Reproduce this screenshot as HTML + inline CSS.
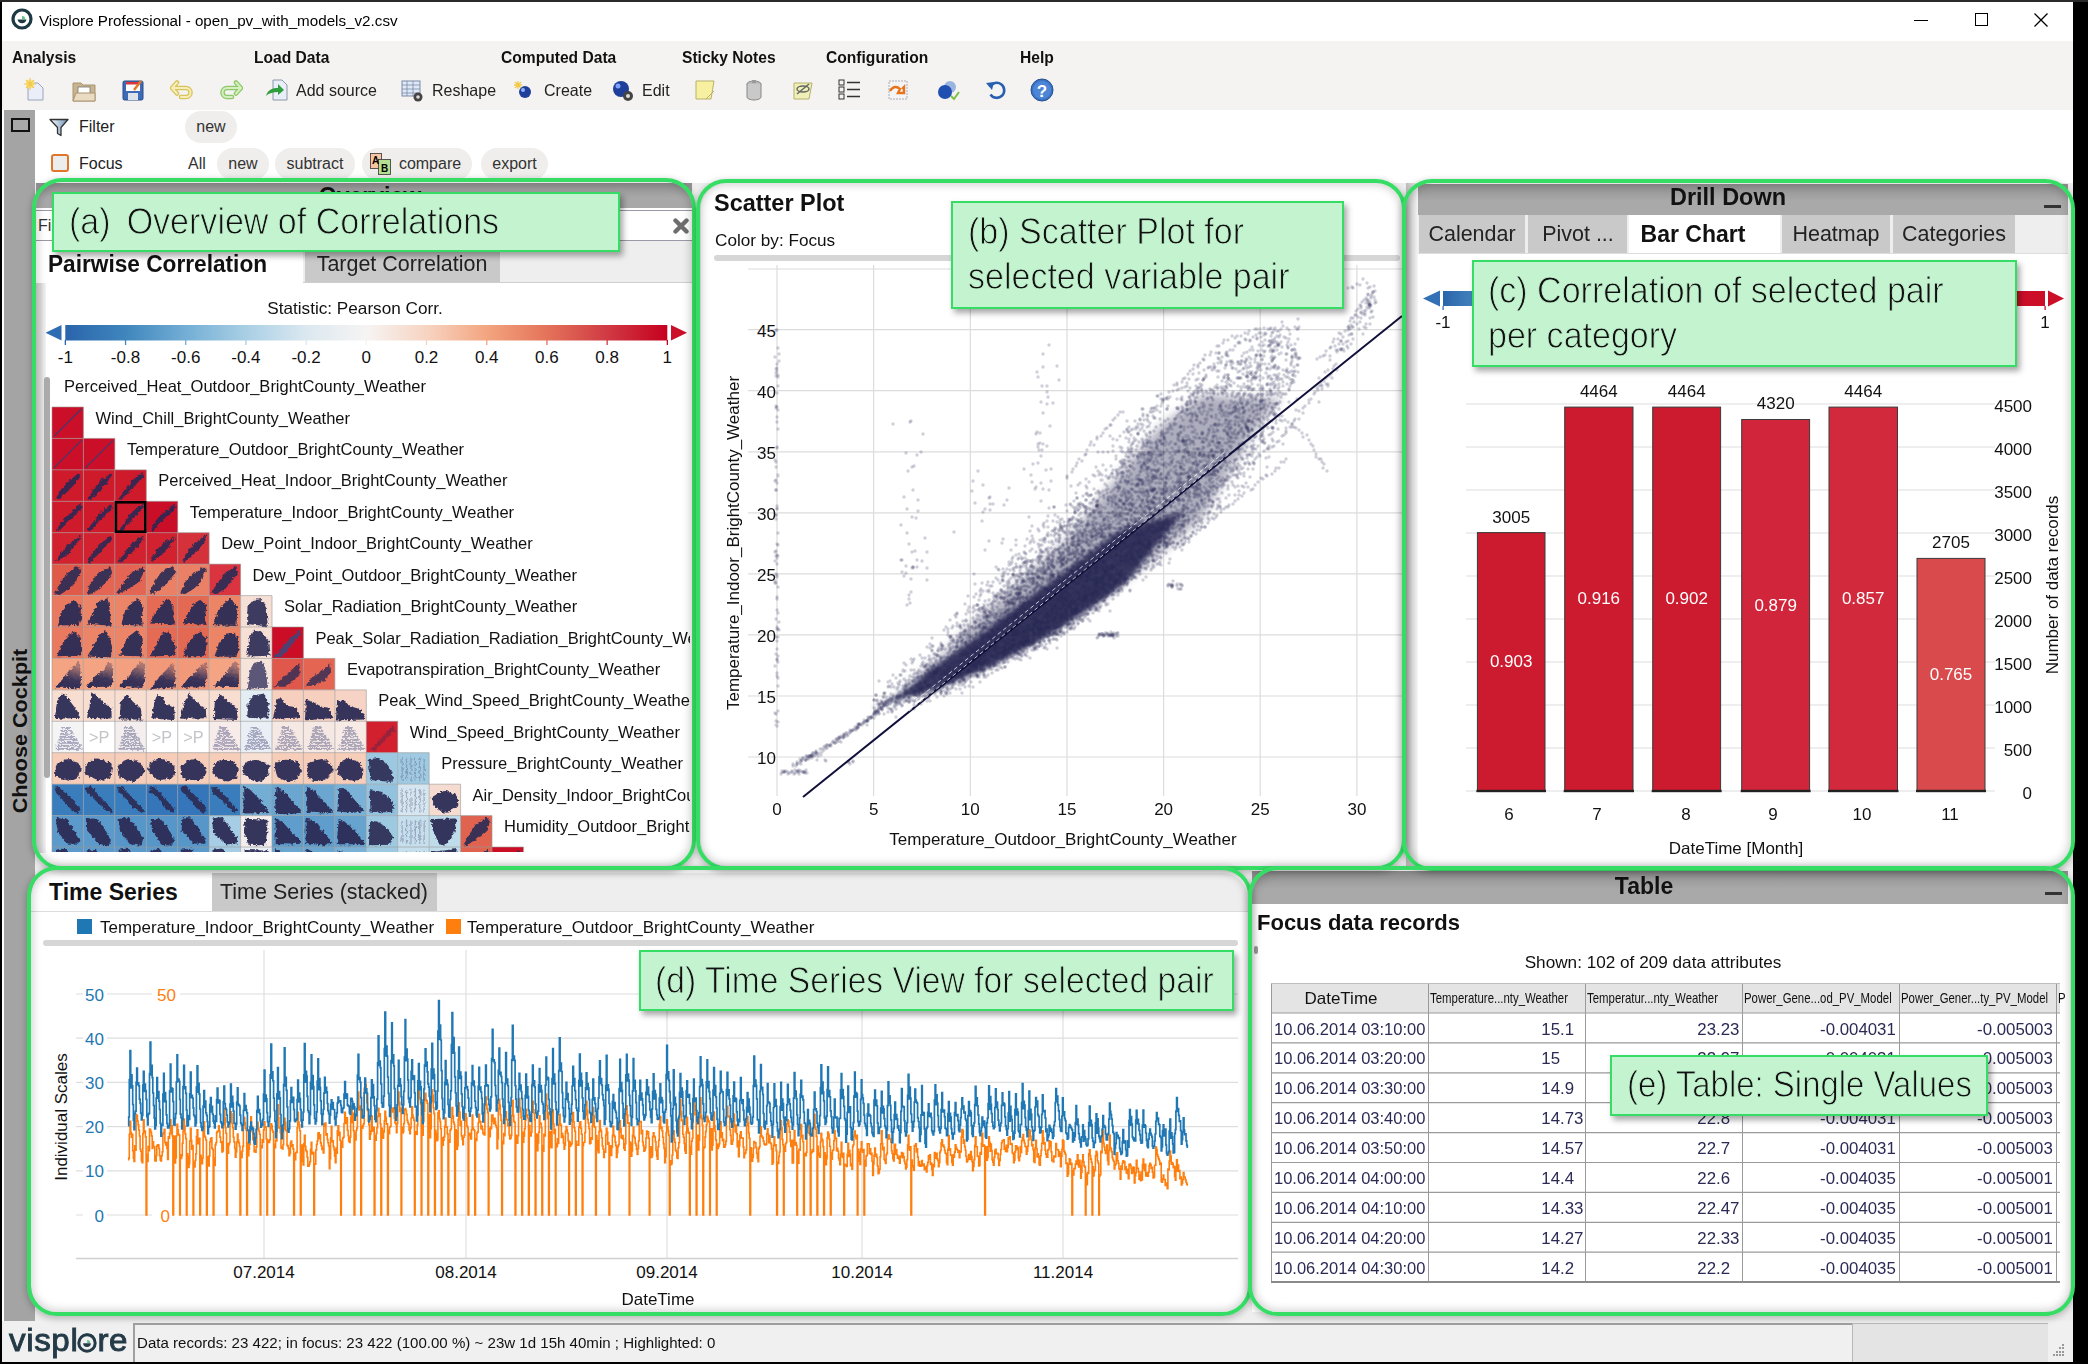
<!DOCTYPE html>
<html><head><meta charset="utf-8"><title>Visplore</title>
<style>
html,body{margin:0;padding:0;width:2088px;height:1364px;overflow:hidden;background:#000;}
body{position:relative;font-family:"Liberation Sans",sans-serif;}
.r{position:absolute;}
.t{position:absolute;white-space:nowrap;}
svg{overflow:hidden}
</style></head><body>
<div class="r" style="left:0px;top:0px;width:2088px;height:1364px;background:#000;"></div>
<div class="r" style="left:2px;top:2px;width:2071px;height:1360px;background:#fff;"></div>
<div class="r" style="left:0px;top:0px;width:2088px;height:2px;background:#2a2a2a;"></div>
<svg class="r" style="left:11px;top:8px" width="22" height="22" viewBox="0 0 22 22">
<circle cx="11" cy="11" r="9" fill="none" stroke="#1d3a44" stroke-width="3.2"/>
<path d="M6.5 11.5 A4.6 4.6 0 0 0 15.5 11.5 Z" fill="#1d3a44"/>
<path d="M11 11.3 L11 8 A3.4 3.4 0 0 1 14.3 11.3 Z" fill="#5fc08a"/>
</svg><div class="t" style="top:4.5px;height:31.0px;line-height:31.0px;font-size:15.5px;color:#000;left:39.0px;transform:scaleX(0.98);transform-origin:0 50%;">Visplore Professional - open_pv_with_models_v2.csv</div>
<div class="r" style="left:1914px;top:20px;width:14px;height:1.4px;background:#000;"></div>
<div class="r" style="left:1975px;top:13px;width:13px;height:13px;background:transparent;border:1.3px solid #000;box-sizing:border-box;"></div>
<svg class="r" style="left:2033px;top:12px" width="16" height="16" viewBox="0 0 16 16"><path d="M1.5 1.5 L14.5 14.5 M14.5 1.5 L1.5 14.5" stroke="#000" stroke-width="1.3"/></svg><div class="r" style="left:2px;top:41px;width:2071px;height:69px;background:#f4f3f2;"></div>
<div class="t" style="top:42.0px;height:32px;line-height:32px;font-size:16px;color:#111;font-weight:bold;left:12.0px;transform:scaleX(0.975);transform-origin:0 50%;">Analysis</div>
<div class="t" style="top:42.0px;height:32px;line-height:32px;font-size:16px;color:#111;font-weight:bold;left:254.0px;transform:scaleX(0.975);transform-origin:0 50%;">Load Data</div>
<div class="t" style="top:42.0px;height:32px;line-height:32px;font-size:16px;color:#111;font-weight:bold;left:501.0px;transform:scaleX(0.975);transform-origin:0 50%;">Computed Data</div>
<div class="t" style="top:42.0px;height:32px;line-height:32px;font-size:16px;color:#111;font-weight:bold;left:682.0px;transform:scaleX(0.975);transform-origin:0 50%;">Sticky Notes</div>
<div class="t" style="top:42.0px;height:32px;line-height:32px;font-size:16px;color:#111;font-weight:bold;left:826.0px;transform:scaleX(0.975);transform-origin:0 50%;">Configuration</div>
<div class="t" style="top:42.0px;height:32px;line-height:32px;font-size:16px;color:#111;font-weight:bold;left:1020.0px;transform:scaleX(0.975);transform-origin:0 50%;">Help</div>
<div class="t" style="top:73.5px;height:33.0px;line-height:33.0px;font-size:16.5px;color:#222;left:296.0px;transform:scaleX(0.97);transform-origin:0 50%;">Add source</div>
<div class="t" style="top:73.5px;height:33.0px;line-height:33.0px;font-size:16.5px;color:#222;left:432.0px;transform:scaleX(0.97);transform-origin:0 50%;">Reshape</div>
<div class="t" style="top:73.5px;height:33.0px;line-height:33.0px;font-size:16.5px;color:#222;left:544.0px;transform:scaleX(0.97);transform-origin:0 50%;">Create</div>
<div class="t" style="top:73.5px;height:33.0px;line-height:33.0px;font-size:16.5px;color:#222;left:642.0px;transform:scaleX(0.97);transform-origin:0 50%;">Edit</div>
<svg class="r" style="left:24px;top:78px" width="22" height="24" viewBox="0 0 22 24"><path d="M4 5 H14 L19 10 V22 H4 Z" fill="#e9eef8" stroke="#9aa4b8" stroke-width="1"/><circle cx="6" cy="6" r="4" fill="#fbe27a"/><path d="M6 0 V12 M0 6 H12 M2 2 L10 10 M10 2 L2 10" stroke="#f2c94c" stroke-width="1.2"/></svg><svg class="r" style="left:72px;top:80px" width="24" height="22" viewBox="0 0 24 22"><path d="M1 3 H9 L11 5 H23 V21 H1 Z" fill="#c9b48f" stroke="#a89471" stroke-width="1"/><rect x="6" y="7" width="12" height="7" fill="#fff" stroke="#777" stroke-width="0.8"/><path d="M1 21 L4 13 H23 V21 Z" fill="#e9dcc3" stroke="#a89471" stroke-width="1"/></svg><svg class="r" style="left:122px;top:79px" width="22" height="22" viewBox="0 0 22 22"><rect x="1" y="2" width="20" height="19" rx="1.5" fill="#3d6bb5" stroke="#2a4d8a"/><rect x="4" y="3" width="14" height="9" fill="#fff"/><rect x="4" y="3" width="14" height="2.5" fill="#d9363e"/><rect x="6" y="14" width="10" height="7" fill="#dde3ea"/><path d="M12 11 L19 2" stroke="#e07a2a" stroke-width="2.5"/></svg><svg class="r" style="left:170px;top:80px" width="24" height="20" viewBox="0 0 24 20"><g fill="none" stroke-linejoin="round" stroke-linecap="round"><path d="M7 2.5 L2 8 L7 13.5 M2.5 8 H16 A4.5 4.5 0 0 1 16 17 H11" stroke="#d8c35c" stroke-width="4.6"/><path d="M7 2.5 L2 8 L7 13.5 M2.5 8 H16 A4.5 4.5 0 0 1 16 17 H11" stroke="#f6eeb8" stroke-width="2"/></g></svg><svg class="r" style="left:219px;top:80px" width="24" height="20" viewBox="0 0 24 20"><g fill="none" stroke-linejoin="round" stroke-linecap="round"><path d="M17 2.5 L22 8 L17 13.5 M21.5 8 H8 A4.5 4.5 0 0 0 8 17 H13" stroke="#8fc86a" stroke-width="4.6"/><path d="M17 2.5 L22 8 L17 13.5 M21.5 8 H8 A4.5 4.5 0 0 0 8 17 H13" stroke="#d5efc0" stroke-width="2"/></g></svg><svg class="r" style="left:265px;top:79px" width="24" height="22" viewBox="0 0 24 22"><path d="M8 1 H17 L22 6 V21 H8 Z" fill="#e9eef8" stroke="#8a95a8" stroke-width="1"/><path d="M1 17 C3 10 8 9 13 9 V5 L19 11 L13 16 V13 C8 13 4 14 1 17 Z" fill="#2e9e3e"/></svg><svg class="r" style="left:401px;top:79px" width="24" height="24" viewBox="0 0 24 24"><rect x="1" y="2" width="18" height="15" fill="#dfe8f5" stroke="#7a8aa8"/><path d="M1 6 H19 M1 10 H19 M1 14 H19 M6 2 V17 M12 2 V17" stroke="#7a8aa8" stroke-width="0.8"/><circle cx="17" cy="18" r="4.5" fill="#444"/><circle cx="17" cy="18" r="1.8" fill="#ddd"/></svg><svg class="r" style="left:513px;top:80px" width="22" height="20" viewBox="0 0 22 20"><circle cx="12" cy="12" r="6" fill="#1f3f9a"/><circle cx="10" cy="10" r="2" fill="#8fb0ff"/><path d="M5 1 V9 M1 5 H9 M2 2 L8 8 M8 2 L2 8" stroke="#f2c94c" stroke-width="1.3"/></svg><svg class="r" style="left:611px;top:79px" width="24" height="24" viewBox="0 0 24 24"><circle cx="10" cy="10" r="8" fill="#1f3f9a"/><circle cx="7" cy="7" r="2.5" fill="#7fa0ff"/><circle cx="17" cy="17" r="5" fill="#444"/><circle cx="17" cy="17" r="2" fill="#ddd"/></svg><svg class="r" style="left:694px;top:79px" width="22" height="22" viewBox="0 0 22 22"><path d="M2 2 H20 L17 20 H2 Z" fill="#f7f0a0" stroke="#b9b06a" stroke-width="1"/><path d="M12 20 L20 12" stroke="#b9b06a"/></svg><svg class="r" style="left:743px;top:79px" width="22" height="22" viewBox="0 0 22 22"><ellipse cx="11" cy="5" rx="7" ry="3" fill="#bbb" stroke="#888"/><path d="M4 5 V18 A7 3 0 0 0 18 18 V5" fill="#c9c9c9" stroke="#888"/><rect x="9" y="1" width="4" height="3" fill="#999"/></svg><svg class="r" style="left:792px;top:79px" width="22" height="22" viewBox="0 0 22 22"><path d="M2 4 H20 L17 20 H2 Z" fill="#eef0b8" stroke="#b9b06a" stroke-width="1"/><ellipse cx="11" cy="10" rx="6" ry="3" fill="none" stroke="#666" stroke-width="1.5"/><path d="M5 15 L17 5" stroke="#666" stroke-width="1.5"/></svg><svg class="r" style="left:838px;top:79px" width="24" height="22" viewBox="0 0 24 22"><rect x="1" y="1" width="5" height="5" fill="none" stroke="#333"/><rect x="1" y="8" width="5" height="5" fill="none" stroke="#333"/><rect x="1" y="15" width="5" height="5" fill="none" stroke="#333"/><path d="M9 3.5 H22 M9 10.5 H22 M9 17.5 H22" stroke="#333" stroke-width="1.3"/></svg><svg class="r" style="left:887px;top:79px" width="22" height="22" viewBox="0 0 22 22"><rect x="2" y="2" width="18" height="18" fill="#f4f4f4" stroke="#aab" stroke-dasharray="2 1"/><path d="M3 12 C6 7 10 7 13 10 L11 14 H17 V8 L15 10" fill="none" stroke="#e8731a" stroke-width="2.4"/></svg><svg class="r" style="left:936px;top:79px" width="24" height="22" viewBox="0 0 24 22"><circle cx="14" cy="8" r="6" fill="#9ab3df"/><circle cx="9" cy="13" r="7" fill="#1f4fb0"/><path d="M15 17 L18 20 L23 13" fill="none" stroke="#7bc043" stroke-width="2"/></svg><svg class="r" style="left:985px;top:79px" width="22" height="22" viewBox="0 0 22 22"><path d="M5 8 A7.5 7.5 0 1 1 5.5 15.5" fill="none" stroke="#2a5fb0" stroke-width="2.6"/><path d="M1 4 L7 11 L9 3 Z" fill="#2a5fb0"/></svg><svg class="r" style="left:1030px;top:78px" width="24" height="24" viewBox="0 0 24 24"><circle cx="12" cy="12" r="11" fill="#3b73c4" stroke="#244f91"/><circle cx="12" cy="12" r="9" fill="#4d86d6"/><text x="12" y="18.5" font-size="17" font-weight="bold" fill="#fff" text-anchor="middle" font-family="Liberation Sans">?</text></svg><div class="r" style="left:4px;top:110px;width:31px;height:1211px;background:#a4a4a4;"></div>
<div class="r" style="left:11px;top:118px;width:19px;height:14px;background:transparent;border:2.5px solid #111;box-sizing:border-box;background:#a8a8a8;"></div>
<div class="t" style="left:-80px;top:716px;width:200px;height:30px;line-height:30px;text-align:center;font-size:21px;font-weight:bold;color:#111;transform:rotate(-90deg) scaleX(1.03)">Choose Cockpit</div><div class="r" style="left:35px;top:110px;width:2038px;height:70px;background:#fff;"></div>
<svg class="r" style="left:49px;top:118px" width="20" height="19" viewBox="0 0 20 19"><defs><linearGradient id="fg" x1="0" x2="1"><stop offset="0" stop-color="#fff"/><stop offset="1" stop-color="#6a8fb8"/></linearGradient></defs><path d="M1 1.5 H19 L12 9.5 V17.5 L8.5 15.5 V9.5 Z" fill="url(#fg)" stroke="#333" stroke-width="1.3" stroke-linejoin="round"/></svg><div class="t" style="top:111.0px;height:32px;line-height:32px;font-size:16px;color:#222;left:79.0px;">Filter</div>
<div class="r" style="left:185px;top:111px;width:52px;height:32px;background:#efeeec;border-radius:16px;"></div>
<div class="t" style="top:111.0px;height:32px;line-height:32px;font-size:16px;color:#333;left:-789.0px;width:2000px;text-align:center;">new</div>
<div class="r" style="left:51px;top:154px;width:18px;height:18px;background:#eceeee;border:2px solid #e0762c;border-radius:3px;box-sizing:border-box;"></div>
<div class="t" style="top:148.0px;height:32px;line-height:32px;font-size:16px;color:#222;left:79.0px;">Focus</div>
<div class="t" style="top:148.0px;height:32px;line-height:32px;font-size:16px;color:#333;left:188.0px;">All</div>
<div class="r" style="left:217px;top:148px;width:52px;height:32px;background:#efeeec;border-radius:16px;"></div>
<div class="t" style="top:148.0px;height:32px;line-height:32px;font-size:16px;color:#333;left:-757.0px;width:2000px;text-align:center;">new</div>
<div class="r" style="left:275px;top:148px;width:80px;height:32px;background:#efeeec;border-radius:16px;"></div>
<div class="t" style="top:148.0px;height:32px;line-height:32px;font-size:16px;color:#333;left:-685.0px;width:2000px;text-align:center;">subtract</div>
<div class="r" style="left:362px;top:148px;width:110px;height:32px;background:#efeeec;border-radius:16px;"></div>
<div class="t" style="top:148.0px;height:32px;line-height:32px;font-size:16px;color:#333;left:-570.0px;width:2000px;text-align:center;">compare</div>
<div class="r" style="left:481px;top:148px;width:67px;height:32px;background:#efeeec;border-radius:16px;"></div>
<div class="t" style="top:148.0px;height:32px;line-height:32px;font-size:16px;color:#333;left:-485.5px;width:2000px;text-align:center;">export</div>
<svg class="r" style="left:370px;top:153px" width="22" height="22" viewBox="0 0 22 22"><rect x="0.5" y="0.5" width="11" height="15" fill="#f7c59f" stroke="#333" stroke-width="0.8"/><rect x="8.5" y="6.5" width="12" height="15" fill="#b5e08f" stroke="#333" stroke-width="0.8"/><text x="2" y="11" font-size="10" font-weight="bold" font-family="Liberation Sans">A</text><text x="11" y="19" font-size="10" font-weight="bold" font-family="Liberation Sans">B</text></svg><div class="r" style="left:2px;top:1321px;width:2071px;height:41px;background:#f0f0f0;"></div>
<div class="r" style="left:133px;top:1323px;width:1720px;height:39px;background:#f0f0f0;border-left:2px solid #a0a0a0;border-top:2px solid #a0a0a0;box-sizing:border-box;"></div>
<div class="r" style="left:1852px;top:1323px;width:196px;height:39px;background:#e4e4e4;border-left:1.5px solid #b8b8b8;border-top:1.5px solid #b8b8b8;box-sizing:border-box;"></div>
<svg class="r" style="left:2052px;top:1343px" width="14" height="14" viewBox="0 0 14 14"><g fill="#9a9a9a"><rect x="10" y="1" width="2" height="2"/><rect x="7" y="4" width="2" height="2"/><rect x="10" y="4" width="2" height="2"/><rect x="4" y="8" width="2" height="2"/><rect x="7" y="8" width="2" height="2"/><rect x="10" y="8" width="2" height="2"/><rect x="1" y="11" width="2" height="2"/><rect x="4" y="11" width="2" height="2"/><rect x="7" y="11" width="2" height="2"/><rect x="10" y="11" width="2" height="2"/></g></svg><div class="t" style="top:1326.5px;height:31.0px;line-height:31.0px;font-size:15.5px;color:#111;left:137.0px;transform:scaleX(0.972);transform-origin:0 50%;">Data records: 23 422; in focus: 23 422 (100.00 %) ~ 23w 1d 15h 40min ; Highlighted: 0</div>
<div class="t" style="left:9px;top:1319.9px;height:40px;line-height:40px;font-size:32px;color:#243b47;letter-spacing:0.6px;-webkit-text-stroke:0.9px #243b47;transform:scaleX(1.035);transform-origin:0 50%">visplore</div><svg class="r" style="left:76.5px;top:1333px" width="20" height="20" viewBox="0 0 20 20"><circle cx="10" cy="10" r="8.2" fill="#f0f0f0" stroke="#243b47" stroke-width="3"/><path d="M6.2 10.3 A3.8 3.8 0 0 0 13.8 10.3 Z" fill="#243b47"/><path d="M10.2 10 V7 A3 3 0 0 1 13.2 10 Z" fill="#5fc08a"/></svg><div class="r" style="left:35px;top:183px;width:2038px;height:1138px;background:#eeeeee;"></div>
<div class="r" style="left:36px;top:183px;width:656px;height:683px;background:#fff;border-radius:0 0 26px 26px;"></div>
<div class="r" style="left:36px;top:183px;width:656px;height:25px;background:linear-gradient(#8f8f8f,#a8a8a8 60%);"></div>
<div class="t" style="top:172.5px;height:46px;line-height:46px;font-size:23px;color:#111;font-weight:bold;left:-630.0px;width:2000px;text-align:center;">Overview</div>
<div class="r" style="left:36px;top:210px;width:656px;height:1px;background:#9a9aa6;"></div>
<div class="r" style="left:36px;top:240px;width:656px;height:1px;background:#9a9aa6;"></div>
<div class="t" style="top:210.0px;height:32px;line-height:32px;font-size:16px;color:#333;left:38.0px;">Filter</div>
<svg class="r" style="left:673px;top:218px" width="16" height="16" viewBox="0 0 16 16"><path d="M2.5 2.5 L13.5 13.5 M13.5 2.5 L2.5 13.5" stroke="#6e6e6e" stroke-width="4.4" stroke-linecap="round"/></svg><div class="r" style="left:36px;top:241px;width:656px;height:42px;background:#eeeeee;"></div>
<div class="r" style="left:36px;top:241px;width:267px;height:42px;background:#ffffff;"></div>
<div class="r" style="left:305px;top:248px;width:195px;height:34px;background:#c9c9c9;"></div>
<div class="r" style="left:303px;top:282px;width:389px;height:1px;background:#cfcfcf;"></div>
<div class="t" style="top:241.0px;height:46px;line-height:46px;font-size:23px;color:#111;font-weight:bold;left:48.0px;transform:scaleX(0.985);transform-origin:0 50%;">Pairwise Correlation</div>
<div class="t" style="top:242.0px;height:44px;line-height:44px;font-size:22px;color:#222;left:-598.0px;width:2000px;text-align:center;transform:scaleX(0.976);transform-origin:50% 50%;">Target Correlation</div>
<div class="t" style="top:291.5px;height:33.0px;line-height:33.0px;font-size:16.5px;color:#111;left:-645.0px;width:2000px;text-align:center;transform:scaleX(1.04);transform-origin:50% 50%;">Statistic: Pearson Corr.</div>
<svg class="r" style="left:40px;top:318px" width="650" height="32" viewBox="40 318 650 32"><defs><linearGradient id="cb"><stop offset="0.00" stop-color="#2a64ab"/><stop offset="0.10" stop-color="#3f86bd"/><stop offset="0.20" stop-color="#73aed5"/><stop offset="0.30" stop-color="#a9cfe5"/><stop offset="0.40" stop-color="#dbe8f0"/><stop offset="0.50" stop-color="#f6f4f3"/><stop offset="0.60" stop-color="#f7d4c2"/><stop offset="0.70" stop-color="#f3a580"/><stop offset="0.80" stop-color="#e4735a"/><stop offset="0.90" stop-color="#d03a43"/><stop offset="1.00" stop-color="#c6001f"/></linearGradient></defs><rect x="65.3" y="325" width="602" height="15.5" fill="url(#cb)"/><path d="M45.5 332.8 L61.5 325 V340.5 Z" fill="#2f6db3"/><path d="M687 332.8 L671 325 V340.5 Z" fill="#cc0f28"/><rect x="64.7" y="340" width="1.3" height="5" fill="#2a64ab"/><rect x="124.9" y="340" width="1.3" height="5" fill="#3f86bd"/><rect x="185.1" y="340" width="1.3" height="5" fill="#73aed5"/><rect x="245.3" y="340" width="1.3" height="5" fill="#a9cfe5"/><rect x="305.5" y="340" width="1.3" height="5" fill="#dbe8f0"/><rect x="365.7" y="340" width="1.3" height="5" fill="#f6f4f3"/><rect x="425.9" y="340" width="1.3" height="5" fill="#f7d4c2"/><rect x="486.1" y="340" width="1.3" height="5" fill="#f3a580"/><rect x="546.3" y="340" width="1.3" height="5" fill="#e4735a"/><rect x="606.5" y="340" width="1.3" height="5" fill="#d03a43"/><rect x="666.7" y="340" width="1.3" height="5" fill="#c6001f"/></svg><div class="t" style="top:340.5px;height:34px;line-height:34px;font-size:17px;color:#111;left:-934.7px;width:2000px;text-align:center;">-1</div>
<div class="t" style="top:340.5px;height:34px;line-height:34px;font-size:17px;color:#111;left:-874.5px;width:2000px;text-align:center;">-0.8</div>
<div class="t" style="top:340.5px;height:34px;line-height:34px;font-size:17px;color:#111;left:-814.3px;width:2000px;text-align:center;">-0.6</div>
<div class="t" style="top:340.5px;height:34px;line-height:34px;font-size:17px;color:#111;left:-754.1px;width:2000px;text-align:center;">-0.4</div>
<div class="t" style="top:340.5px;height:34px;line-height:34px;font-size:17px;color:#111;left:-693.9px;width:2000px;text-align:center;">-0.2</div>
<div class="t" style="top:340.5px;height:34px;line-height:34px;font-size:17px;color:#111;left:-633.7px;width:2000px;text-align:center;">0</div>
<div class="t" style="top:340.5px;height:34px;line-height:34px;font-size:17px;color:#111;left:-573.5px;width:2000px;text-align:center;">0.2</div>
<div class="t" style="top:340.5px;height:34px;line-height:34px;font-size:17px;color:#111;left:-513.3px;width:2000px;text-align:center;">0.4</div>
<div class="t" style="top:340.5px;height:34px;line-height:34px;font-size:17px;color:#111;left:-453.1px;width:2000px;text-align:center;">0.6</div>
<div class="t" style="top:340.5px;height:34px;line-height:34px;font-size:17px;color:#111;left:-392.9px;width:2000px;text-align:center;">0.8</div>
<div class="t" style="top:340.5px;height:34px;line-height:34px;font-size:17px;color:#111;left:-332.7px;width:2000px;text-align:center;">1</div>
<div class="r" style="left:36px;top:283px;width:10px;height:570px;background:linear-gradient(90deg,#cfcfcf,#dedede 55%,#f4f4f4);"></div>
<div class="r" style="left:43.5px;top:377px;width:6px;height:401px;background:#ababab;border-radius:3px;"></div>
<svg class="r" style="left:36px;top:370px" width="656" height="482" viewBox="36 370 656 482"><defs><linearGradient id="gv" x1="0" y1="1" x2="0.3" y2="0"><stop offset="0" stop-color="#2a2a55"/><stop offset="0.5" stop-color="#2a2a55" stop-opacity="0.9"/><stop offset="1" stop-color="#2a2a55" stop-opacity="0.35"/></linearGradient><filter id="rough" x="0" y="0" width="100%" height="100%"><feTurbulence type="fractalNoise" baseFrequency="0.35" numOctaves="2" seed="4"/><feDisplacementMap in="SourceGraphic" scale="4.5" xChannelSelector="R" yChannelSelector="G"/></filter></defs><rect x="52.0" y="407.0" width="31.43" height="31.43" fill="#cc0f28"/><rect x="52.0" y="438.4" width="31.43" height="31.43" fill="#cc0f28"/><rect x="83.4" y="438.4" width="31.43" height="31.43" fill="#cc0f28"/><rect x="52.0" y="469.9" width="31.43" height="31.43" fill="#cf1a2c"/><rect x="83.4" y="469.9" width="31.43" height="31.43" fill="#cf1a2c"/><rect x="114.9" y="469.9" width="31.43" height="31.43" fill="#cf1a2c"/><rect x="52.0" y="501.3" width="31.43" height="31.43" fill="#cf1a2c"/><rect x="83.4" y="501.3" width="31.43" height="31.43" fill="#cf1a2c"/><rect x="114.9" y="501.3" width="31.43" height="31.43" fill="#cf1a2c"/><rect x="146.3" y="501.3" width="31.43" height="31.43" fill="#cb0e27"/><rect x="52.0" y="532.7" width="31.43" height="31.43" fill="#d2222f"/><rect x="83.4" y="532.7" width="31.43" height="31.43" fill="#d2222f"/><rect x="114.9" y="532.7" width="31.43" height="31.43" fill="#d2222f"/><rect x="146.3" y="532.7" width="31.43" height="31.43" fill="#d2222f"/><rect x="177.7" y="532.7" width="31.43" height="31.43" fill="#d4313b"/><rect x="52.0" y="564.1" width="31.43" height="31.43" fill="#e05a4a"/><rect x="83.4" y="564.1" width="31.43" height="31.43" fill="#e46553"/><rect x="114.9" y="564.1" width="31.43" height="31.43" fill="#e46553"/><rect x="146.3" y="564.1" width="31.43" height="31.43" fill="#ea8065"/><rect x="177.7" y="564.1" width="31.43" height="31.43" fill="#ea8065"/><rect x="209.2" y="564.1" width="31.43" height="31.43" fill="#d9343f"/><rect x="52.0" y="595.6" width="31.43" height="31.43" fill="#e9795f"/><rect x="83.4" y="595.6" width="31.43" height="31.43" fill="#ec8568"/><rect x="114.9" y="595.6" width="31.43" height="31.43" fill="#ec8568"/><rect x="146.3" y="595.6" width="31.43" height="31.43" fill="#e56b55"/><rect x="177.7" y="595.6" width="31.43" height="31.43" fill="#e46952"/><rect x="209.2" y="595.6" width="31.43" height="31.43" fill="#ec8466"/><rect x="240.6" y="595.6" width="31.43" height="31.43" fill="#f6dfd5"/><rect x="52.0" y="627.0" width="31.43" height="31.43" fill="#e9795f"/><rect x="83.4" y="627.0" width="31.43" height="31.43" fill="#ec8568"/><rect x="114.9" y="627.0" width="31.43" height="31.43" fill="#ec8568"/><rect x="146.3" y="627.0" width="31.43" height="31.43" fill="#e56b55"/><rect x="177.7" y="627.0" width="31.43" height="31.43" fill="#e46952"/><rect x="209.2" y="627.0" width="31.43" height="31.43" fill="#ec8466"/><rect x="240.6" y="627.0" width="31.43" height="31.43" fill="#f6e0d6"/><rect x="272.0" y="627.0" width="31.43" height="31.43" fill="#cc0d26"/><rect x="52.0" y="658.4" width="31.43" height="31.43" fill="#f4a383"/><rect x="83.4" y="658.4" width="31.43" height="31.43" fill="#f4a383"/><rect x="114.9" y="658.4" width="31.43" height="31.43" fill="#f2a080"/><rect x="146.3" y="658.4" width="31.43" height="31.43" fill="#f2997a"/><rect x="177.7" y="658.4" width="31.43" height="31.43" fill="#f2997a"/><rect x="209.2" y="658.4" width="31.43" height="31.43" fill="#f4a383"/><rect x="240.6" y="658.4" width="31.43" height="31.43" fill="#f6e3da"/><rect x="272.0" y="658.4" width="31.43" height="31.43" fill="#e0584b"/><rect x="303.4" y="658.4" width="31.43" height="31.43" fill="#e36552"/><rect x="52.0" y="689.9" width="31.43" height="31.43" fill="#f8ddd1"/><rect x="83.4" y="689.9" width="31.43" height="31.43" fill="#f8ddd1"/><rect x="114.9" y="689.9" width="31.43" height="31.43" fill="#f8ddd1"/><rect x="146.3" y="689.9" width="31.43" height="31.43" fill="#f8ddd1"/><rect x="177.7" y="689.9" width="31.43" height="31.43" fill="#f8ddd1"/><rect x="209.2" y="689.9" width="31.43" height="31.43" fill="#f8ddd1"/><rect x="240.6" y="689.9" width="31.43" height="31.43" fill="#e4edf3"/><rect x="272.0" y="689.9" width="31.43" height="31.43" fill="#f6cfbf"/><rect x="303.4" y="689.9" width="31.43" height="31.43" fill="#f6cfbf"/><rect x="334.9" y="689.9" width="31.43" height="31.43" fill="#f6d3c4"/><rect x="52.0" y="721.3" width="31.43" height="31.43" fill="#f4f4f4"/><rect x="83.4" y="721.3" width="31.43" height="31.43" fill="#ffffff"/><rect x="114.9" y="721.3" width="31.43" height="31.43" fill="#f4efee"/><rect x="146.3" y="721.3" width="31.43" height="31.43" fill="#ffffff"/><rect x="177.7" y="721.3" width="31.43" height="31.43" fill="#ffffff"/><rect x="209.2" y="721.3" width="31.43" height="31.43" fill="#f7ecea"/><rect x="240.6" y="721.3" width="31.43" height="31.43" fill="#e9eff5"/><rect x="272.0" y="721.3" width="31.43" height="31.43" fill="#f6e8e3"/><rect x="303.4" y="721.3" width="31.43" height="31.43" fill="#f6e8e3"/><rect x="334.9" y="721.3" width="31.43" height="31.43" fill="#f8ebe6"/><rect x="366.3" y="721.3" width="31.43" height="31.43" fill="#d3202f"/><rect x="52.0" y="752.7" width="31.43" height="31.43" fill="#f6cdb9"/><rect x="83.4" y="752.7" width="31.43" height="31.43" fill="#f6cdb9"/><rect x="114.9" y="752.7" width="31.43" height="31.43" fill="#f6cdb9"/><rect x="146.3" y="752.7" width="31.43" height="31.43" fill="#f6cdb9"/><rect x="177.7" y="752.7" width="31.43" height="31.43" fill="#f6cdb9"/><rect x="209.2" y="752.7" width="31.43" height="31.43" fill="#f6cdb9"/><rect x="240.6" y="752.7" width="31.43" height="31.43" fill="#f8dfd4"/><rect x="272.0" y="752.7" width="31.43" height="31.43" fill="#f6cdb9"/><rect x="303.4" y="752.7" width="31.43" height="31.43" fill="#f6cdb9"/><rect x="334.9" y="752.7" width="31.43" height="31.43" fill="#f6cdb9"/><rect x="366.3" y="752.7" width="31.43" height="31.43" fill="#9dc8e1"/><rect x="397.7" y="752.7" width="31.43" height="31.43" fill="#9fcae2"/><rect x="52.0" y="784.2" width="31.43" height="31.43" fill="#3a7dbd"/><rect x="83.4" y="784.2" width="31.43" height="31.43" fill="#3a7dbd"/><rect x="114.9" y="784.2" width="31.43" height="31.43" fill="#3a7dbd"/><rect x="146.3" y="784.2" width="31.43" height="31.43" fill="#3575b9"/><rect x="177.7" y="784.2" width="31.43" height="31.43" fill="#3575b9"/><rect x="209.2" y="784.2" width="31.43" height="31.43" fill="#3a7dbd"/><rect x="240.6" y="784.2" width="31.43" height="31.43" fill="#74add4"/><rect x="272.0" y="784.2" width="31.43" height="31.43" fill="#6aa6d0"/><rect x="303.4" y="784.2" width="31.43" height="31.43" fill="#6aa6d0"/><rect x="334.9" y="784.2" width="31.43" height="31.43" fill="#7ab1d6"/><rect x="366.3" y="784.2" width="31.43" height="31.43" fill="#93c2de"/><rect x="397.7" y="784.2" width="31.43" height="31.43" fill="#d5e6f0"/><rect x="429.2" y="784.2" width="31.43" height="31.43" fill="#f6dcd0"/><rect x="52.0" y="815.6" width="31.43" height="31.43" fill="#5b9acb"/><rect x="83.4" y="815.6" width="31.43" height="31.43" fill="#5b9acb"/><rect x="114.9" y="815.6" width="31.43" height="31.43" fill="#5796c8"/><rect x="146.3" y="815.6" width="31.43" height="31.43" fill="#5796c8"/><rect x="177.7" y="815.6" width="31.43" height="31.43" fill="#5796c8"/><rect x="209.2" y="815.6" width="31.43" height="31.43" fill="#a6cde3"/><rect x="240.6" y="815.6" width="31.43" height="31.43" fill="#f3eeec"/><rect x="272.0" y="815.6" width="31.43" height="31.43" fill="#5f9dcc"/><rect x="303.4" y="815.6" width="31.43" height="31.43" fill="#5f9dcc"/><rect x="334.9" y="815.6" width="31.43" height="31.43" fill="#67a3cf"/><rect x="366.3" y="815.6" width="31.43" height="31.43" fill="#9ecae1"/><rect x="397.7" y="815.6" width="31.43" height="31.43" fill="#c6dfed"/><rect x="429.2" y="815.6" width="31.43" height="31.43" fill="#bfdcea"/><rect x="460.6" y="815.6" width="31.43" height="31.43" fill="#e06350"/><rect x="52.0" y="847.0" width="31.43" height="31.43" fill="#5b9acb"/><rect x="83.4" y="847.0" width="31.43" height="31.43" fill="#5b9acb"/><rect x="114.9" y="847.0" width="31.43" height="31.43" fill="#5b9acb"/><rect x="146.3" y="847.0" width="31.43" height="31.43" fill="#5b9acb"/><rect x="177.7" y="847.0" width="31.43" height="31.43" fill="#5b9acb"/><rect x="209.2" y="847.0" width="31.43" height="31.43" fill="#a6cde3"/><rect x="240.6" y="847.0" width="31.43" height="31.43" fill="#e8eef3"/><rect x="272.0" y="847.0" width="31.43" height="31.43" fill="#6aa6d0"/><rect x="303.4" y="847.0" width="31.43" height="31.43" fill="#6aa6d0"/><rect x="334.9" y="847.0" width="31.43" height="31.43" fill="#7ab1d6"/><rect x="366.3" y="847.0" width="31.43" height="31.43" fill="#9ecae1"/><rect x="397.7" y="847.0" width="31.43" height="31.43" fill="#c6dfed"/><rect x="429.2" y="847.0" width="31.43" height="31.43" fill="#bfdcea"/><rect x="460.6" y="847.0" width="31.43" height="31.43" fill="#e06350"/><rect x="492.0" y="847.0" width="31.43" height="31.43" fill="#cc0d26"/><g filter="url(#rough)"><path d="M55.3 498.9 L61.2 489.5 L69.5 480.0 L78.7 473.6 L80.5 475.6 L74.9 483.9 L66.8 492.4 L58.5 499.1Z" fill="#2a2a55" opacity="0.9"/><path d="M87.5 499.5 L92.9 489.8 L101.0 480.0 L111.6 473.2 L112.0 475.3 L106.1 484.0 L98.0 493.2 L90.1 500.5Z" fill="#2a2a55" opacity="0.9"/><path d="M118.4 499.3 L124.2 490.2 L132.9 480.1 L141.8 472.5 L144.7 476.0 L137.1 483.6 L129.0 492.3 L120.9 499.9Z" fill="#2a2a55" opacity="0.9"/><path d="M55.9 531.0 L61.8 521.6 L70.0 513.2 L80.0 503.8 L81.6 508.5 L74.8 515.6 L66.5 523.4 L58.9 531.3Z" fill="#2a2a55" opacity="0.9"/><path d="M86.8 529.4 L93.5 521.7 L99.9 512.9 L110.9 503.8 L112.0 508.1 L106.1 514.6 L97.8 523.1 L90.1 530.8Z" fill="#2a2a55" opacity="0.9"/><path d="M119.3 531.1 L124.3 521.7 L131.8 511.5 L142.7 503.5 L143.2 507.4 L137.1 514.8 L128.1 524.6 L120.8 532.0Z" fill="#2a2a55" opacity="0.9"/><path d="M150.8 530.0 L155.6 520.8 L163.8 512.5 L174.1 504.7 L176.0 507.6 L168.2 515.8 L159.9 523.5 L153.5 531.2Z" fill="#2a2a55" opacity="0.9"/><path d="M55.9 560.7 L61.3 552.4 L68.4 543.9 L79.9 535.0 L81.2 538.9 L74.3 546.6 L66.5 555.8 L57.4 561.7Z" fill="#2a2a55" opacity="0.9"/><path d="M87.5 562.5 L92.4 552.1 L100.9 543.4 L110.8 535.5 L112.1 539.2 L105.1 546.6 L98.1 554.5 L89.8 563.0Z" fill="#2a2a55" opacity="0.9"/><path d="M118.3 561.1 L124.9 551.7 L131.6 543.6 L142.9 535.1 L143.4 538.7 L137.5 546.7 L129.7 554.7 L120.8 562.9Z" fill="#2a2a55" opacity="0.9"/><path d="M150.8 561.5 L155.2 551.5 L163.6 543.1 L174.5 536.5 L174.6 538.6 L168.9 547.1 L161.0 555.1 L151.9 562.2Z" fill="#2a2a55" opacity="0.9"/><path d="M182.0 561.2 L186.9 552.0 L194.9 543.5 L206.2 535.2 L205.7 539.8 L200.4 547.8 L191.7 556.2 L184.8 562.1Z" fill="#2a2a55" opacity="0.9"/><path d="M55.1 593.9 L60.3 583.1 L67.2 573.2 L78.0 565.6 L81.1 571.5 L76.4 580.3 L68.7 589.2 L59.4 595.0Z" fill="#2a2a55" opacity="0.92"/><path d="M86.9 593.3 L90.1 583.6 L98.3 573.1 L110.6 566.7 L112.1 573.1 L107.3 581.0 L98.5 589.6 L89.7 594.7Z" fill="#2a2a55" opacity="0.92"/><path d="M117.0 592.3 L122.8 583.8 L129.7 574.3 L142.6 567.4 L144.6 570.8 L138.8 582.3 L129.4 588.1 L120.6 594.1Z" fill="#2a2a55" opacity="0.92"/><path d="M148.6 593.0 L154.8 581.8 L160.9 572.6 L172.1 565.6 L176.4 572.9 L168.8 581.4 L161.5 588.2 L152.2 594.4Z" fill="#2a2a55" opacity="0.92"/><path d="M180.5 592.7 L184.8 582.6 L192.5 573.7 L205.0 566.4 L205.6 571.2 L201.0 581.7 L194.1 588.4 L184.8 594.3Z" fill="#2a2a55" opacity="0.92"/><path d="M211.5 592.7 L217.0 583.5 L224.7 574.1 L235.8 566.0 L238.2 572.5 L231.6 581.2 L224.7 589.6 L216.5 593.7Z" fill="#2a2a55" opacity="0.92"/><path d="M58.0 625.4 L60.7 612.8 L66.5 604.4 L75.1 600.6 L80.6 607.1 L81.0 617.8 L78.4 625.1Z" fill="#2a2a55" opacity="0.95"/><path d="M86.6 623.4 L93.7 611.4 L97.9 602.2 L107.3 598.3 L109.6 607.7 L110.5 618.7 L111.6 625.9Z" fill="#2a2a55" opacity="0.95"/><path d="M121.0 624.7 L125.2 611.4 L131.4 603.5 L138.2 598.1 L143.3 607.9 L141.8 617.0 L142.7 625.8Z" fill="#2a2a55" opacity="0.95"/><path d="M150.2 623.5 L154.9 613.2 L162.8 603.1 L168.5 599.0 L173.5 606.3 L173.3 617.6 L175.4 624.5Z" fill="#2a2a55" opacity="0.95"/><path d="M183.2 623.4 L187.7 613.7 L194.0 603.5 L200.3 599.8 L206.6 605.5 L204.7 618.4 L206.7 624.9Z" fill="#2a2a55" opacity="0.95"/><path d="M213.7 625.2 L217.6 612.1 L223.9 603.7 L231.2 598.5 L237.4 608.0 L236.8 618.2 L236.5 625.9Z" fill="#2a2a55" opacity="0.95"/><path d="M247.1 624.1 L247.5 606.7 L253.1 599.9 L261.6 598.9 L266.7 609.0 L267.7 626.4Z" fill="#2a2a55" opacity="0.92"/><path d="M56.7 656.2 L61.3 645.3 L68.7 635.0 L74.6 631.5 L80.8 637.7 L81.0 650.5 L79.6 655.4Z" fill="#2a2a55" opacity="0.95"/><path d="M87.3 656.6 L93.4 645.7 L100.3 634.1 L105.1 630.0 L110.1 638.7 L112.8 650.3 L110.3 657.4Z" fill="#2a2a55" opacity="0.95"/><path d="M119.0 655.7 L125.0 643.0 L129.3 635.9 L136.8 630.3 L142.8 638.6 L141.6 648.5 L142.3 656.2Z" fill="#2a2a55" opacity="0.95"/><path d="M150.1 656.2 L157.2 644.0 L162.1 633.7 L168.2 631.3 L172.7 639.2 L175.9 647.7 L175.3 655.8Z" fill="#2a2a55" opacity="0.95"/><path d="M183.3 656.7 L186.5 644.8 L193.9 635.8 L199.6 631.6 L206.8 638.6 L206.1 647.8 L205.4 655.8Z" fill="#2a2a55" opacity="0.95"/><path d="M214.5 656.5 L218.8 643.3 L225.3 635.3 L230.8 632.0 L237.3 636.8 L238.8 647.9 L236.3 656.9Z" fill="#2a2a55" opacity="0.95"/><path d="M247.2 656.4 L248.9 639.4 L252.6 630.7 L261.2 631.5 L268.1 639.7 L269.6 655.8Z" fill="#2a2a55" opacity="0.92"/><path d="M273.6 656.9 L289.3 639.6 L300.3 629.5 L300.9 633.3 L290.9 645.9 L281.4 656.9Z" fill="#3a4a80" opacity="0.85"/><path d="M55.2 687.4 L65.5 676.1 L71.5 668.8 L77.8 661.8 L79.9 662.9 L81.0 678.0 L79.9 688.5Z" fill="url(#gv)"/><path d="M86.2 687.1 L95.0 676.3 L103.6 670.0 L107.8 661.4 L111.5 663.8 L113.1 677.9 L111.9 686.8Z" fill="url(#gv)"/><path d="M118.4 686.9 L127.5 677.5 L133.6 668.8 L140.7 661.0 L143.9 664.1 L144.9 677.0 L143.3 687.9Z" fill="url(#gv)"/><path d="M150.4 688.9 L159.3 676.8 L166.7 669.4 L171.7 662.8 L173.3 663.8 L175.6 677.3 L174.6 687.6Z" fill="url(#gv)"/><path d="M180.7 687.7 L189.1 677.3 L197.6 669.3 L203.0 663.4 L207.0 662.2 L207.4 677.6 L204.9 687.3Z" fill="url(#gv)"/><path d="M212.3 686.6 L221.8 678.4 L228.2 670.4 L234.8 661.3 L238.3 663.4 L239.1 677.8 L238.0 687.3Z" fill="url(#gv)"/><path d="M247.8 689.0 L249.6 670.8 L254.0 663.1 L261.4 660.8 L266.0 670.1 L267.8 687.7Z" fill="#2a2a55" opacity="0.75"/><path d="M274.1 686.8 L281.2 679.2 L290.4 670.9 L299.4 662.9 L299.5 673.6 L294.6 680.1 L284.3 686.8Z" fill="#2a2a55" opacity="0.8"/><path d="M305.3 686.0 L311.6 678.1 L323.0 670.1 L330.1 662.4 L331.0 671.8 L325.2 679.6 L314.8 685.7Z" fill="#2a2a55" opacity="0.8"/><path d="M54.7 719.1 L56.9 702.5 L61.9 693.4 L66.8 696.3 L71.2 702.7 L77.2 710.8 L80.0 717.8Z" fill="#2a2a55" opacity="0.95"/><path d="M87.1 718.0 L90.1 703.5 L92.3 692.2 L98.3 697.0 L103.8 703.0 L111.5 708.7 L111.6 718.4Z" fill="#2a2a55" opacity="0.95"/><path d="M119.6 719.5 L120.7 702.7 L125.5 695.1 L129.3 696.2 L132.9 701.8 L140.5 707.9 L142.4 719.6Z" fill="#2a2a55" opacity="0.95"/><path d="M151.3 718.2 L154.1 703.9 L157.3 695.0 L161.8 696.3 L165.2 703.4 L174.4 708.1 L174.6 720.2Z" fill="#2a2a55" opacity="0.95"/><path d="M180.3 718.8 L183.5 704.6 L189.1 692.6 L192.6 698.5 L198.3 703.2 L205.8 708.9 L206.4 718.2Z" fill="#2a2a55" opacity="0.95"/><path d="M213.8 719.0 L214.7 703.0 L219.9 694.0 L224.0 697.4 L228.6 702.0 L236.5 707.9 L238.0 719.9Z" fill="#2a2a55" opacity="0.95"/><path d="M247.4 717.8 L247.6 703.5 L253.6 695.8 L263.8 693.5 L268.5 703.2 L268.3 718.7Z" fill="#2a2a55" opacity="0.92"/><path d="M273.2 718.8 L276.6 698.1 L281.7 699.6 L288.0 706.1 L296.3 707.3 L299.8 715.5 L301.2 717.6Z" fill="#2a2a55" opacity="0.95"/><path d="M305.1 720.6 L305.7 699.5 L312.6 701.8 L321.1 706.5 L328.7 707.7 L331.3 713.7 L333.4 717.9Z" fill="#2a2a55" opacity="0.95"/><path d="M335.9 720.6 L337.1 700.5 L343.0 700.8 L351.3 706.6 L360.4 709.2 L364.6 716.2 L363.3 719.4Z" fill="#2a2a55" opacity="0.95"/><rect x="62.1" y="727.0" width="7.9" height="1.9" fill="#6a6a92" opacity="0.55"/><rect x="61.2" y="729.9" width="10.6" height="1.9" fill="#6a6a92" opacity="0.55"/><rect x="60.3" y="732.9" width="13.2" height="1.9" fill="#6a6a92" opacity="0.55"/><rect x="59.4" y="735.9" width="15.9" height="1.9" fill="#6a6a92" opacity="0.55"/><rect x="58.5" y="738.9" width="18.6" height="1.9" fill="#6a6a92" opacity="0.55"/><rect x="57.6" y="741.9" width="21.3" height="1.9" fill="#6a6a92" opacity="0.55"/><rect x="56.7" y="744.9" width="24.0" height="1.9" fill="#6a6a92" opacity="0.55"/><rect x="55.8" y="747.9" width="26.7" height="1.9" fill="#6a6a92" opacity="0.55"/><rect x="124.9" y="727.0" width="7.9" height="1.9" fill="#6a6a92" opacity="0.55"/><rect x="124.0" y="729.9" width="10.6" height="1.9" fill="#6a6a92" opacity="0.55"/><rect x="123.1" y="732.9" width="13.2" height="1.9" fill="#6a6a92" opacity="0.55"/><rect x="122.2" y="735.9" width="15.9" height="1.9" fill="#6a6a92" opacity="0.55"/><rect x="121.3" y="738.9" width="18.6" height="1.9" fill="#6a6a92" opacity="0.55"/><rect x="120.4" y="741.9" width="21.3" height="1.9" fill="#6a6a92" opacity="0.55"/><rect x="119.5" y="744.9" width="24.0" height="1.9" fill="#6a6a92" opacity="0.55"/><rect x="118.6" y="747.9" width="26.7" height="1.9" fill="#6a6a92" opacity="0.55"/><rect x="219.2" y="727.0" width="7.9" height="1.9" fill="#6a6a92" opacity="0.55"/><rect x="218.3" y="729.9" width="10.6" height="1.9" fill="#6a6a92" opacity="0.55"/><rect x="217.4" y="732.9" width="13.2" height="1.9" fill="#6a6a92" opacity="0.55"/><rect x="216.5" y="735.9" width="15.9" height="1.9" fill="#6a6a92" opacity="0.55"/><rect x="215.6" y="738.9" width="18.6" height="1.9" fill="#6a6a92" opacity="0.55"/><rect x="214.7" y="741.9" width="21.3" height="1.9" fill="#6a6a92" opacity="0.55"/><rect x="213.8" y="744.9" width="24.0" height="1.9" fill="#6a6a92" opacity="0.55"/><rect x="212.9" y="747.9" width="26.7" height="1.9" fill="#6a6a92" opacity="0.55"/><rect x="250.6" y="727.0" width="7.9" height="1.9" fill="#6a6a92" opacity="0.55"/><rect x="249.7" y="729.9" width="10.6" height="1.9" fill="#6a6a92" opacity="0.55"/><rect x="248.8" y="732.9" width="13.2" height="1.9" fill="#6a6a92" opacity="0.55"/><rect x="247.9" y="735.9" width="15.9" height="1.9" fill="#6a6a92" opacity="0.55"/><rect x="247.0" y="738.9" width="18.6" height="1.9" fill="#6a6a92" opacity="0.55"/><rect x="246.1" y="741.9" width="21.3" height="1.9" fill="#6a6a92" opacity="0.55"/><rect x="245.2" y="744.9" width="24.0" height="1.9" fill="#6a6a92" opacity="0.55"/><rect x="244.4" y="747.9" width="26.7" height="1.9" fill="#6a6a92" opacity="0.55"/><rect x="282.1" y="727.0" width="7.9" height="1.9" fill="#6a6a92" opacity="0.55"/><rect x="281.2" y="729.9" width="10.6" height="1.9" fill="#6a6a92" opacity="0.55"/><rect x="280.3" y="732.9" width="13.2" height="1.9" fill="#6a6a92" opacity="0.55"/><rect x="279.4" y="735.9" width="15.9" height="1.9" fill="#6a6a92" opacity="0.55"/><rect x="278.5" y="738.9" width="18.6" height="1.9" fill="#6a6a92" opacity="0.55"/><rect x="277.6" y="741.9" width="21.3" height="1.9" fill="#6a6a92" opacity="0.55"/><rect x="276.7" y="744.9" width="24.0" height="1.9" fill="#6a6a92" opacity="0.55"/><rect x="275.8" y="747.9" width="26.7" height="1.9" fill="#6a6a92" opacity="0.55"/><rect x="313.5" y="727.0" width="7.9" height="1.9" fill="#6a6a92" opacity="0.55"/><rect x="312.6" y="729.9" width="10.6" height="1.9" fill="#6a6a92" opacity="0.55"/><rect x="311.7" y="732.9" width="13.2" height="1.9" fill="#6a6a92" opacity="0.55"/><rect x="310.8" y="735.9" width="15.9" height="1.9" fill="#6a6a92" opacity="0.55"/><rect x="309.9" y="738.9" width="18.6" height="1.9" fill="#6a6a92" opacity="0.55"/><rect x="309.0" y="741.9" width="21.3" height="1.9" fill="#6a6a92" opacity="0.55"/><rect x="308.1" y="744.9" width="24.0" height="1.9" fill="#6a6a92" opacity="0.55"/><rect x="307.2" y="747.9" width="26.7" height="1.9" fill="#6a6a92" opacity="0.55"/><rect x="344.9" y="727.0" width="7.9" height="1.9" fill="#6a6a92" opacity="0.55"/><rect x="344.0" y="729.9" width="10.6" height="1.9" fill="#6a6a92" opacity="0.55"/><rect x="343.1" y="732.9" width="13.2" height="1.9" fill="#6a6a92" opacity="0.55"/><rect x="342.2" y="735.9" width="15.9" height="1.9" fill="#6a6a92" opacity="0.55"/><rect x="341.3" y="738.9" width="18.6" height="1.9" fill="#6a6a92" opacity="0.55"/><rect x="340.4" y="741.9" width="21.3" height="1.9" fill="#6a6a92" opacity="0.55"/><rect x="339.5" y="744.9" width="24.0" height="1.9" fill="#6a6a92" opacity="0.55"/><rect x="338.6" y="747.9" width="26.7" height="1.9" fill="#6a6a92" opacity="0.55"/><path d="M371.0 749.6 L382.0 737.0 L393.0 725.1 L394.6 730.7 L383.6 741.7 L374.2 751.2Z" fill="#2a2a55" opacity="0.35"/><path d="M80.7 770.0 L79.0 773.3 L78.6 777.4 L74.5 779.5 L70.2 781.3 L65.6 779.8 L61.1 779.4 L57.7 776.8 L54.6 773.9 L55.9 770.0 L55.8 766.5 L57.6 763.2 L61.8 761.7 L65.4 759.4 L70.1 758.9 L74.2 760.9 L78.2 762.9 L80.4 766.3Z" fill="#2a2a55" opacity="0.95"/><path d="M111.4 770.0 L111.1 773.5 L110.5 777.7 L105.5 778.9 L101.4 780.4 L97.1 779.5 L93.0 778.6 L89.8 776.3 L85.5 774.0 L85.2 770.0 L85.6 766.0 L87.9 762.3 L92.4 760.5 L96.6 758.4 L101.5 759.4 L105.6 760.9 L110.3 762.4 L112.7 766.0Z" fill="#2a2a55" opacity="0.95"/><path d="M145.2 770.0 L142.9 773.7 L141.4 777.3 L137.0 779.1 L133.1 781.8 L128.1 781.6 L124.3 778.8 L119.4 777.6 L119.1 773.4 L118.7 770.0 L117.5 766.2 L121.0 763.5 L123.9 760.7 L128.2 759.1 L132.6 760.7 L137.6 760.2 L140.1 763.5 L142.8 766.4Z" fill="#2a2a55" opacity="0.95"/><path d="M174.7 770.0 L175.1 773.9 L172.7 777.3 L168.3 778.8 L164.1 779.5 L159.8 780.0 L155.5 779.1 L152.9 776.2 L150.6 773.4 L148.0 770.0 L149.0 766.2 L150.7 762.4 L154.6 759.7 L159.5 758.5 L164.2 759.8 L168.1 761.5 L171.7 763.5 L174.3 766.4Z" fill="#2a2a55" opacity="0.95"/><path d="M206.7 770.0 L206.0 773.7 L203.2 776.7 L200.6 780.1 L195.6 780.0 L191.2 780.4 L186.2 780.1 L182.6 777.4 L181.6 773.5 L181.0 770.0 L180.1 766.1 L184.5 764.0 L187.4 761.6 L191.1 759.4 L195.7 759.4 L199.5 761.5 L202.5 763.9 L205.0 766.6Z" fill="#2a2a55" opacity="0.95"/><path d="M238.9 770.0 L237.2 773.6 L236.1 777.7 L231.9 779.9 L227.4 781.8 L222.8 779.4 L218.8 778.6 L215.9 776.1 L212.7 773.6 L212.2 770.0 L213.8 766.8 L214.6 763.1 L218.9 761.7 L222.7 760.0 L227.0 760.1 L231.9 760.1 L234.8 763.3 L236.6 766.6Z" fill="#2a2a55" opacity="0.95"/><path d="M268.1 770.0 L268.5 773.6 L266.7 777.1 L263.2 779.7 L258.8 781.6 L253.8 781.3 L250.1 778.7 L247.1 776.3 L243.1 773.9 L242.2 770.0 L243.9 766.4 L245.4 762.6 L249.6 760.6 L254.1 760.0 L258.4 760.3 L262.1 761.8 L266.8 762.9 L269.9 766.0Z" fill="#2a2a55" opacity="0.95"/><path d="M302.2 770.0 L300.0 773.6 L298.2 777.2 L295.0 780.2 L290.2 781.3 L285.4 780.8 L281.3 779.1 L277.6 776.9 L276.3 773.4 L275.5 770.0 L274.8 766.2 L276.4 762.3 L281.1 760.7 L285.5 759.7 L289.9 759.9 L294.3 760.9 L298.6 762.6 L300.0 766.4Z" fill="#2a2a55" opacity="0.95"/><path d="M333.8 770.0 L330.5 773.4 L328.8 776.6 L325.8 779.3 L321.4 780.3 L316.7 781.4 L312.0 780.0 L308.0 777.6 L306.4 773.8 L307.4 770.0 L306.5 766.3 L308.9 763.1 L312.6 760.8 L317.0 760.0 L321.6 759.0 L326.4 759.8 L328.3 763.8 L332.1 766.2Z" fill="#2a2a55" opacity="0.95"/><path d="M363.4 770.0 L363.0 773.7 L361.7 777.5 L357.9 780.3 L353.0 780.9 L348.5 779.8 L343.3 780.2 L341.2 776.4 L338.5 773.6 L336.3 770.0 L338.7 766.5 L341.0 763.5 L343.3 759.8 L348.0 758.4 L352.8 760.0 L357.0 761.0 L360.2 763.5 L361.9 766.7Z" fill="#2a2a55" opacity="0.95"/><path d="M368.7 759.0 L377.5 758.2 L387.4 764.0 L393.1 775.5 L392.5 782.1 L370.4 780.1Z" fill="#2a2a55" opacity="0.92"/><rect x="401.5" y="757.4" width="1.3" height="23.6" fill="#5a5a80" opacity="0.4"/><rect x="405.9" y="757.4" width="1.3" height="23.6" fill="#5a5a80" opacity="0.4"/><rect x="410.3" y="757.4" width="1.3" height="23.6" fill="#5a5a80" opacity="0.4"/><rect x="414.7" y="757.4" width="1.3" height="23.6" fill="#5a5a80" opacity="0.4"/><rect x="419.1" y="757.4" width="1.3" height="23.6" fill="#5a5a80" opacity="0.4"/><rect x="423.5" y="757.4" width="1.3" height="23.6" fill="#5a5a80" opacity="0.4"/><path d="M54.7 788.2 L59.0 786.2 L69.3 796.3 L80.4 808.4 L78.2 814.3 L70.2 808.5 L60.8 797.7 L55.5 792.3Z" fill="#2a2a55" opacity="0.92"/><path d="M85.9 786.5 L91.8 786.1 L100.1 797.3 L112.4 808.5 L111.0 813.5 L102.1 807.0 L92.7 797.7 L86.2 791.3Z" fill="#2a2a55" opacity="0.92"/><path d="M117.3 786.6 L122.4 787.5 L131.3 796.2 L144.0 810.2 L142.5 812.9 L133.4 808.6 L124.3 797.1 L117.7 791.1Z" fill="#2a2a55" opacity="0.92"/><path d="M149.1 787.8 L154.7 786.8 L163.5 796.8 L174.5 809.4 L173.6 812.8 L165.3 808.5 L156.4 796.1 L150.3 792.7Z" fill="#2a2a55" opacity="0.92"/><path d="M180.2 786.9 L185.0 785.8 L195.9 796.6 L206.7 808.6 L203.5 814.1 L197.1 808.7 L187.5 796.8 L181.4 791.2Z" fill="#2a2a55" opacity="0.92"/><path d="M212.4 787.2 L216.3 786.9 L226.1 796.7 L237.2 809.0 L235.6 813.6 L228.9 808.6 L219.3 797.4 L211.9 792.9Z" fill="#2a2a55" opacity="0.92"/><path d="M243.1 786.4 L250.0 789.5 L259.0 798.7 L269.3 813.0 L259.3 813.3 L243.8 813.4Z" fill="#2a2a55" opacity="0.95"/><path d="M276.4 787.4 L281.3 789.2 L289.8 798.1 L302.1 812.5 L289.8 814.3 L274.9 813.7Z" fill="#2a2a55" opacity="0.95"/><path d="M306.2 786.6 L313.0 789.8 L322.1 799.2 L333.2 811.5 L321.8 813.4 L306.3 812.1Z" fill="#2a2a55" opacity="0.95"/><path d="M338.4 788.2 L344.5 788.0 L353.0 798.0 L364.4 810.9 L352.7 812.9 L337.5 811.3Z" fill="#2a2a55" opacity="0.95"/><path d="M369.6 790.2 L379.0 791.2 L389.3 797.8 L394.3 806.0 L392.0 811.9 L370.6 812.7Z" fill="#2a2a55" opacity="0.92"/><rect x="401.5" y="788.9" width="1.3" height="23.6" fill="#5a5a80" opacity="0.4"/><rect x="405.9" y="788.9" width="1.3" height="23.6" fill="#5a5a80" opacity="0.4"/><rect x="410.3" y="788.9" width="1.3" height="23.6" fill="#5a5a80" opacity="0.4"/><rect x="414.7" y="788.9" width="1.3" height="23.6" fill="#5a5a80" opacity="0.4"/><rect x="419.1" y="788.9" width="1.3" height="23.6" fill="#5a5a80" opacity="0.4"/><rect x="423.5" y="788.9" width="1.3" height="23.6" fill="#5a5a80" opacity="0.4"/><path d="M458.0 801.4 L458.4 805.4 L454.5 808.0 L451.0 810.0 L447.3 812.8 L442.5 812.2 L438.9 809.8 L435.9 807.5 L432.9 805.0 L433.2 801.4 L431.5 797.5 L435.5 795.1 L438.6 792.7 L442.6 791.2 L447.2 790.9 L451.4 792.3 L455.3 794.4 L457.8 797.7Z" fill="#2a2a55" opacity="0.95"/><path d="M55.6 817.1 L66.4 818.6 L71.4 826.4 L80.9 840.4 L77.6 843.6 L67.7 843.7 L57.7 832.1Z" fill="#2a2a55" opacity="0.95"/><path d="M86.8 817.9 L96.8 819.1 L103.1 826.3 L110.7 839.5 L109.0 845.9 L99.2 844.1 L87.1 830.6Z" fill="#2a2a55" opacity="0.95"/><path d="M118.6 819.0 L128.2 817.6 L136.5 827.0 L143.2 838.4 L141.1 845.8 L129.7 844.0 L119.9 830.9Z" fill="#2a2a55" opacity="0.95"/><path d="M150.7 819.1 L160.4 818.7 L166.0 825.5 L174.4 838.7 L172.2 845.8 L161.3 844.7 L152.1 830.3Z" fill="#2a2a55" opacity="0.95"/><path d="M182.5 817.8 L190.2 817.3 L197.0 826.6 L205.7 840.0 L205.3 843.7 L193.2 843.6 L181.6 830.7Z" fill="#2a2a55" opacity="0.95"/><path d="M212.3 818.6 L221.9 817.1 L228.9 826.4 L237.6 838.5 L236.4 844.1 L225.3 844.2 L213.0 831.9Z" fill="#2a2a55" opacity="0.95"/><path d="M245.0 818.8 L267.5 819.7 L267.2 833.3 L264.9 845.4 L248.4 844.7 L243.8 832.3Z" fill="#2a2a55" opacity="0.95"/><path d="M275.6 818.0 L282.2 821.5 L290.5 831.0 L301.2 842.4 L291.4 844.4 L275.7 844.1Z" fill="#2a2a55" opacity="0.95"/><path d="M305.6 818.8 L313.8 820.2 L322.4 830.6 L332.5 843.2 L322.5 845.6 L305.8 842.9Z" fill="#2a2a55" opacity="0.95"/><path d="M338.7 818.9 L343.8 821.3 L354.7 829.8 L365.3 844.1 L354.4 844.3 L336.8 844.3Z" fill="#2a2a55" opacity="0.95"/><path d="M370.2 819.8 L378.8 822.1 L387.5 828.8 L393.2 837.2 L390.2 844.7 L368.9 845.2Z" fill="#2a2a55" opacity="0.92"/><rect x="401.5" y="820.3" width="1.3" height="23.6" fill="#5a5a80" opacity="0.4"/><rect x="405.9" y="820.3" width="1.3" height="23.6" fill="#5a5a80" opacity="0.4"/><rect x="410.3" y="820.3" width="1.3" height="23.6" fill="#5a5a80" opacity="0.4"/><rect x="414.7" y="820.3" width="1.3" height="23.6" fill="#5a5a80" opacity="0.4"/><rect x="419.1" y="820.3" width="1.3" height="23.6" fill="#5a5a80" opacity="0.4"/><rect x="423.5" y="820.3" width="1.3" height="23.6" fill="#5a5a80" opacity="0.4"/><path d="M430.9 819.1 L456.7 818.5 L454.5 831.9 L446.9 844.5 L439.4 844.5 L433.0 830.3Z" fill="#2a2a55" opacity="0.95"/><path d="M463.2 845.6 L469.4 834.5 L476.0 823.9 L486.7 817.6 L490.6 822.5 L485.3 832.8 L476.1 839.5 L468.0 844.7Z" fill="#2a2a55" opacity="0.92"/><path d="M56.0 849.6 L64.4 848.8 L73.7 858.8 L80.9 871.6 L77.7 876.8 L68.3 874.6 L56.6 863.9Z" fill="#2a2a55" opacity="0.95"/><path d="M86.8 850.2 L95.8 850.0 L103.3 858.0 L111.4 871.5 L110.8 876.3 L99.6 875.1 L88.9 862.1Z" fill="#2a2a55" opacity="0.95"/><path d="M118.7 849.7 L127.8 848.4 L134.5 858.4 L142.4 871.2 L141.6 877.4 L131.4 875.9 L119.3 861.6Z" fill="#2a2a55" opacity="0.95"/><path d="M150.2 850.2 L160.5 848.8 L165.9 859.2 L175.2 870.6 L173.6 875.4 L162.1 875.7 L151.3 861.9Z" fill="#2a2a55" opacity="0.95"/><path d="M180.6 849.8 L191.9 848.6 L196.9 857.0 L206.7 870.3 L204.3 877.5 L193.7 874.7 L182.9 861.5Z" fill="#2a2a55" opacity="0.95"/><path d="M212.4 850.0 L221.5 848.4 L229.6 857.6 L238.6 869.6 L236.6 876.0 L225.6 875.2 L214.3 862.3Z" fill="#2a2a55" opacity="0.95"/><path d="M244.6 850.0 L268.1 850.4 L266.6 865.7 L263.1 875.5 L248.6 876.1 L244.6 862.2Z" fill="#2a2a55" opacity="0.95"/><path d="M274.0 849.0 L281.0 851.0 L291.0 860.6 L301.9 874.9 L291.3 876.8 L275.2 875.1Z" fill="#2a2a55" opacity="0.95"/><path d="M306.1 849.1 L313.6 851.7 L321.3 862.2 L332.9 875.0 L322.1 875.3 L307.8 874.5Z" fill="#2a2a55" opacity="0.95"/><path d="M337.7 851.4 L343.3 851.7 L353.7 860.5 L365.2 874.5 L352.5 876.2 L336.8 875.8Z" fill="#2a2a55" opacity="0.95"/><path d="M370.6 853.0 L377.5 853.9 L387.7 859.5 L392.4 868.4 L390.3 876.3 L368.1 877.4Z" fill="#2a2a55" opacity="0.92"/><rect x="401.5" y="851.7" width="1.3" height="23.6" fill="#5a5a80" opacity="0.4"/><rect x="405.9" y="851.7" width="1.3" height="23.6" fill="#5a5a80" opacity="0.4"/><rect x="410.3" y="851.7" width="1.3" height="23.6" fill="#5a5a80" opacity="0.4"/><rect x="414.7" y="851.7" width="1.3" height="23.6" fill="#5a5a80" opacity="0.4"/><rect x="419.1" y="851.7" width="1.3" height="23.6" fill="#5a5a80" opacity="0.4"/><rect x="423.5" y="851.7" width="1.3" height="23.6" fill="#5a5a80" opacity="0.4"/><path d="M430.5 852.0 L456.7 849.1 L454.9 864.4 L448.7 876.0 L440.5 874.9 L434.3 862.8Z" fill="#2a2a55" opacity="0.95"/><path d="M464.3 874.7 L467.4 866.3 L477.4 856.3 L487.8 849.7 L489.2 854.8 L484.4 863.1 L475.8 872.1 L466.3 876.8Z" fill="#2a2a55" opacity="0.92"/><path d="M495.3 875.7 L501.7 867.0 L510.2 858.0 L519.1 849.9 L520.1 852.8 L514.2 861.4 L505.7 869.0 L497.5 876.3Z" fill="#2a2a55" opacity="0.9"/></g><path d="M54.0 436.4 L81.4 409.0" stroke="#3c3c70" stroke-width="1.1"/><path d="M54.0 467.9 L81.4 440.4" stroke="#3c3c70" stroke-width="1.1"/><path d="M85.4 467.9 L112.9 440.4" stroke="#3c3c70" stroke-width="1.1"/><text x="99.1" y="742.7" font-size="16.3" fill="#c4c4c8" text-anchor="middle" font-family="Liberation Sans">&gt;P</text><text x="162.0" y="742.7" font-size="16.3" fill="#c4c4c8" text-anchor="middle" font-family="Liberation Sans">&gt;P</text><text x="193.4" y="742.7" font-size="16.3" fill="#c4c4c8" text-anchor="middle" font-family="Liberation Sans">&gt;P</text><path d="M52.0 407.0 H83.4" stroke="#999" stroke-width="1" opacity="0.6"/><path d="M52.0 438.4 H114.9" stroke="#999" stroke-width="1" opacity="0.6"/><path d="M52.0 469.9 H146.3" stroke="#999" stroke-width="1" opacity="0.6"/><path d="M52.0 501.3 H177.7" stroke="#999" stroke-width="1" opacity="0.6"/><path d="M52.0 532.7 H209.2" stroke="#999" stroke-width="1" opacity="0.6"/><path d="M52.0 564.1 H240.6" stroke="#999" stroke-width="1" opacity="0.6"/><path d="M52.0 595.6 H272.0" stroke="#999" stroke-width="1" opacity="0.6"/><path d="M52.0 627.0 H303.4" stroke="#999" stroke-width="1" opacity="0.6"/><path d="M52.0 658.4 H334.9" stroke="#999" stroke-width="1" opacity="0.6"/><path d="M52.0 689.9 H366.3" stroke="#999" stroke-width="1" opacity="0.6"/><path d="M52.0 721.3 H397.7" stroke="#999" stroke-width="1" opacity="0.6"/><path d="M52.0 752.7 H429.2" stroke="#999" stroke-width="1" opacity="0.6"/><path d="M52.0 784.2 H460.6" stroke="#999" stroke-width="1" opacity="0.6"/><path d="M52.0 815.6 H492.0" stroke="#999" stroke-width="1" opacity="0.6"/><path d="M52.0 847.0 H523.5" stroke="#999" stroke-width="1" opacity="0.6"/><path d="M52.0 407.0 V852" stroke="#999" stroke-width="1" opacity="0.6"/><path d="M83.4 407.0 V852" stroke="#999" stroke-width="1" opacity="0.6"/><path d="M114.9 438.4 V852" stroke="#999" stroke-width="1" opacity="0.6"/><path d="M146.3 469.9 V852" stroke="#999" stroke-width="1" opacity="0.6"/><path d="M177.7 501.3 V852" stroke="#999" stroke-width="1" opacity="0.6"/><path d="M209.2 532.7 V852" stroke="#999" stroke-width="1" opacity="0.6"/><path d="M240.6 564.1 V852" stroke="#999" stroke-width="1" opacity="0.6"/><path d="M272.0 595.6 V852" stroke="#999" stroke-width="1" opacity="0.6"/><path d="M303.4 627.0 V852" stroke="#999" stroke-width="1" opacity="0.6"/><path d="M334.9 658.4 V852" stroke="#999" stroke-width="1" opacity="0.6"/><path d="M366.3 689.9 V852" stroke="#999" stroke-width="1" opacity="0.6"/><path d="M397.7 721.3 V852" stroke="#999" stroke-width="1" opacity="0.6"/><path d="M429.2 752.7 V852" stroke="#999" stroke-width="1" opacity="0.6"/><path d="M460.6 784.2 V852" stroke="#999" stroke-width="1" opacity="0.6"/><path d="M492.0 815.6 V852" stroke="#999" stroke-width="1" opacity="0.6"/><path d="M523.5 847.0 V852" stroke="#999" stroke-width="1" opacity="0.6"/><rect x="115.9" y="502.3" width="29.4" height="29.4" fill="none" stroke="#000" stroke-width="2.6"/></svg><div class="r" style="left:36px;top:370px;width:654px;height:482px;overflow:hidden"><div class="t" style="top:0.1px;height:33.0px;line-height:33.0px;font-size:16.5px;color:#111;left:28.0px;transform:scaleX(1.0);transform-origin:0 50%;">Perceived_Heat_Outdoor_BrightCounty_Weather</div>
<div class="t" style="top:31.5px;height:33.0px;line-height:33.0px;font-size:16.5px;color:#111;left:59.4px;transform:scaleX(1.0);transform-origin:0 50%;">Wind_Chill_BrightCounty_Weather</div>
<div class="t" style="top:62.9px;height:33.0px;line-height:33.0px;font-size:16.5px;color:#111;left:90.9px;transform:scaleX(1.0);transform-origin:0 50%;">Temperature_Outdoor_BrightCounty_Weather</div>
<div class="t" style="top:94.4px;height:33.0px;line-height:33.0px;font-size:16.5px;color:#111;left:122.3px;transform:scaleX(1.0);transform-origin:0 50%;">Perceived_Heat_Indoor_BrightCounty_Weather</div>
<div class="t" style="top:125.8px;height:33.0px;line-height:33.0px;font-size:16.5px;color:#111;left:153.7px;transform:scaleX(1.0);transform-origin:0 50%;">Temperature_Indoor_BrightCounty_Weather</div>
<div class="t" style="top:157.2px;height:33.0px;line-height:33.0px;font-size:16.5px;color:#111;left:185.2px;transform:scaleX(1.0);transform-origin:0 50%;">Dew_Point_Indoor_BrightCounty_Weather</div>
<div class="t" style="top:188.6px;height:33.0px;line-height:33.0px;font-size:16.5px;color:#111;left:216.6px;transform:scaleX(1.0);transform-origin:0 50%;">Dew_Point_Outdoor_BrightCounty_Weather</div>
<div class="t" style="top:220.1px;height:33.0px;line-height:33.0px;font-size:16.5px;color:#111;left:248.0px;transform:scaleX(1.0);transform-origin:0 50%;">Solar_Radiation_BrightCounty_Weather</div>
<div class="t" style="top:251.5px;height:33.0px;line-height:33.0px;font-size:16.5px;color:#111;left:279.4px;transform:scaleX(1.0);transform-origin:0 50%;">Peak_Solar_Radiation_Radiation_BrightCounty_Weather</div>
<div class="t" style="top:282.9px;height:33.0px;line-height:33.0px;font-size:16.5px;color:#111;left:310.9px;transform:scaleX(1.0);transform-origin:0 50%;">Evapotranspiration_BrightCounty_Weather</div>
<div class="t" style="top:314.4px;height:33.0px;line-height:33.0px;font-size:16.5px;color:#111;left:342.3px;transform:scaleX(1.0);transform-origin:0 50%;">Peak_Wind_Speed_BrightCounty_Weather</div>
<div class="t" style="top:345.8px;height:33.0px;line-height:33.0px;font-size:16.5px;color:#111;left:373.7px;transform:scaleX(1.0);transform-origin:0 50%;">Wind_Speed_BrightCounty_Weather</div>
<div class="t" style="top:377.2px;height:33.0px;line-height:33.0px;font-size:16.5px;color:#111;left:405.2px;transform:scaleX(1.0);transform-origin:0 50%;">Pressure_BrightCounty_Weather</div>
<div class="t" style="top:408.7px;height:33.0px;line-height:33.0px;font-size:16.5px;color:#111;left:436.6px;transform:scaleX(1.0);transform-origin:0 50%;">Air_Density_Indoor_BrightCounty_Weather</div>
<div class="t" style="top:440.1px;height:33.0px;line-height:33.0px;font-size:16.5px;color:#111;left:468.0px;transform:scaleX(1.0);transform-origin:0 50%;">Humidity_Outdoor_BrightCounty_Weather</div>
</div><div class="r" style="left:701px;top:183px;width:701px;height:683px;background:#fff;border-radius:26px;"></div>
<div class="t" style="top:180.0px;height:46px;line-height:46px;font-size:23px;color:#111;font-weight:bold;left:714.0px;transform:scaleX(1.02);transform-origin:0 50%;">Scatter Plot</div>
<div class="t" style="top:223.5px;height:33.0px;line-height:33.0px;font-size:16.5px;color:#111;left:715.0px;transform:scaleX(1.04);transform-origin:0 50%;">Color by: Focus</div>
<div class="r" style="left:714px;top:255px;width:686px;height:6px;background:#d6d6d6;border-radius:3px;"></div>
<svg class="r" style="left:701px;top:262px" width="701" height="604" viewBox="701 262 701 604"><path d="M777.0 265 V796" stroke="#dcdcdc" stroke-width="1.2"/><path d="M873.6 265 V796" stroke="#dcdcdc" stroke-width="1.2"/><path d="M970.3 265 V796" stroke="#dcdcdc" stroke-width="1.2"/><path d="M1067.0 265 V796" stroke="#dcdcdc" stroke-width="1.2"/><path d="M1163.6 265 V796" stroke="#dcdcdc" stroke-width="1.2"/><path d="M1260.2 265 V796" stroke="#dcdcdc" stroke-width="1.2"/><path d="M1356.9 265 V796" stroke="#dcdcdc" stroke-width="1.2"/><path d="M748 757.0 H1402" stroke="#dcdcdc" stroke-width="1.2"/><path d="M748 696.0 H1402" stroke="#dcdcdc" stroke-width="1.2"/><path d="M748 634.9 H1402" stroke="#dcdcdc" stroke-width="1.2"/><path d="M748 573.9 H1402" stroke="#dcdcdc" stroke-width="1.2"/><path d="M748 512.8 H1402" stroke="#dcdcdc" stroke-width="1.2"/><path d="M748 451.8 H1402" stroke="#dcdcdc" stroke-width="1.2"/><path d="M748 390.7 H1402" stroke="#dcdcdc" stroke-width="1.2"/><path d="M748 329.6 H1402" stroke="#dcdcdc" stroke-width="1.2"/><path d="M748 269 H1402" stroke="#dcdcdc" stroke-width="1.2"/><defs><filter id="bl1" x="-10%" y="-10%" width="120%" height="120%"><feGaussianBlur stdDeviation="2.2"/></filter><filter id="bl2" x="-10%" y="-10%" width="120%" height="120%"><feGaussianBlur stdDeviation="5"/></filter></defs><path d="M893.0 694.6 L902.6 690.2 L912.3 686.5 L922.0 683.3 L931.6 680.6 L941.3 678.0 L951.0 675.9 L960.6 674.2 L970.3 672.8 L980.0 668.4 L989.6 663.8 L999.3 659.1 L1009.0 654.2 L1018.6 649.1 L1028.3 643.8 L1038.0 638.3 L1047.6 632.7 L1057.3 626.9 L1067.0 620.9 L1076.6 614.7 L1086.3 608.3 L1095.9 601.7 L1105.6 595.0 L1115.3 588.0 L1124.9 580.9 L1134.6 573.6 L1144.3 566.2 L1153.9 558.5 L1163.6 550.7 L1173.3 542.6 L1182.9 534.4 L1192.6 526.0 L1202.3 517.4 L1211.9 501.1 L1221.6 484.9 L1231.3 469.1 L1240.9 453.6 L1250.6 438.6 L1260.2 424.0 L1269.9 410.8 L1279.6 400.6 L1279.6 396.3 L1269.9 399.0 L1260.2 398.5 L1250.6 398.7 L1240.9 398.3 L1231.3 397.3 L1221.6 395.8 L1211.9 395.6 L1202.3 395.2 L1192.6 402.3 L1182.9 409.4 L1173.3 416.5 L1163.6 423.7 L1153.9 433.4 L1144.3 444.6 L1134.6 455.7 L1124.9 466.8 L1115.3 479.3 L1105.6 491.6 L1095.9 503.8 L1086.3 515.6 L1076.6 527.3 L1067.0 538.8 L1057.3 548.0 L1047.6 556.5 L1038.0 565.1 L1028.3 573.6 L1018.6 582.2 L1009.0 590.7 L999.3 599.2 L989.6 607.7 L980.0 616.2 L970.3 624.7 L960.6 635.6 L951.0 645.9 L941.3 655.7 L931.6 664.9 L922.0 673.2 L912.3 680.8 L902.6 687.9 L893.0 693.9Z" fill="#2a2a55" opacity="0.38" filter="url(#bl2)"/><path d="M869.8 708.1 L879.4 705.0 L889.1 702.3 L898.8 699.3 L908.4 696.5 L918.1 694.2 L927.8 692.2 L937.4 688.7 L947.1 684.9 L956.8 681.0 L966.4 676.9 L976.1 672.6 L985.8 668.1 L995.4 663.5 L1005.1 658.6 L1014.8 653.6 L1024.4 648.4 L1034.1 643.0 L1043.8 637.4 L1053.4 631.7 L1063.1 625.7 L1072.7 619.6 L1082.4 613.3 L1092.1 606.8 L1101.7 600.1 L1111.4 593.3 L1121.1 586.2 L1130.7 576.2 L1140.4 564.3 L1150.1 552.3 L1159.7 540.4 L1169.4 528.4 L1179.1 516.4 L1179.1 513.0 L1169.4 516.2 L1159.7 519.2 L1150.1 521.7 L1140.4 524.0 L1130.7 526.2 L1121.1 530.3 L1111.4 537.4 L1101.7 544.5 L1092.1 551.7 L1082.4 558.8 L1072.7 565.9 L1063.1 573.0 L1053.4 580.2 L1043.8 587.3 L1034.1 594.4 L1024.4 601.5 L1014.8 608.6 L1005.1 615.9 L995.4 623.2 L985.8 630.5 L976.1 637.8 L966.4 644.9 L956.8 651.6 L947.1 658.3 L937.4 665.1 L927.8 671.8 L918.1 679.9 L908.4 687.5 L898.8 694.4 L889.1 700.0 L879.4 704.2 L869.8 707.9Z" fill="#2a2a55" opacity="0.9" filter="url(#bl1)"/><path d="M1069 604h0M989 629h0M1091 574h0M1014 644h0M1250 464h0M1040 588h0M1077 498h0M1099 583h0M1084 594h0M1169 429h0M1086 543h0M1040 433h0M1223 439h0M881 708h0M1099 590h0M984 660h0M1182 412h0M1319 402h0M935 689h0M1001 590h0M948 669h0M913 568h0M1252 379h0M1153 561h0M971 676h0M786 771h0M1008 623h0M1221 512h0M1056 622h0M1072 620h0M928 693h0M1143 416h0M1136 440h0M996 638h0M1125 493h0M1196 522h0M1032 644h0M970 671h0M1219 425h0M938 690h0M1110 545h0M1177 417h0M1054 568h0M978 605h0M1015 659h0M1177 416h0M1286 433h0M1073 550h0M1138 456h0M927 670h0M1044 619h0M1228 375h0M1105 571h0M993 616h0M904 702h0M888 702h0M929 656h0M792 771h0M1056 630h0M1252 450h0M1049 490h0M1265 413h0M949 677h0M1055 591h0M1048 563h0M904 576h0M1088 619h0M1228 489h0M985 628h0M918 692h0M1122 520h0M1287 345h0M1165 439h0M1095 530h0M1131 575h0M1159 547h0M1123 477h0M1210 393h0M1061 616h0M1065 557h0M1157 512h0M1087 568h0M1015 603h0M1187 477h0M940 678h0M975 647h0M939 688h0M1146 491h0M1083 608h0M1055 534h0M1038 544h0M1226 353h0M886 702h0M1246 426h0M981 662h0M1169 472h0M1021 577h0M888 712h0M947 688h0M1164 524h0M1182 382h0M961 637h0M1015 639h0M980 663h0M1023 566h0M1085 455h0M1056 581h0M1255 329h0M1114 595h0M1149 549h0M1157 461h0M1277 415h0M1292 427h0M1126 565h0M1134 507h0M964 655h0M1161 523h0M1167 519h0M1071 629h0M1248 487h0M977 677h0M1073 545h0M979 654h0M1179 451h0M1067 544h0M1137 555h0M1237 467h0M1039 560h0M1073 553h0M1035 610h0M993 635h0M1003 651h0M1198 365h0M971 662h0M805 772h0M1124 494h0M1092 580h0M1183 545h0M1048 397h0M1157 410h0M1263 417h0M1071 602h0M1144 431h0M1091 558h0M1169 526h0M922 676h0M1202 503h0M937 655h0M1130 466h0M986 651h0M1229 505h0M1248 381h0M941 684h0M1150 527h0M1107 604h0M1248 428h0M1127 584h0M1185 457h0M1091 550h0M1080 616h0M1035 622h0M1006 626h0M1108 604h0M999 624h0M1104 588h0M1243 407h0M973 608h0M1250 341h0M963 677h0M1240 466h0M955 678h0M1255 379h0M959 674h0M1010 652h0M1012 641h0M1235 460h0M1293 380h0M996 601h0M1158 471h0M1147 419h0M876 695h0M1258 370h0M933 646h0M920 690h0M1078 485h0M957 643h0M986 647h0M1178 500h0M844 737h0M1010 595h0M1107 551h0M1151 570h0M1135 526h0M1038 629h0M1182 460h0M906 573h0M1058 627h0M1090 573h0M1115 488h0M883 707h0M1083 505h0M1214 472h0M1060 535h0M1132 444h0M1271 391h0M1157 564h0M906 665h0M1021 609h0M1039 586h0M919 677h0M1036 639h0M1233 350h0M1029 645h0M1085 532h0M1070 597h0M1053 521h0M1230 462h0M1052 592h0M919 670h0M1205 499h0M914 466h0M1113 451h0M1083 568h0M1174 525h0M989 661h0M1135 523h0M1066 612h0M1171 506h0M997 629h0M1046 589h0M1082 621h0M1194 494h0M920 684h0M1062 564h0M1178 434h0M1041 550h0M1211 483h0M963 621h0M1065 585h0M1142 485h0M1131 430h0M932 674h0M984 642h0M1182 487h0M872 717h0M1227 434h0M1292 356h0M1027 632h0M1028 642h0M1019 596h0M1102 583h0M902 560h0M997 599h0M1179 414h0M1153 502h0M1200 363h0M1210 482h0M1072 609h0M991 623h0M911 689h0M1134 534h0M1052 588h0M1047 580h0M1106 588h0M902 705h0M1000 652h0M1109 551h0M1096 586h0M1078 598h0M999 656h0M1083 587h0M1148 416h0M1031 566h0M1171 524h0M1068 594h0M1127 540h0M1036 560h0M1243 432h0M1115 584h0M940 680h0M1120 462h0M1151 532h0M1058 620h0M1094 607h0M1243 417h0M1241 399h0M1178 589h0M1069 624h0M1011 649h0M1075 597h0M1009 488h0M1126 481h0M1061 597h0M1172 585h0M974 653h0M1021 615h0M1137 565h0M1133 505h0M1157 492h0M966 672h0M1138 513h0M1099 635h0M1207 491h0M920 682h0M1068 587h0M1192 481h0M1258 365h0M1238 378h0M1064 622h0M912 568h0M1053 634h0M1274 351h0M931 677h0M1021 660h0M1119 565h0M1237 418h0M1365 313h0M1120 482h0M1140 455h0M1126 467h0M1222 381h0M1111 634h0M1013 603h0M850 764h0M1025 642h0M1134 562h0M1009 582h0M938 670h0M1055 597h0M1034 638h0M1184 531h0M1096 493h0M968 657h0M1244 473h0M1020 593h0M1032 598h0M1108 592h0M990 636h0M1282 322h0M989 654h0M960 634h0M1177 520h0M1348 341h0M1224 461h0M1096 568h0M1195 497h0M1244 395h0M982 656h0M1112 588h0M1169 563h0M943 674h0M1026 604h0M1068 539h0M1003 617h0" stroke="#2a2a55" stroke-width="3.4" stroke-linecap="round" stroke-opacity="0.22" fill="none"/><path d="M1139 571h0M977 605h0M1172 489h0M1053 608h0M981 665h0M974 672h0M905 686h0M913 567h0M1115 533h0M1024 649h0M1113 590h0M1236 369h0M1161 455h0M963 633h0M1080 508h0M1076 548h0M1141 531h0M1225 392h0M1126 538h0M797 764h0M1093 475h0M906 453h0M1205 466h0M1097 559h0M966 661h0M972 671h0M1141 471h0M1007 639h0M1209 496h0M1186 404h0M1321 385h0M1373 292h0M1020 593h0M1165 502h0M1239 449h0M1004 628h0M1095 577h0M1275 338h0M878 710h0M977 662h0M920 655h0M916 691h0M1214 394h0M1123 549h0M1029 602h0M1077 563h0M775 552h0M1277 336h0M1075 513h0M1214 468h0M1087 450h0M1090 598h0M1033 606h0M1024 586h0M1117 555h0M1147 538h0M1110 580h0M1177 390h0M1121 576h0M1099 550h0M858 727h0M1154 418h0M1162 403h0M1074 624h0M1045 628h0M1032 618h0M953 640h0M1013 636h0M1154 519h0M911 421h0M1248 334h0M934 664h0M1086 615h0M1048 551h0M1027 640h0M1213 490h0M777 610h0M1140 419h0M983 664h0M1005 635h0M1074 564h0M898 683h0M1147 498h0M1108 478h0M1150 509h0M1198 493h0M1298 319h0M1070 628h0M1011 578h0M915 680h0M979 600h0M919 695h0M1061 594h0M1144 534h0M1138 486h0M1115 583h0M1064 560h0M1184 430h0M1160 562h0M925 682h0M1025 562h0M1328 370h0M1193 532h0M981 655h0M1137 564h0M1150 528h0M1034 591h0M1143 455h0M899 683h0M1158 396h0M978 662h0M1058 603h0M1353 288h0M1255 425h0M1212 451h0M1210 445h0M1025 631h0M1152 454h0M1100 608h0M1044 641h0M1083 609h0M1180 481h0M883 697h0M1047 618h0M1278 344h0M910 701h0M1117 545h0M1096 584h0M1238 434h0M948 662h0M1090 595h0M1201 456h0M1192 510h0M1249 367h0M1021 610h0M1079 541h0M1023 574h0M1108 500h0M1191 471h0M1228 507h0M1146 560h0M1165 498h0M972 657h0M778 662h0M1233 412h0M1059 531h0M1054 616h0M1093 601h0M1150 437h0M1014 640h0M1030 606h0M1104 525h0M1130 461h0M1059 552h0M1161 433h0M1107 566h0M1109 577h0M1048 627h0M1270 369h0M928 670h0M1097 505h0M1032 629h0M1110 635h0M1247 377h0M1112 533h0M1095 610h0M1049 508h0M1204 424h0M1080 564h0M940 678h0M1173 391h0M1035 648h0M913 681h0M1257 377h0M1173 542h0M1119 592h0M976 658h0M1025 562h0M998 658h0M1216 475h0M1162 494h0M1216 415h0M981 589h0M1002 593h0M1120 556h0M1067 591h0M975 667h0M1217 426h0M827 745h0M1043 489h0M1115 560h0M1035 609h0M1064 598h0M1183 527h0M1076 579h0M859 724h0M1219 486h0M1175 537h0M1076 612h0M1147 498h0M1286 459h0M1079 599h0M897 705h0M962 641h0M1173 585h0M1254 449h0M1101 579h0M1264 328h0M1276 468h0M1004 638h0M1044 630h0M1252 430h0M1150 483h0M927 689h0M1199 518h0M1150 519h0M1173 500h0M1144 462h0M1078 580h0M1011 595h0M1026 597h0M956 673h0M1131 550h0M995 636h0M1028 644h0M830 745h0M1119 488h0M1202 442h0M1094 579h0M1008 574h0M1033 601h0M1209 499h0M1096 553h0M1121 556h0M1209 471h0M1203 359h0M1047 594h0M999 642h0M1084 581h0M1183 516h0M1148 502h0M941 659h0M1252 408h0M1082 576h0M1057 366h0M1064 557h0M1237 394h0M1172 461h0M1056 550h0M1113 538h0M986 645h0M1169 475h0M1153 478h0M1097 559h0M1268 376h0M969 640h0M1116 511h0M1011 615h0M1018 599h0M1207 415h0M1030 603h0M1096 548h0M948 671h0M1037 583h0M1189 485h0M936 687h0M1183 469h0M1155 478h0M1169 533h0M987 620h0M1279 331h0M1041 601h0M1060 601h0M1113 635h0M1280 420h0M1183 511h0M1146 523h0M1189 471h0M1092 598h0M1271 336h0M1122 517h0M972 636h0M1076 612h0M1275 328h0M1130 510h0M1133 559h0M1127 430h0M948 682h0M1022 613h0M930 694h0M1269 394h0M964 634h0M945 682h0M1046 570h0M907 605h0M1087 595h0M1154 515h0M1106 517h0M1202 434h0M1128 494h0M1010 570h0M1070 605h0M1098 582h0M1111 533h0M1048 527h0M1292 361h0M1199 494h0M802 760h0M1062 527h0M1125 460h0M847 733h0M1083 576h0M1101 576h0M1062 617h0M1276 423h0M1112 541h0M1189 480h0M1105 584h0M1091 553h0M1188 427h0M975 641h0M1089 515h0M1034 593h0M1152 555h0M896 717h0M952 628h0M1108 526h0M1256 356h0M1131 510h0M1071 554h0M1125 580h0M1059 539h0M1077 567h0M1034 599h0M1165 485h0M888 687h0M1286 428h0M1051 591h0M1223 484h0M965 630h0M1190 468h0M1194 488h0M977 615h0M1040 643h0M1264 406h0M1037 432h0M776 583h0M1126 438h0M1212 463h0M1045 602h0M1103 537h0M1005 612h0M1026 612h0M776 654h0" stroke="#2a2a55" stroke-width="3.4" stroke-linecap="round" stroke-opacity="0.22" fill="none"/><path d="M1037 608h0M977 676h0M1154 506h0M1016 651h0M1114 548h0M1192 453h0M1067 585h0M1180 589h0M993 632h0M1180 427h0M906 694h0M1228 378h0M1188 523h0M1061 559h0M1102 516h0M1094 584h0M953 647h0M1211 352h0M1066 600h0M1182 509h0M1024 651h0M1084 570h0M1118 633h0M1053 592h0M1020 644h0M1075 602h0M968 671h0M897 703h0M1219 499h0M1183 511h0M1202 414h0M1180 547h0M1031 611h0M1158 537h0M1089 540h0M1043 578h0M1113 599h0M1074 538h0M1201 521h0M1096 579h0M1297 365h0M972 627h0M947 691h0M1106 605h0M1187 490h0M882 710h0M1104 533h0M978 610h0M951 648h0M1093 510h0M1195 455h0M1110 635h0M1196 486h0M1233 475h0M901 675h0M1069 608h0M816 752h0M837 740h0M1135 492h0M1049 616h0M1263 441h0M1091 534h0M1180 536h0M1064 565h0M1171 498h0M1187 452h0M882 703h0M1047 612h0M1199 449h0M1187 504h0M1261 422h0M1157 522h0M992 673h0M1087 587h0M1261 436h0M1239 378h0M1123 473h0M1053 567h0M1200 386h0M1117 554h0M1085 614h0M1099 611h0M1247 360h0M1088 521h0M1222 416h0M1094 568h0M1250 437h0M1111 525h0M1111 580h0M1047 521h0M949 668h0M1092 586h0M1011 628h0M1040 597h0M1069 531h0M1061 529h0M1005 613h0M1297 329h0M980 657h0M1109 528h0M993 613h0M987 658h0M1163 452h0M984 668h0M1143 489h0M995 614h0M1366 298h0M1182 485h0M974 664h0M1019 605h0M1139 536h0M1162 444h0M1193 533h0M1091 552h0M929 677h0M996 578h0M1252 372h0M993 614h0M1091 569h0M1104 562h0M1083 596h0M916 673h0M1371 296h0M1140 499h0M957 613h0M1260 401h0M1007 593h0M1033 640h0M1157 556h0M1111 527h0M1196 495h0M1079 526h0M995 634h0M777 673h0M966 614h0M1225 481h0M778 613h0M1102 553h0M1061 555h0M1045 609h0M1211 487h0M1006 660h0M976 628h0M1136 522h0M1210 492h0M1125 527h0M967 648h0M1098 500h0M1012 613h0M1024 643h0M1016 633h0M1122 473h0M993 610h0M1037 649h0M1150 508h0M1278 367h0M1006 653h0M1125 540h0M1105 593h0M973 652h0M1221 363h0M1060 616h0M1162 433h0M1370 302h0M995 647h0M1040 579h0M1036 434h0M964 664h0M1015 642h0M1237 468h0M1138 542h0M1177 499h0M1147 554h0M1198 471h0M1026 562h0M1199 438h0M978 647h0M1058 582h0M900 701h0M1238 448h0M1187 473h0M1280 335h0M777 544h0M945 679h0M1072 580h0M1030 593h0M1017 594h0M1024 610h0M1070 608h0M1101 588h0M1037 601h0M1220 406h0M1295 344h0M1080 544h0M1164 522h0M1132 550h0M1040 540h0M1082 551h0M1288 377h0M1054 620h0M1243 408h0M1244 413h0M1122 448h0M1159 542h0M1004 631h0M917 567h0M1252 347h0M1093 596h0M1122 467h0M1181 399h0M1070 602h0M1089 565h0M1171 500h0M1060 622h0M1245 393h0M1252 422h0M1008 638h0M1160 412h0M1032 566h0M1048 622h0M1348 330h0M1038 647h0M875 712h0M1324 381h0M917 455h0M1202 450h0M1180 511h0M1235 466h0M1186 436h0M1260 380h0M1142 500h0M1009 580h0M1078 562h0M1052 565h0M974 676h0M952 685h0M910 603h0M1049 632h0M1125 555h0M1206 439h0M1030 582h0M1200 384h0M1237 409h0M1003 653h0M987 585h0M988 582h0M1031 541h0M1255 437h0M1242 428h0M1025 616h0M1052 571h0M1119 543h0M1115 537h0M1020 566h0M1163 400h0M1169 494h0M1087 527h0M1057 640h0M884 705h0M1245 424h0M1000 639h0M1052 606h0M1250 340h0M1119 590h0M1003 651h0M1012 562h0M1195 454h0M1036 587h0M1008 651h0M1030 624h0M1057 607h0M1059 595h0M1110 436h0M1089 564h0M1026 618h0M1232 442h0M1248 395h0M1188 436h0M1078 536h0M1193 472h0M1295 354h0M1216 436h0M1055 633h0M776 556h0M1077 608h0M1116 503h0M1139 539h0M1245 463h0M990 656h0M1066 617h0M805 773h0M778 375h0M1174 425h0M1057 587h0M1190 388h0M903 689h0M991 643h0M1059 558h0M1193 471h0M1349 335h0M1030 597h0M775 713h0M976 652h0M1077 463h0M1141 457h0M906 691h0M1022 587h0M1154 504h0M1051 563h0M1128 524h0M1052 609h0M1186 493h0M1143 535h0M1358 309h0M1257 406h0M1167 492h0M1088 578h0M1022 582h0M1021 588h0M841 736h0M1131 560h0M1146 539h0M1250 454h0M1076 563h0M1081 597h0M1086 598h0M1202 432h0M1097 534h0M1099 588h0M1065 579h0M1035 649h0M1023 633h0M853 730h0M1213 502h0M1248 430h0M1114 541h0M925 672h0M1252 456h0M951 637h0M998 641h0M1247 402h0M1038 592h0M1005 662h0M1101 550h0M1032 624h0M1065 533h0M1189 496h0M1018 622h0M1058 614h0M778 686h0M1188 501h0M1024 469h0M941 692h0M1120 546h0" stroke="#2a2a55" stroke-width="3.4" stroke-linecap="round" stroke-opacity="0.22" fill="none"/><path d="M879 714h0M1153 488h0M929 670h0M1061 557h0M982 639h0M1211 397h0M1021 574h0M849 762h0M1043 615h0M1098 566h0M1168 517h0M909 595h0M1131 489h0M1123 535h0M1082 540h0M1077 560h0M1227 388h0M1252 430h0M1181 515h0M1019 627h0M1007 622h0M1034 633h0M1050 426h0M1090 603h0M1048 559h0M784 772h0M1258 363h0M1263 479h0M1222 451h0M1170 397h0M1050 579h0M1034 567h0M1168 528h0M1353 318h0M1100 528h0M1066 563h0M1081 522h0M1141 454h0M974 665h0M1093 500h0M1239 472h0M1013 639h0M1143 545h0M1014 599h0M1370 305h0M1132 507h0M1172 543h0M1259 345h0M983 485h0M996 646h0M859 724h0M1222 487h0M827 745h0M1105 591h0M1139 497h0M994 663h0M996 596h0M1023 596h0M1059 597h0M898 695h0M844 735h0M1217 509h0M1018 613h0M960 648h0M1003 656h0M1019 624h0M1059 585h0M1171 515h0M963 650h0M1125 504h0M1187 483h0M1052 566h0M1050 630h0M1065 610h0M1153 491h0M1181 492h0M1129 548h0M1060 528h0M950 658h0M1025 553h0M1050 561h0M1125 535h0M1234 463h0M963 667h0M1028 634h0M1040 634h0M1096 524h0M993 634h0M1039 585h0M1261 356h0M983 627h0M1034 642h0M1135 519h0M1029 628h0M1211 506h0M1054 553h0M1142 484h0M1120 538h0M778 556h0M1045 542h0M1146 463h0M1046 628h0M1017 575h0M1111 632h0M1185 450h0M1066 575h0M1076 605h0M1039 621h0M1016 621h0M1212 518h0M1028 614h0M843 738h0M1136 578h0M1043 444h0M1043 563h0M1017 618h0M981 668h0M1061 620h0M913 677h0M815 755h0M1124 583h0M1006 635h0M918 685h0M1056 610h0M1196 516h0M1170 487h0M1273 428h0M1011 635h0M1024 622h0M1077 507h0M1070 615h0M1275 413h0M1298 359h0M1069 548h0M1120 584h0M1223 387h0M1101 565h0M858 728h0M963 661h0M1055 627h0M1202 523h0M1159 469h0M1160 537h0M1021 607h0M962 676h0M1065 604h0M1140 556h0M1091 570h0M1001 641h0M1221 467h0M1011 603h0M948 690h0M1098 533h0M989 592h0M1056 634h0M1257 419h0M1028 618h0M1007 630h0M1095 564h0M1162 489h0M908 692h0M1219 459h0M1017 588h0M1135 512h0M1207 465h0M1130 541h0M993 593h0M797 772h0M1165 512h0M1184 501h0M1141 565h0M906 700h0M1102 556h0M1166 529h0M1213 429h0M1024 563h0M1131 449h0M1103 491h0M1213 486h0M1109 582h0M1041 613h0M959 681h0M1108 569h0M1268 329h0M1253 453h0M1051 615h0M954 681h0M1246 426h0M1215 464h0M1053 620h0M1019 644h0M1063 553h0M1003 569h0M1238 470h0M1021 587h0M1201 423h0M1042 562h0M885 704h0M1148 484h0M931 669h0M1163 399h0M1110 546h0M1093 529h0M929 697h0M801 761h0M929 673h0M1239 393h0M1047 404h0M976 643h0M991 638h0M1195 430h0M983 664h0M820 749h0M1047 614h0M1056 599h0M984 628h0M1165 463h0M1121 560h0M1222 393h0M1103 596h0M899 699h0M927 665h0M1037 600h0M1076 609h0M1226 382h0M1221 387h0M923 691h0M1054 639h0M1096 602h0M935 674h0M1248 419h0M1043 525h0M1045 541h0M1098 532h0M1154 451h0M1200 485h0M1133 557h0M1164 545h0M1372 294h0M992 654h0M1148 553h0M1061 607h0M1094 580h0M1363 314h0M1007 601h0M1014 603h0M1278 346h0M1241 364h0M985 623h0M1024 638h0M880 704h0M1263 401h0M987 635h0M777 558h0M1194 432h0M1034 624h0M777 649h0M1171 426h0M874 713h0M1054 551h0M1014 571h0M1013 634h0M1219 409h0M979 626h0M1283 444h0M1077 524h0M1193 395h0M1258 367h0M1186 520h0M1248 455h0M1227 394h0M1086 454h0M895 702h0M1016 555h0M884 694h0M1042 645h0M1047 535h0M1110 611h0M1005 642h0M919 694h0M917 560h0M1334 366h0M1207 399h0M808 758h0M931 667h0M1065 588h0M1097 548h0M777 393h0M1073 518h0M992 604h0M1192 484h0M1259 405h0M1123 452h0M1098 530h0M1057 592h0M1001 598h0M956 672h0M1239 473h0M1092 537h0M1264 345h0M1141 424h0M1207 465h0M1214 474h0M1292 350h0M1103 597h0M1089 557h0M989 541h0M1015 610h0M969 670h0M1164 537h0M1204 360h0M1140 420h0M1234 383h0M1227 396h0M1134 577h0M1007 610h0M1168 397h0M1130 591h0M1053 609h0M1040 638h0M1222 453h0M1087 598h0M1099 512h0M1113 439h0M969 630h0M1265 333h0M1116 551h0M1119 586h0M1233 408h0M1187 405h0M1054 628h0M1238 422h0M961 647h0M1280 402h0M1116 505h0M1157 529h0M1145 463h0M1058 613h0M1027 625h0M1165 482h0M917 695h0M1024 645h0M1103 522h0M1036 608h0M1131 559h0M1152 408h0M1039 606h0M1154 461h0M894 707h0M918 677h0M1037 624h0M959 677h0M1136 479h0M1087 603h0" stroke="#2a2a55" stroke-width="3.4" stroke-linecap="round" stroke-opacity="0.22" fill="none"/><path d="M1113 420h0M1220 502h0M1131 557h0M1042 584h0M1192 475h0M1065 613h0M839 737h0M1256 436h0M1231 365h0M1315 392h0M1067 594h0M1161 535h0M1261 337h0M954 652h0M1191 536h0M1279 368h0M1072 616h0M968 669h0M1045 602h0M1190 371h0M950 637h0M1054 624h0M1074 562h0M966 642h0M1154 528h0M1121 571h0M1150 433h0M1184 526h0M988 668h0M1096 539h0M1250 477h0M1015 632h0M1030 531h0M1151 504h0M1121 516h0M1037 582h0M1160 543h0M1113 567h0M1117 573h0M1077 593h0M1263 378h0M1116 581h0M1210 512h0M1053 556h0M1068 551h0M986 617h0M1051 612h0M1040 594h0M1239 403h0M1002 648h0M1117 545h0M1096 565h0M1058 635h0M1095 569h0M981 632h0M1104 571h0M1214 364h0M1213 436h0M1166 530h0M1030 568h0M831 746h0M1043 574h0M1129 509h0M1236 469h0M1067 624h0M776 373h0M1165 543h0M1021 649h0M1168 529h0M1049 586h0M1020 644h0M1062 626h0M1135 537h0M1254 437h0M1104 546h0M1239 426h0M1104 556h0M1239 432h0M1037 594h0M1233 468h0M1016 584h0M1229 495h0M1247 421h0M1128 457h0M1163 511h0M914 659h0M1104 590h0M1237 459h0M1073 609h0M1056 615h0M1213 457h0M1021 590h0M1108 497h0M1175 549h0M1174 490h0M1190 512h0M1275 365h0M1228 424h0M837 739h0M1214 425h0M1212 507h0M915 692h0M1206 477h0M1103 575h0M1039 627h0M1136 561h0M988 667h0M902 706h0M1029 643h0M1197 490h0M1128 432h0M1016 593h0M1195 402h0M1073 581h0M954 670h0M1335 346h0M1213 482h0M1196 494h0M1034 603h0M1231 432h0M1086 542h0M1032 573h0M1192 455h0M1167 523h0M1097 609h0M1271 343h0M1294 421h0M1064 634h0M777 577h0M1130 574h0M934 687h0M1151 488h0M1026 647h0M1083 562h0M1034 633h0M1149 544h0M1170 427h0M1182 495h0M1207 457h0M1187 405h0M1087 576h0M1279 337h0M915 678h0M1131 452h0M1027 629h0M1025 609h0M1016 615h0M1148 460h0M970 663h0M1176 495h0M1034 634h0M1090 568h0M954 669h0M897 697h0M1155 408h0M1364 311h0M954 642h0M1156 475h0M1133 526h0M1205 455h0M1038 529h0M1107 554h0M1266 334h0M1049 566h0M1136 526h0M801 771h0M1084 557h0M955 673h0M1014 631h0M1087 600h0M1269 399h0M1149 548h0M777 564h0M1026 582h0M1074 527h0M1067 607h0M994 601h0M1009 565h0M1063 554h0M954 674h0M785 772h0M1160 519h0M1073 566h0M1173 533h0M1172 587h0M1276 404h0M1102 475h0M1135 542h0M1098 548h0M1126 453h0M1221 458h0M911 579h0M1203 457h0M1141 468h0M1221 485h0M1238 403h0M1068 522h0M1109 547h0M974 669h0M921 696h0M1027 642h0M1248 469h0M1036 642h0M1110 636h0M1103 563h0M991 647h0M1076 493h0M1253 412h0M1071 571h0M1014 605h0M906 701h0M1040 597h0M925 674h0M1121 542h0M993 504h0M1026 565h0M983 608h0M1115 541h0M1129 558h0M1150 412h0M864 720h0M1094 536h0M1127 536h0M1157 478h0M1011 657h0M1094 522h0M1265 351h0M1029 578h0M803 758h0M985 654h0M1118 533h0M959 662h0M956 667h0M1062 608h0M951 682h0M1134 521h0M1005 594h0M1142 480h0M973 638h0M1043 607h0M911 592h0M1035 616h0M1183 482h0M990 497h0M1107 576h0M1167 538h0M1185 413h0M1013 569h0M1178 544h0M1058 598h0M985 662h0M956 617h0M1275 357h0M1160 455h0M1040 545h0M844 737h0M1131 565h0M1271 412h0M974 654h0M1111 466h0M1038 577h0M1225 462h0M1207 419h0M1027 586h0M1014 636h0M1040 629h0M1028 626h0M1039 631h0M1077 551h0M1057 563h0M1270 351h0M1188 478h0M1127 499h0M1191 477h0M1150 512h0M1055 528h0M1289 330h0M1020 593h0M1038 614h0M1165 492h0M1099 578h0M1072 524h0M1336 364h0M1267 467h0M1120 561h0M1173 547h0M1324 464h0M983 652h0M1030 601h0M1075 508h0M1254 418h0M1086 597h0M1111 577h0M1209 520h0M911 670h0M1117 524h0M1188 516h0M1093 592h0M1120 584h0M925 658h0M1118 563h0M990 638h0M1228 477h0M1077 620h0M1182 388h0M1077 542h0M1169 444h0M1121 574h0M1013 649h0M934 678h0M1134 561h0M977 648h0M1041 456h0M1035 610h0M1083 621h0M1112 557h0M1107 584h0M1190 493h0M1148 477h0M1018 614h0M1160 441h0M1260 456h0M1037 599h0M1144 496h0M1083 574h0M1346 342h0M1037 622h0M1322 389h0M992 608h0M776 637h0M1276 393h0M838 738h0M1368 295h0M1044 648h0M1200 485h0M998 580h0M1044 565h0M1133 484h0M1059 576h0M1030 646h0M1019 641h0M1166 483h0M1022 612h0M991 614h0M1222 389h0M1038 557h0M1021 648h0M1043 609h0M1011 593h0M977 634h0M1017 567h0M1091 495h0M1183 516h0M1020 641h0" stroke="#2a2a55" stroke-width="3.4" stroke-linecap="round" stroke-opacity="0.22" fill="none"/><path d="M1040 646h0M1090 509h0M1013 575h0M1187 462h0M1103 557h0M1375 303h0M1058 599h0M1159 488h0M1228 416h0M1235 501h0M1100 556h0M948 657h0M1319 378h0M1008 644h0M1055 618h0M1138 492h0M1106 572h0M1003 652h0M1122 556h0M1166 501h0M1075 600h0M968 671h0M1139 552h0M1267 369h0M1017 658h0M1192 485h0M1183 420h0M994 650h0M1343 344h0M1144 464h0M1103 496h0M1229 379h0M1146 550h0M1245 411h0M1234 442h0M1198 449h0M936 682h0M1126 497h0M1181 585h0M972 491h0M1275 387h0M810 756h0M1012 588h0M1009 643h0M1188 485h0M1197 486h0M989 634h0M1080 483h0M1061 624h0M1187 448h0M1066 627h0M1147 563h0M1050 643h0M1087 607h0M1202 501h0M1092 533h0M1148 421h0M1244 434h0M1228 426h0M1099 634h0M775 357h0M1147 516h0M1062 597h0M832 743h0M975 584h0M1039 602h0M1130 546h0M1250 455h0M1109 547h0M1141 481h0M1078 570h0M1014 619h0M1046 636h0M1160 528h0M1044 608h0M1152 513h0M968 646h0M936 660h0M1100 533h0M984 655h0M997 607h0M1152 522h0M1061 632h0M1203 396h0M1111 565h0M1127 579h0M915 551h0M1096 595h0M1013 631h0M1137 567h0M1145 524h0M1081 547h0M1057 591h0M1152 502h0M1033 610h0M1080 588h0M1114 582h0M1292 358h0M1099 634h0M1071 571h0M1062 612h0M1063 602h0M991 635h0M1070 504h0M792 772h0M994 622h0M1065 599h0M1022 583h0M1263 424h0M1191 394h0M1023 582h0M1178 543h0M1178 479h0M1164 444h0M1081 580h0M1232 336h0M1064 579h0M1271 328h0M1031 611h0M1033 574h0M1150 555h0M1166 503h0M1270 391h0M1089 569h0M1105 537h0M1214 486h0M1064 596h0M1209 432h0M1199 455h0M1213 432h0M1098 505h0M1132 489h0M986 677h0M1068 555h0M1274 375h0M1163 490h0M1214 519h0M1228 414h0M1213 393h0M1115 583h0M809 759h0M1028 571h0M1081 580h0M1046 600h0M1248 436h0M973 618h0M1040 614h0M1102 533h0M1166 442h0M776 619h0M974 597h0M962 644h0M1262 404h0M1052 600h0M1040 638h0M1002 660h0M1084 601h0M1272 340h0M1164 504h0M882 709h0M1206 391h0M979 663h0M1134 512h0M1054 632h0M1169 524h0M932 646h0M1078 558h0M1188 508h0M1048 566h0M1033 636h0M952 688h0M1150 443h0M1146 507h0M1149 546h0M1052 561h0M1238 417h0M1194 392h0M1063 552h0M1071 544h0M1116 556h0M1159 503h0M1121 482h0M1017 581h0M1050 577h0M1204 379h0M1018 655h0M1210 479h0M1262 434h0M1188 521h0M1226 365h0M1147 470h0M1164 434h0M1018 592h0M1057 648h0M1059 572h0M1123 542h0M1033 646h0M1216 464h0M1272 427h0M1221 452h0M1225 423h0M1141 568h0M1086 556h0M1061 636h0M1122 496h0M1075 627h0M980 632h0M1018 644h0M1047 628h0M1155 478h0M1068 593h0M1140 519h0M1077 613h0M1081 619h0M1083 542h0M1149 455h0M1050 635h0M1262 400h0M912 552h0M1149 453h0M1256 378h0M1020 625h0M1098 565h0M990 635h0M1040 628h0M818 756h0M1036 627h0M1178 435h0M1152 508h0M953 626h0M1369 305h0M1067 535h0M1189 453h0M1145 510h0M1009 608h0M983 612h0M1055 635h0M929 686h0M1037 639h0M925 683h0M1182 586h0M1165 445h0M1068 580h0M1090 509h0M1108 499h0M1052 602h0M894 687h0M1257 410h0M1013 626h0M975 646h0M1230 441h0M1051 576h0M983 670h0M1148 458h0M1011 591h0M1095 567h0M1017 635h0M1076 466h0M1222 357h0M1212 501h0M990 643h0M1012 640h0M1076 546h0M962 670h0M1058 609h0M1042 545h0M945 665h0M960 672h0M880 705h0M1149 509h0M1100 524h0M1079 515h0M1060 560h0M1146 516h0M1166 553h0M945 649h0M915 694h0M1047 386h0M909 683h0M1044 627h0M1170 544h0M989 600h0M803 758h0M966 621h0M782 772h0M1150 537h0M1062 618h0M784 771h0M882 707h0M1004 659h0M1013 634h0M1229 436h0M1179 515h0M1011 649h0M1192 468h0M1204 466h0M1062 597h0M1048 625h0M953 641h0M1091 564h0M1164 443h0M1223 412h0M1173 502h0M1217 499h0M1059 380h0M1015 650h0M1051 548h0M1107 545h0M1036 647h0M1107 633h0M990 615h0M1131 505h0M1204 487h0M1225 457h0M1245 362h0M956 647h0M1140 553h0M878 711h0M1109 578h0M1100 516h0M1039 577h0M1237 449h0M1071 606h0M1138 463h0M1025 655h0M1053 635h0M1243 443h0M1168 406h0M1053 577h0M929 674h0M1244 444h0M1107 550h0M1017 630h0M1289 390h0M1153 480h0M914 695h0M782 771h0M1090 525h0M1162 529h0M1150 541h0M1080 524h0M1177 510h0M1272 367h0M1071 584h0M777 509h0M988 636h0M1114 549h0M1221 481h0M999 653h0M1143 425h0M1064 522h0M925 538h0M965 670h0M995 645h0" stroke="#2a2a55" stroke-width="3.4" stroke-linecap="round" stroke-opacity="0.22" fill="none"/><path d="M874 708h0M1083 553h0M1164 524h0M1314 450h0M1003 640h0M1271 434h0M1115 581h0M846 734h0M1096 561h0M1027 598h0M1146 569h0M1126 527h0M1244 394h0M1106 470h0M1075 610h0M1042 628h0M889 686h0M1343 349h0M1131 510h0M1218 442h0M1200 453h0M969 636h0M1226 498h0M1132 554h0M1077 593h0M879 681h0M904 697h0M880 708h0M1089 545h0M1161 474h0M974 629h0M1142 409h0M1131 484h0M1180 467h0M1043 579h0M919 692h0M1048 569h0M1043 638h0M1073 604h0M1051 609h0M1132 563h0M1025 608h0M1131 516h0M1110 586h0M1018 595h0M1084 530h0M1247 403h0M1100 560h0M1070 579h0M1185 450h0M1116 478h0M1070 606h0M1370 287h0M1273 350h0M1038 633h0M1053 592h0M812 755h0M879 708h0M1080 577h0M1120 412h0M1094 596h0M809 756h0M1143 534h0M1191 501h0M1131 542h0M1221 509h0M958 641h0M1151 537h0M841 742h0M1314 394h0M1033 560h0M1087 586h0M1140 543h0M1180 491h0M1034 644h0M1247 387h0M1126 556h0M985 655h0M1170 458h0M1097 596h0M1063 545h0M953 684h0M1164 465h0M1178 495h0M1274 414h0M1127 583h0M1141 549h0M1113 522h0M961 636h0M1215 487h0M1030 561h0M1143 446h0M1147 526h0M1019 624h0M1042 618h0M1149 530h0M975 662h0M1114 580h0M905 694h0M986 643h0M1161 406h0M1148 508h0M1093 525h0M1055 593h0M987 591h0M1196 420h0M1159 516h0M935 654h0M1274 388h0M1014 603h0M1279 416h0M936 679h0M1112 594h0M1041 621h0M1105 567h0M1014 609h0M1006 629h0M1164 499h0M1000 667h0M1044 611h0M1287 384h0M1251 447h0M955 677h0M1013 635h0M1183 441h0M909 544h0M1148 462h0M1105 589h0M846 733h0M777 330h0M1118 591h0M1101 599h0M1017 638h0M1226 470h0M1093 528h0M1107 592h0M1090 560h0M1105 568h0M1053 403h0M1150 423h0M1248 400h0M1029 612h0M1181 473h0M1163 545h0M1115 562h0M1079 521h0M1053 625h0M1002 631h0M803 772h0M1214 392h0M1105 552h0M1151 500h0M1112 545h0M1160 419h0M1148 501h0M1062 561h0M1021 643h0M1116 459h0M907 701h0M1148 562h0M973 659h0M944 691h0M1044 570h0M1161 494h0M1328 386h0M1090 609h0M974 652h0M1263 394h0M999 610h0M1097 501h0M1155 517h0M1007 603h0M1366 310h0M1100 568h0M1122 476h0M1117 633h0M983 662h0M1156 498h0M950 659h0M889 700h0M1041 588h0M1235 411h0M1093 545h0M1201 468h0M987 615h0M982 644h0M1062 603h0M1108 520h0M1007 603h0M1076 606h0M1105 635h0M1157 529h0M949 644h0M1146 434h0M1062 560h0M1228 480h0M1360 285h0M1179 389h0M1024 590h0M932 667h0M1086 601h0M1129 563h0M1100 583h0M895 704h0M1008 644h0M1278 404h0M1171 585h0M1108 533h0M1212 370h0M986 626h0M778 629h0M1124 504h0M1098 452h0M957 652h0M1092 600h0M1132 547h0M1055 600h0M914 681h0M1066 595h0M1160 517h0M1144 492h0M1086 486h0M1166 516h0M1007 635h0M993 602h0M777 676h0M1039 627h0M1057 610h0M965 643h0M1123 460h0M950 674h0M1130 497h0M1274 382h0M1072 628h0M1161 565h0M1003 539h0M1023 636h0M916 518h0M1373 292h0M952 656h0M1081 522h0M1140 489h0M1171 533h0M944 665h0M1096 571h0M1161 394h0M1013 575h0M1173 581h0M1223 343h0M1198 464h0M984 674h0M1292 350h0M1104 554h0M1165 538h0M1050 635h0M1120 545h0M1138 562h0M1049 345h0M1112 536h0M973 612h0M914 694h0M946 627h0M1038 627h0M971 666h0M890 709h0M980 658h0M1053 633h0M1147 500h0M1083 606h0M1172 528h0M1122 571h0M1260 365h0M1063 559h0M1011 601h0M1072 577h0M1133 543h0M1038 616h0M1190 397h0M1160 542h0M985 550h0M1126 578h0M1003 622h0M776 574h0M1122 537h0M1005 609h0M1079 595h0M1170 544h0M1080 503h0M1012 622h0M1167 543h0M1099 529h0M1093 594h0M1040 578h0M996 653h0M1004 662h0M998 659h0M879 704h0M1256 355h0M1060 599h0M1146 531h0M1019 554h0M1140 571h0M1073 579h0M1226 420h0M1155 489h0M1125 494h0M939 656h0M1025 604h0M957 677h0M922 690h0M1153 520h0M1121 551h0M1110 577h0M950 651h0M1187 440h0M1258 385h0M1156 506h0M1129 547h0M992 669h0M1240 343h0M1098 578h0M928 687h0M1117 476h0M1138 572h0M993 630h0M1173 525h0M1367 300h0M1153 499h0M1179 500h0M1116 549h0M1036 487h0M1150 550h0M1247 404h0M1284 462h0M1169 515h0M1162 431h0M1156 458h0M1188 402h0M1053 591h0M1212 410h0M1064 605h0M1089 552h0M874 714h0M1235 417h0M1088 577h0M1218 472h0M1108 570h0M868 717h0M1110 586h0M1005 650h0M1044 605h0M1009 610h0M1016 617h0M881 701h0" stroke="#2a2a55" stroke-width="3.4" stroke-linecap="round" stroke-opacity="0.22" fill="none"/><path d="M1078 592h0M812 756h0M1075 524h0M990 650h0M1153 516h0M1114 537h0M1138 459h0M1138 534h0M1240 397h0M1077 554h0M797 764h0M1167 450h0M1128 482h0M1046 604h0M1090 610h0M1227 466h0M1223 465h0M1237 396h0M1105 570h0M1178 481h0M1055 589h0M1332 378h0M1224 414h0M1013 658h0M1066 618h0M1101 542h0M1269 341h0M1144 568h0M1133 566h0M1237 438h0M1078 545h0M1091 541h0M1154 476h0M1054 536h0M996 656h0M799 763h0M1199 484h0M1142 494h0M1041 597h0M1074 584h0M1132 496h0M1286 431h0M1097 437h0M1080 598h0M1168 530h0M1108 544h0M1265 404h0M1273 428h0M1071 534h0M905 689h0M1009 584h0M1125 507h0M923 694h0M1143 441h0M969 686h0M1019 589h0M1219 477h0M929 685h0M867 725h0M1101 536h0M1223 402h0M902 699h0M1150 432h0M1203 393h0M1056 633h0M866 721h0M1055 600h0M1166 520h0M1037 599h0M1179 515h0M1002 638h0M788 772h0M1050 640h0M1231 386h0M968 644h0M977 675h0M1166 544h0M1139 544h0M900 703h0M1119 523h0M1028 561h0M1063 564h0M910 422h0M1037 614h0M1118 470h0M1113 591h0M1020 654h0M1040 443h0M1218 358h0M1165 486h0M920 690h0M1097 507h0M1079 604h0M1241 387h0M1180 528h0M778 722h0M1051 582h0M941 657h0M1050 616h0M1101 480h0M825 760h0M1127 568h0M1117 582h0M1027 656h0M1044 597h0M1142 510h0M985 662h0M1113 536h0M1018 631h0M1092 578h0M984 657h0M1132 554h0M1126 578h0M975 664h0M1138 562h0M1129 477h0M965 682h0M1080 558h0M1292 383h0M1134 441h0M1063 599h0M1249 410h0M1238 433h0M960 677h0M1076 610h0M1108 636h0M1061 621h0M1266 426h0M1224 454h0M1140 558h0M1198 480h0M893 675h0M1257 339h0M1328 384h0M1270 329h0M776 330h0M979 627h0M1016 644h0M1030 587h0M1094 519h0M1043 598h0M1070 560h0M1299 430h0M997 655h0M1125 582h0M1157 445h0M1014 577h0M855 727h0M1145 446h0M874 718h0M974 574h0M927 647h0M1087 599h0M1260 367h0M1153 463h0M1290 372h0M797 771h0M1032 604h0M1035 591h0M1113 635h0M977 659h0M1065 526h0M1255 374h0M1013 586h0M1247 372h0M1117 471h0M1149 524h0M1022 652h0M1213 442h0M1042 604h0M1039 630h0M1151 553h0M1071 570h0M1211 367h0M1057 590h0M1110 513h0M1075 576h0M1131 510h0M1173 523h0M904 497h0M1078 554h0M1221 361h0M1371 298h0M1124 580h0M973 661h0M1175 523h0M1015 642h0M927 580h0M1115 497h0M1151 470h0M1333 369h0M1192 487h0M1244 353h0M1164 509h0M907 689h0M1245 451h0M1021 611h0M1127 476h0M928 687h0M1186 443h0M1158 531h0M1246 423h0M1141 531h0M1037 587h0M1091 552h0M1013 648h0M1196 465h0M1052 560h0M907 686h0M1181 474h0M1193 415h0M1192 432h0M1211 426h0M1244 493h0M1242 387h0M1242 403h0M1264 451h0M800 759h0M1055 619h0M1200 454h0M1133 526h0M1080 532h0M962 685h0M1245 362h0M1247 455h0M1155 533h0M1040 609h0M1084 565h0M1103 465h0M775 666h0M1205 503h0M1263 436h0M1083 522h0M1217 488h0M907 693h0M1014 575h0M981 624h0M1005 667h0M1242 449h0M1096 607h0M1016 615h0M976 656h0M1030 561h0M951 643h0M1080 602h0M1185 521h0M1180 514h0M1242 486h0M987 662h0M904 663h0M1069 550h0M1198 489h0M1107 546h0M1066 562h0M1047 392h0M959 684h0M1313 446h0M1019 648h0M1090 587h0M959 685h0M946 673h0M1197 503h0M1139 549h0M1198 484h0M1219 443h0M1151 459h0M1118 505h0M1001 598h0M1072 588h0M816 751h0M1214 456h0M1078 600h0M1030 625h0M1001 634h0M1138 424h0M1023 579h0M1098 601h0M1014 616h0M1080 578h0M1092 594h0M980 611h0M1129 511h0M1044 527h0M1174 472h0M1248 431h0M930 701h0M971 663h0M1020 599h0M949 675h0M1059 601h0M1113 512h0M1251 381h0M1021 633h0M1235 430h0M1235 425h0M1106 550h0M1184 544h0M1098 471h0M1361 308h0M1035 588h0M1036 618h0M1175 419h0M1084 578h0M1110 535h0M1206 492h0M1081 599h0M960 637h0M1121 575h0M1157 504h0M1073 612h0M795 773h0M959 666h0M1104 538h0M1044 523h0M1039 570h0M1085 574h0M1203 455h0M1055 600h0M1298 372h0M1116 529h0M1010 656h0M1128 523h0M942 645h0M1198 495h0M1091 516h0M1091 598h0M1067 615h0M988 611h0M1052 619h0M1000 659h0M1008 648h0M1094 445h0M1095 511h0M1018 588h0M1094 600h0M977 668h0M1046 614h0M1249 357h0M1034 581h0M813 753h0M1057 611h0M982 649h0M1102 480h0M776 376h0M1019 632h0M1129 561h0M1043 592h0M1217 461h0M1203 442h0M1133 544h0M1042 591h0M1009 639h0M1115 418h0M900 681h0" stroke="#2a2a55" stroke-width="3.4" stroke-linecap="round" stroke-opacity="0.22" fill="none"/><path d="M1073 613h0M1183 509h0M1147 532h0M1217 515h0M971 664h0M993 652h0M1011 599h0M1349 326h0M1218 388h0M1120 447h0M1147 436h0M987 659h0M822 749h0M978 648h0M1272 361h0M1264 352h0M1279 354h0M1057 631h0M1356 315h0M1150 544h0M1031 566h0M778 533h0M1063 592h0M1021 631h0M835 743h0M984 676h0M811 755h0M1093 572h0M993 629h0M819 753h0M1039 642h0M1134 438h0M1109 528h0M1167 500h0M1258 414h0M1145 550h0M1056 578h0M1139 527h0M1117 572h0M1042 556h0M1056 608h0M1111 537h0M916 700h0M1185 441h0M918 699h0M1014 589h0M1197 530h0M1071 624h0M1223 394h0M1044 624h0M1169 542h0M1261 394h0M1253 389h0M1113 585h0M1004 586h0M1041 638h0M1120 572h0M980 634h0M961 658h0M966 681h0M1140 462h0M1064 570h0M1270 376h0M1238 364h0M914 709h0M1181 541h0M1114 502h0M965 680h0M1176 547h0M801 761h0M926 697h0M1214 464h0M1096 531h0M1026 623h0M776 490h0M1238 362h0M1102 567h0M1075 555h0M1058 626h0M1147 473h0M1326 384h0M1034 625h0M1181 469h0M1249 403h0M1071 568h0M1060 553h0M938 685h0M1018 653h0M1366 324h0M1226 406h0M941 691h0M1168 419h0M1054 531h0M1076 562h0M1253 462h0M1078 510h0M986 649h0M1042 613h0M920 688h0M981 654h0M1149 426h0M1070 527h0M776 519h0M1068 604h0M1252 389h0M1162 529h0M1241 474h0M975 622h0M1052 599h0M1277 350h0M1231 448h0M1148 454h0M1210 474h0M1067 569h0M822 752h0M906 686h0M1323 356h0M1193 441h0M1198 479h0M1039 607h0M1164 542h0M1139 475h0M1252 395h0M1123 504h0M1162 435h0M1073 507h0M1128 504h0M1098 637h0M1112 588h0M1181 412h0M1057 634h0M1073 623h0M1122 535h0M1232 438h0M1272 379h0M1003 626h0M1066 582h0M1359 329h0M1160 519h0M884 697h0M1267 384h0M1066 610h0M1166 546h0M1275 415h0M1281 353h0M1110 425h0M1166 478h0M853 761h0M1193 427h0M1279 345h0M1060 631h0M920 683h0M991 655h0M1106 572h0M1204 493h0M1198 388h0M982 629h0M1053 575h0M1154 431h0M1208 493h0M1370 318h0M1241 421h0M960 627h0M1051 596h0M1260 355h0M983 623h0M1110 591h0M1109 567h0M1027 641h0M922 658h0M962 642h0M1083 592h0M965 650h0M976 670h0M1217 463h0M1164 453h0M1057 597h0M1075 556h0M1168 544h0M1000 583h0M1184 509h0M989 622h0M1060 562h0M1101 530h0M1246 483h0M1107 574h0M1240 414h0M917 686h0M1231 428h0M980 674h0M1003 581h0M912 681h0M954 669h0M1180 441h0M1163 512h0M985 638h0M909 698h0M1187 402h0M1185 532h0M949 672h0M1247 458h0M1018 593h0M1255 359h0M1192 422h0M1272 407h0M934 654h0M1150 486h0M1063 614h0M1068 607h0M1184 490h0M1149 496h0M1197 397h0M1118 574h0M1046 617h0M806 760h0M1272 439h0M1146 467h0M963 647h0M998 654h0M1111 569h0M1057 613h0M1152 551h0M974 670h0M1164 516h0M1263 390h0M1145 485h0M1203 433h0M1152 502h0M1208 455h0M1351 325h0M1256 372h0M1020 629h0M1049 622h0M1141 550h0M896 701h0M1026 610h0M1183 379h0M1125 464h0M1213 390h0M1144 563h0M1028 629h0M914 670h0M1118 579h0M1177 383h0M1142 545h0M1022 574h0M990 586h0M938 664h0M1251 359h0M987 617h0M1295 350h0M984 677h0M983 616h0M1070 525h0M1010 645h0M857 726h0M1243 413h0M1011 564h0M1077 570h0M1160 540h0M874 700h0M1177 499h0M1074 589h0M1136 559h0M1073 571h0M963 652h0M1217 488h0M1264 439h0M981 669h0M1136 485h0M1258 394h0M968 633h0M884 705h0M1268 428h0M1101 511h0M1157 406h0M1025 627h0M1369 308h0M1019 654h0M1040 560h0M982 631h0M1190 497h0M1002 625h0M1016 634h0M1202 527h0M1099 594h0M1278 389h0M1169 522h0M1109 591h0M1090 445h0M1260 376h0M1107 634h0M1148 440h0M984 610h0M1031 592h0M1235 438h0M1157 493h0M1168 526h0M1220 507h0M1184 470h0M1082 566h0M1081 562h0M1047 578h0M1150 461h0M1091 601h0M1086 576h0M1286 354h0M1028 640h0M1020 601h0M1217 470h0M1006 612h0M1047 609h0M1077 569h0M1194 444h0M978 471h0M1056 627h0M1078 559h0M1073 580h0M1283 382h0M1033 464h0M906 684h0M1188 473h0M969 634h0M1048 589h0M1126 519h0M1115 549h0M960 682h0M1168 586h0M948 632h0M1205 507h0M1265 364h0M1049 583h0M1033 569h0M1022 559h0M1034 642h0M1246 359h0M1157 472h0M966 631h0M1124 491h0M886 697h0M1149 561h0M1033 589h0M826 761h0M1198 391h0M1071 567h0M1341 349h0M879 707h0M1101 597h0M970 671h0M1194 510h0M1113 470h0M1104 549h0M1156 509h0M1112 537h0" stroke="#2a2a55" stroke-width="3.4" stroke-linecap="round" stroke-opacity="0.22" fill="none"/><path d="M1063 596h0M1025 641h0M1126 546h0M1261 333h0M928 668h0M1136 535h0M1197 434h0M1005 650h0M1236 409h0M1048 637h0M1368 302h0M1031 571h0M909 680h0M1215 470h0M1031 643h0M1229 428h0M1116 470h0M996 643h0M1122 584h0M1196 534h0M1096 539h0M1067 582h0M1121 461h0M1160 524h0M979 644h0M1021 567h0M777 447h0M1146 548h0M1154 497h0M1243 408h0M962 640h0M847 736h0M1104 519h0M1091 575h0M1059 577h0M927 669h0M1172 586h0M1215 475h0M993 606h0M985 670h0M1055 594h0M1254 399h0M983 671h0M1092 594h0M979 648h0M1251 374h0M1099 475h0M923 434h0M1105 544h0M1038 571h0M827 748h0M1021 557h0M1287 371h0M986 628h0M1096 567h0M1160 490h0M1133 576h0M1022 558h0M1237 475h0M1240 408h0M1016 600h0M1134 557h0M1001 629h0M1222 450h0M876 695h0M963 663h0M1159 564h0M1076 607h0M1097 572h0M1129 471h0M1112 636h0M1208 496h0M1167 546h0M1035 489h0M1239 445h0M900 696h0M1075 552h0M1179 499h0M1055 605h0M1223 458h0M1041 501h0M1160 557h0M1190 404h0M1070 596h0M1126 456h0M1064 526h0M1044 572h0M1089 573h0M833 741h0M1124 532h0M995 649h0M1338 350h0M1134 577h0M1003 658h0M1262 386h0M824 750h0M914 692h0M1006 634h0M1010 654h0M1079 573h0M1049 592h0M1026 554h0M1086 510h0M1010 625h0M988 605h0M1153 476h0M1137 500h0M1361 313h0M1204 466h0M1253 489h0M1185 453h0M979 677h0M942 662h0M1090 590h0M1165 492h0M1079 553h0M969 649h0M984 605h0M1075 583h0M1101 537h0M1013 574h0M1167 501h0M1121 565h0M1130 590h0M1162 537h0M962 693h0M1142 536h0M1007 639h0M1029 603h0M1138 427h0M1357 324h0M1108 595h0M1019 594h0M1372 311h0M1151 490h0M1044 587h0M1175 534h0M1064 559h0M1096 578h0M874 700h0M1202 407h0M1265 340h0M1341 341h0M1103 635h0M1165 508h0M1102 589h0M1015 613h0M897 698h0M1078 583h0M821 755h0M1100 592h0M983 629h0M842 737h0M1091 495h0M1027 638h0M1209 367h0M1172 434h0M1131 503h0M957 623h0M1075 553h0M946 674h0M1029 620h0M973 687h0M1337 370h0M1143 553h0M1007 611h0M1067 529h0M1102 577h0M1133 505h0M1236 409h0M1204 411h0M1095 549h0M1067 570h0M1111 575h0M1060 562h0M1175 454h0M1149 514h0M1073 593h0M961 673h0M1102 507h0M1053 575h0M1174 536h0M1216 424h0M1257 338h0M1064 633h0M1052 589h0M1054 621h0M1131 435h0M1162 444h0M969 607h0M1043 598h0M1139 522h0M1276 379h0M957 636h0M1004 592h0M1117 517h0M1004 655h0M1174 518h0M1009 641h0M1200 495h0M968 596h0M1027 560h0M1054 581h0M960 682h0M1021 645h0M1048 627h0M932 691h0M1254 464h0M1072 579h0M991 662h0M1127 538h0M1009 602h0M1156 539h0M1227 362h0M1009 644h0M1011 641h0M968 665h0M1100 634h0M1062 573h0M1086 576h0M895 706h0M1253 448h0M1103 545h0M1143 443h0M1058 573h0M977 670h0M1161 492h0M1206 377h0M1033 629h0M1182 585h0M1104 600h0M999 570h0M1152 443h0M1272 356h0M1121 500h0M891 687h0M1266 410h0M1070 520h0M1291 363h0M1203 467h0M921 688h0M1106 596h0M882 702h0M1074 536h0M905 692h0M1182 407h0M1067 478h0M1189 520h0M1194 365h0M1154 503h0M1147 515h0M1005 572h0M1136 551h0M1109 588h0M1076 614h0M965 674h0M1140 480h0M1357 284h0M1150 441h0M1238 412h0M1047 649h0M1063 620h0M1008 600h0M1213 456h0M1143 481h0M776 551h0M1044 604h0M910 676h0M1182 397h0M1180 478h0M1055 632h0M1320 357h0M911 689h0M1058 580h0M779 361h0M1124 583h0M1058 575h0M1263 388h0M1021 603h0M1020 632h0M1025 636h0M1113 566h0M1038 576h0M1086 581h0M1038 621h0M1023 604h0M1180 483h0M956 672h0M1237 378h0M801 764h0M1007 639h0M1010 643h0M1133 456h0M1100 505h0M1195 487h0M1290 379h0M984 660h0M1142 453h0M1179 517h0M877 700h0M1087 493h0M1024 581h0M991 604h0M1019 558h0M1068 559h0M977 619h0M982 665h0M1244 487h0M933 665h0M965 687h0M1008 611h0M1062 577h0M962 680h0M997 638h0M1325 355h0M1102 634h0M1245 464h0M1048 613h0M916 685h0M1010 648h0M966 645h0M936 672h0M776 725h0M1263 427h0M1126 509h0M1096 583h0M1052 610h0M1014 598h0M1157 520h0M968 625h0M948 635h0M1139 453h0M1244 435h0M1113 634h0M1187 445h0M1166 521h0M993 663h0M1120 582h0M1097 510h0M1173 514h0M980 636h0M1148 535h0M946 693h0M1118 485h0M1212 467h0M1035 626h0M990 612h0M1028 596h0M1050 615h0M867 721h0M950 649h0M777 726h0M1064 579h0M1165 548h0" stroke="#2a2a55" stroke-width="3.4" stroke-linecap="round" stroke-opacity="0.22" fill="none"/><path d="M1185 445h0M950 668h0M1207 465h0M1219 420h0M991 623h0M1017 582h0M1008 614h0M946 693h0M1062 564h0M1063 604h0M1079 565h0M1194 393h0M964 625h0M837 742h0M1024 645h0M938 668h0M1082 551h0M1244 368h0M1101 543h0M921 676h0M992 656h0M1127 429h0M1017 598h0M925 677h0M1319 459h0M1094 511h0M1185 542h0M1113 539h0M1110 584h0M927 696h0M1127 536h0M1069 547h0M1220 468h0M1209 470h0M1059 615h0M1094 587h0M1262 342h0M1208 398h0M1040 624h0M925 667h0M1078 532h0M1120 547h0M1079 459h0M974 653h0M1213 474h0M1102 597h0M1162 523h0M1082 561h0M1160 527h0M1179 504h0M1065 598h0M1170 559h0M1195 398h0M1187 409h0M1274 340h0M968 610h0M1002 597h0M1286 377h0M1010 631h0M1214 472h0M968 611h0M1368 288h0M1111 492h0M1001 614h0M1049 603h0M978 655h0M806 770h0M1067 621h0M1065 598h0M1093 540h0M807 756h0M1074 541h0M1153 560h0M1252 406h0M1187 383h0M1018 609h0M1119 489h0M1127 471h0M1206 483h0M1128 514h0M1013 646h0M1078 510h0M1241 429h0M1102 634h0M1005 592h0M1036 623h0M1253 405h0M891 694h0M1288 347h0M1057 602h0M1132 504h0M1256 373h0M850 732h0M1226 386h0M919 698h0M1089 579h0M981 659h0M1227 433h0M1086 535h0M1180 490h0M1116 514h0M997 652h0M1023 607h0M1189 519h0M906 566h0M1054 507h0M1003 646h0M969 612h0M1019 659h0M1120 521h0M1032 630h0M1180 475h0M1083 600h0M1182 521h0M1129 576h0M1095 532h0M1086 509h0M1229 408h0M972 671h0M980 625h0M918 672h0M980 625h0M1040 553h0M990 669h0M1294 372h0M1123 510h0M1050 580h0M985 637h0M1159 483h0M1148 566h0M953 682h0M829 746h0M1078 623h0M1207 393h0M1198 484h0M1048 619h0M1258 482h0M927 552h0M1277 442h0M1196 390h0M1031 630h0M1247 376h0M1035 610h0M1036 621h0M1061 628h0M1182 525h0M986 646h0M942 671h0M1146 478h0M975 658h0M1016 617h0M1048 581h0M893 695h0M1106 572h0M1145 560h0M793 766h0M920 694h0M934 668h0M1097 638h0M1279 468h0M1343 337h0M984 618h0M1022 607h0M1009 633h0M1066 590h0M779 630h0M1091 580h0M1119 590h0M957 677h0M1040 629h0M1014 568h0M1088 595h0M1243 374h0M1238 362h0M1107 560h0M1180 464h0M1152 482h0M1256 400h0M1217 443h0M1259 420h0M1249 464h0M983 591h0M1012 603h0M1021 650h0M1252 429h0M936 687h0M1048 559h0M1251 398h0M1056 614h0M1009 615h0M1194 463h0M1140 492h0M1288 373h0M1174 543h0M1212 455h0M1109 522h0M777 659h0M995 651h0M1329 376h0M1021 642h0M775 581h0M1295 327h0M885 706h0M1166 433h0M1231 401h0M1123 473h0M892 711h0M1134 518h0M1033 584h0M1060 582h0M1207 440h0M1072 610h0M1129 498h0M1029 611h0M1053 552h0M1076 609h0M1339 344h0M1095 529h0M980 596h0M1121 582h0M1150 460h0M876 710h0M1349 328h0M1046 571h0M1179 452h0M1083 537h0M1162 527h0M1232 396h0M1133 429h0M1164 516h0M777 448h0M964 679h0M964 684h0M944 684h0M1002 543h0M1054 575h0M1124 559h0M1112 501h0M1050 599h0M1289 402h0M1155 489h0M1104 587h0M1219 446h0M1047 446h0M1078 504h0M1112 568h0M1116 504h0M1214 436h0M1096 570h0M891 709h0M1215 424h0M962 668h0M1141 507h0M1087 541h0M1168 479h0M1085 617h0M962 652h0M1047 613h0M1119 516h0M1143 520h0M1254 377h0M1269 415h0M1116 504h0M866 721h0M1275 416h0M1181 493h0M1296 428h0M1209 486h0M964 631h0M1017 621h0M1049 568h0M1034 650h0M976 622h0M812 758h0M1204 378h0M1044 588h0M1264 408h0M1186 496h0M1291 345h0M1274 385h0M1086 581h0M1046 644h0M1121 507h0M1036 628h0M1274 446h0M1209 456h0M1168 464h0M998 620h0M1103 584h0M1209 462h0M1006 620h0M1080 577h0M1183 441h0M1048 553h0M1059 577h0M1273 409h0M1068 570h0M1040 568h0M914 674h0M1185 493h0M1015 625h0M983 651h0M992 630h0M1138 433h0M966 620h0M1153 478h0M1166 491h0M1193 519h0M1197 393h0M957 614h0M945 673h0M951 636h0M1067 585h0M1296 353h0M1043 634h0M1189 486h0M1362 302h0M1010 631h0M1179 447h0M977 675h0M1018 653h0M969 672h0M1074 567h0M1057 627h0M1192 457h0M1074 610h0M1274 368h0M1078 541h0M1009 604h0M1288 422h0M959 673h0M1010 618h0M1171 442h0M981 656h0M1076 552h0M968 669h0M1081 611h0M1171 478h0M1058 579h0M1197 488h0M1084 541h0M1024 628h0M1235 495h0M988 617h0M1168 399h0M798 771h0M1147 546h0M1076 535h0M1113 446h0M1121 588h0M1036 589h0M1145 554h0M1035 649h0M1139 480h0" stroke="#2a2a55" stroke-width="3.4" stroke-linecap="round" stroke-opacity="0.22" fill="none"/><path d="M950 677h0M1084 585h0M1181 432h0M1241 361h0M1059 626h0M931 659h0M991 666h0M1073 619h0M1105 508h0M1229 423h0M1097 506h0M997 629h0M1145 512h0M1162 508h0M1009 595h0M1016 614h0M1176 474h0M1181 417h0M1013 607h0M1254 389h0M1140 472h0M1066 601h0M1176 535h0M1229 430h0M1004 505h0M1152 448h0M980 659h0M1009 602h0M1187 415h0M1094 591h0M1184 525h0M1250 396h0M1135 503h0M858 727h0M1211 488h0M1191 426h0M973 667h0M938 650h0M1102 561h0M1199 373h0M901 560h0M940 668h0M994 639h0M1079 579h0M1183 489h0M1152 533h0M1353 327h0M1043 541h0M1027 626h0M1245 333h0M1042 604h0M1018 595h0M1268 346h0M1181 479h0M1079 539h0M992 657h0M1095 580h0M1147 491h0M1011 631h0M1204 407h0M1083 603h0M1033 578h0M907 533h0M942 648h0M1152 516h0M934 671h0M915 694h0M1254 411h0M1231 472h0M983 630h0M912 467h0M1075 610h0M1277 345h0M1189 455h0M1198 505h0M957 646h0M1167 488h0M1162 455h0M1080 571h0M896 702h0M777 483h0M1144 458h0M1115 566h0M971 649h0M955 672h0M1177 498h0M1099 492h0M1198 379h0M984 651h0M1124 514h0M1198 388h0M1105 537h0M921 452h0M988 637h0M950 693h0M951 681h0M1027 626h0M1215 387h0M776 369h0M1047 609h0M1055 628h0M1361 306h0M794 774h0M804 772h0M1205 527h0M1034 596h0M1077 613h0M1104 570h0M1123 466h0M1077 584h0M806 756h0M1043 622h0M1273 359h0M1032 578h0M1066 623h0M1165 537h0M1076 590h0M913 694h0M1141 480h0M939 682h0M1039 646h0M924 687h0M1089 496h0M1019 634h0M1029 606h0M1213 455h0M990 626h0M1183 442h0M1116 496h0M810 757h0M1036 620h0M1027 611h0M1081 575h0M1091 602h0M1003 663h0M1101 563h0M1020 638h0M1022 638h0M1143 414h0M1239 491h0M1252 401h0M1025 615h0M961 661h0M1176 452h0M1072 572h0M1095 599h0M1208 506h0M1104 519h0M1096 573h0M1193 374h0M1167 506h0M1199 408h0M941 690h0M1181 532h0M1075 612h0M1350 321h0M1158 440h0M1083 533h0M1092 573h0M1097 536h0M1014 631h0M1097 583h0M1269 384h0M1092 503h0M1133 490h0M1133 463h0M778 678h0M1084 585h0M1059 592h0M929 672h0M1179 450h0M1292 424h0M1158 463h0M1147 501h0M1119 529h0M1135 528h0M912 700h0M1350 329h0M1144 545h0M1195 472h0M1194 457h0M1101 565h0M982 521h0M1207 470h0M883 705h0M1117 487h0M993 649h0M1232 434h0M1299 327h0M1120 512h0M1054 633h0M1297 357h0M1256 449h0M1279 384h0M1106 574h0M1228 435h0M1041 629h0M984 627h0M805 760h0M1130 538h0M898 701h0M1025 558h0M1119 539h0M1045 573h0M1034 583h0M1121 551h0M1093 551h0M1228 356h0M1038 640h0M988 651h0M1026 573h0M1119 535h0M1068 619h0M1020 638h0M1272 447h0M1070 555h0M951 680h0M1068 586h0M783 772h0M1098 585h0M1032 596h0M1030 658h0M1120 468h0M1055 606h0M1151 511h0M1273 343h0M1290 386h0M896 678h0M1101 436h0M1085 551h0M1166 477h0M1112 586h0M1082 586h0M960 641h0M1090 594h0M930 659h0M941 669h0M927 685h0M995 651h0M1178 489h0M1066 598h0M1155 508h0M1197 417h0M923 701h0M970 637h0M1014 651h0M1127 421h0M864 723h0M1067 614h0M1042 569h0M1056 529h0M1236 435h0M1222 425h0M1017 648h0M1218 471h0M972 627h0M1115 539h0M890 704h0M1197 420h0M1139 542h0M1167 500h0M923 665h0M937 669h0M1026 625h0M1181 427h0M1067 632h0M1109 501h0M1270 345h0M1061 567h0M1284 375h0M1075 546h0M1217 491h0M1018 586h0M980 644h0M1163 493h0M1165 542h0M1189 459h0M1015 645h0M1081 519h0M1239 342h0M910 693h0M1073 469h0M1078 591h0M990 617h0M923 662h0M1063 559h0M995 660h0M1023 644h0M1024 598h0M1171 538h0M1168 473h0M1058 550h0M1164 437h0M857 728h0M1070 618h0M1218 507h0M1247 427h0M1052 541h0M1016 540h0M1003 654h0M830 745h0M1002 591h0M1127 533h0M1228 340h0M1040 624h0M1102 558h0M1085 599h0M1233 403h0M1220 443h0M1240 364h0M859 725h0M1182 483h0M972 643h0M1121 557h0M1189 476h0M909 599h0M1028 605h0M1268 384h0M1082 615h0M1341 350h0M937 691h0M1261 402h0M1013 632h0M945 684h0M1184 474h0M1114 495h0M1187 512h0M862 725h0M1105 592h0M913 490h0M1171 470h0M1127 537h0M1115 528h0M1134 569h0M878 704h0M1277 369h0M1368 294h0M1017 620h0M1147 427h0M1039 641h0M1104 525h0M1033 644h0M1051 605h0M1028 637h0M932 651h0M1071 519h0M1005 654h0M775 583h0M982 641h0M1174 451h0M987 620h0M1048 516h0M1065 592h0M1135 532h0" stroke="#2a2a55" stroke-width="3.4" stroke-linecap="round" stroke-opacity="0.22" fill="none"/><path d="M1093 595h0M1018 618h0M1161 474h0M967 672h0M1117 473h0M1153 558h0M1098 562h0M775 460h0M1188 391h0M1031 628h0M1263 429h0M1060 628h0M1122 472h0M1188 452h0M1063 605h0M1083 536h0M1054 507h0M1054 567h0M1152 470h0M1048 568h0M1126 497h0M1123 525h0M1112 473h0M1039 547h0M1059 549h0M1224 456h0M1283 370h0M902 572h0M936 672h0M1108 537h0M971 667h0M1063 530h0M1096 602h0M1164 540h0M1220 413h0M1241 378h0M942 646h0M1164 439h0M1046 627h0M976 648h0M919 689h0M1224 377h0M1161 535h0M1105 582h0M1212 476h0M1080 530h0M1060 547h0M1041 571h0M1237 336h0M1239 410h0M1063 632h0M1115 567h0M1117 564h0M1034 618h0M1057 522h0M1294 382h0M1152 525h0M1093 581h0M1162 530h0M1123 412h0M1212 398h0M1151 520h0M1064 617h0M1048 628h0M1161 542h0M1116 483h0M1033 621h0M1072 542h0M1037 372h0M1113 590h0M1083 619h0M1298 339h0M1255 377h0M1149 541h0M1078 521h0M1246 365h0M1015 653h0M1180 584h0M1309 403h0M1034 606h0M952 655h0M1250 350h0M1227 476h0M1060 603h0M990 504h0M1205 355h0M1202 390h0M1294 367h0M984 624h0M1117 581h0M1032 584h0M959 651h0M1193 395h0M1209 453h0M1073 614h0M1130 466h0M1110 588h0M1004 575h0M1086 538h0M1202 434h0M1180 491h0M1002 668h0M1020 641h0M1020 573h0M1073 573h0M1044 601h0M1138 496h0M1256 398h0M935 694h0M1042 623h0M959 675h0M960 667h0M1186 493h0M1191 486h0M1200 412h0M1046 589h0M1177 482h0M1225 460h0M1149 553h0M1104 601h0M1053 581h0M942 673h0M1036 624h0M971 646h0M1218 377h0M1089 568h0M1212 405h0M1192 505h0M1215 425h0M1085 561h0M1048 536h0M1061 599h0M1181 589h0M1012 618h0M1043 622h0M1044 580h0M1307 435h0M1289 389h0M1098 552h0M1004 602h0M1061 602h0M1160 454h0M878 711h0M1102 568h0M1053 576h0M988 616h0M944 696h0M962 655h0M1118 491h0M1228 439h0M1153 416h0M799 774h0M1134 469h0M1088 556h0M1072 540h0M1099 508h0M1008 632h0M1235 411h0M1002 580h0M1054 530h0M1247 428h0M1239 454h0M1058 600h0M1012 645h0M1170 504h0M1183 451h0M996 637h0M1008 592h0M1121 451h0M1204 514h0M1080 617h0M1151 452h0M1053 556h0M1146 577h0M1155 561h0M1000 648h0M1065 618h0M1191 536h0M1131 555h0M1246 376h0M944 630h0M1050 633h0M1116 634h0M1032 627h0M962 679h0M1099 607h0M1086 494h0M1191 401h0M1219 443h0M1374 286h0M1104 584h0M1241 469h0M1225 416h0M1215 494h0M1146 547h0M1048 563h0M1126 547h0M1273 351h0M1007 651h0M941 643h0M885 704h0M1167 544h0M996 659h0M1088 545h0M1284 394h0M983 627h0M1090 621h0M980 651h0M1333 342h0M1139 556h0M920 690h0M1303 437h0M1158 547h0M1033 567h0M1079 545h0M1368 300h0M1209 480h0M1053 613h0M1024 552h0M1209 476h0M1062 621h0M1143 409h0M1017 634h0M919 693h0M1105 561h0M1291 365h0M1033 639h0M1106 597h0M1160 552h0M1118 544h0M1173 522h0M1153 560h0M1151 480h0M1198 465h0M1103 636h0M1040 556h0M974 639h0M1023 581h0M1062 590h0M1080 612h0M1089 579h0M1079 594h0M1008 658h0M1011 587h0M1182 550h0M995 596h0M1038 603h0M1081 577h0M1272 383h0M1263 431h0M1152 520h0M888 704h0M995 626h0M1065 605h0M1279 409h0M1169 533h0M1062 571h0M1085 590h0M1074 610h0M1230 438h0M1083 556h0M1267 392h0M1176 532h0M1268 420h0M1142 541h0M1033 603h0M1204 370h0M779 354h0M1120 514h0M1038 611h0M1055 627h0M1018 610h0M778 637h0M1065 601h0M1102 547h0M981 671h0M1030 551h0M1139 544h0M1102 580h0M1028 640h0M1159 456h0M995 618h0M1007 653h0M967 638h0M879 710h0M1325 372h0M1045 539h0M1074 543h0M993 665h0M1212 478h0M886 703h0M1105 633h0M1211 476h0M1282 416h0M925 682h0M1014 615h0M1087 565h0M1066 615h0M1112 564h0M1108 585h0M1032 642h0M1144 470h0M1141 466h0M1227 355h0M1268 406h0M1038 621h0M776 467h0M1051 469h0M1205 527h0M1212 417h0M1238 486h0M1099 599h0M1079 562h0M1167 515h0M1208 412h0M1096 560h0M1205 460h0M1226 427h0M1271 379h0M1129 432h0M1019 647h0M1000 595h0M1075 557h0M1115 548h0M1233 412h0M1045 622h0M1116 579h0M961 665h0M1238 343h0M1156 448h0M1015 653h0M1029 636h0M1197 449h0M1070 575h0M921 684h0M1084 557h0M1222 446h0M1105 602h0M1143 580h0M996 649h0M1124 432h0M1096 591h0M1126 534h0M1215 452h0M1092 557h0M1069 522h0M924 667h0M974 646h0M1225 368h0M1096 555h0M1161 558h0M1059 584h0M1089 570h0M1081 602h0" stroke="#2a2a55" stroke-width="3.4" stroke-linecap="round" stroke-opacity="0.22" fill="none"/><path d="M1060 553h0M987 634h0M1155 418h0M867 721h0M921 704h0M1131 494h0M1189 379h0M950 689h0M1102 536h0M1053 589h0M1159 509h0M1000 647h0M896 709h0M1177 527h0M925 696h0M1017 589h0M1015 634h0M1232 361h0M986 652h0M999 662h0M1136 544h0M914 705h0M926 664h0M1363 334h0M1138 537h0M1120 524h0M1125 581h0M1208 469h0M1262 364h0M1113 490h0M1059 530h0M1303 408h0M1043 605h0M1061 630h0M1057 605h0M1070 623h0M1098 586h0M1110 534h0M921 666h0M1095 536h0M1108 559h0M1226 479h0M1087 539h0M1282 421h0M1252 446h0M1071 602h0M986 609h0M1054 566h0M996 639h0M972 650h0M1139 525h0M1051 576h0M1144 512h0M1028 601h0M918 674h0M1052 543h0M985 669h0M1038 610h0M1165 534h0M1039 631h0M1197 488h0M1051 564h0M1020 602h0M980 608h0M1064 604h0M971 682h0M1154 497h0M1211 450h0M1104 601h0M1044 567h0M998 670h0M1076 528h0M1098 568h0M1179 501h0M1161 425h0M980 628h0M963 668h0M1110 543h0M1116 580h0M1102 560h0M1237 405h0M1104 575h0M1088 575h0M1198 526h0M989 498h0M1152 491h0M1323 468h0M1006 597h0M1193 464h0M935 690h0M1039 636h0M853 762h0M943 685h0M967 635h0M1029 641h0M1262 400h0M1086 500h0M1005 635h0M1118 514h0M1252 390h0M1243 422h0M975 665h0M1060 525h0M1207 462h0M1125 538h0M1145 455h0M1148 493h0M912 663h0M1040 625h0M1154 408h0M1115 541h0M1025 602h0M1086 582h0M1086 507h0M1194 449h0M1152 568h0M1035 628h0M1104 520h0M1210 389h0M988 652h0M1066 505h0M1024 631h0M1055 623h0M1024 647h0M1093 594h0M1129 536h0M1119 535h0M1100 559h0M907 509h0M1032 581h0M998 631h0M976 627h0M1141 492h0M1124 579h0M1057 617h0M1103 452h0M1167 505h0M1118 595h0M1194 473h0M1034 629h0M940 661h0M985 627h0M1041 572h0M1038 584h0M1033 619h0M1351 344h0M1036 646h0M941 645h0M1069 598h0M1279 344h0M1047 557h0M1034 625h0M1063 587h0M1014 640h0M1087 613h0M1077 498h0M932 675h0M1274 358h0M1126 554h0M1125 561h0M1089 551h0M951 674h0M1084 551h0M998 633h0M1075 512h0M1131 553h0M972 667h0M1128 535h0M943 679h0M985 614h0M1177 513h0M936 675h0M1164 490h0M1196 402h0M1023 641h0M1145 465h0M1172 448h0M1214 367h0M1135 562h0M1128 514h0M1169 530h0M1033 640h0M1200 489h0M1072 611h0M1129 457h0M1084 600h0M1102 527h0M1233 392h0M1108 542h0M1124 545h0M1025 602h0M1196 404h0M1063 592h0M1132 579h0M1029 574h0M1119 499h0M875 714h0M942 676h0M1020 598h0M1286 394h0M1053 544h0M1341 349h0M1077 559h0M1253 378h0M1144 540h0M948 676h0M1104 551h0M1084 602h0M1104 636h0M1097 593h0M1045 636h0M1039 629h0M921 692h0M1189 477h0M1242 361h0M901 525h0M1137 552h0M1261 370h0M997 597h0M1007 658h0M1023 606h0M989 622h0M1082 590h0M1046 549h0M1127 548h0M962 678h0M1002 576h0M1027 632h0M975 658h0M1178 476h0M1086 512h0M1100 473h0M1058 628h0M1061 595h0M905 688h0M997 617h0M1348 327h0M1158 521h0M1185 473h0M1203 505h0M1032 611h0M1124 504h0M1137 519h0M1128 561h0M1139 479h0M1140 541h0M1147 469h0M1025 637h0M893 424h0M1246 405h0M1005 616h0M1179 525h0M1024 615h0M1375 291h0M920 689h0M1127 555h0M1018 629h0M1142 543h0M1269 346h0M839 741h0M1219 353h0M1078 604h0M997 646h0M1294 349h0M1000 626h0M813 753h0M1032 579h0M1000 621h0M1127 531h0M1161 399h0M1119 580h0M1230 454h0M1123 536h0M1079 606h0M1132 528h0M1043 413h0M1086 557h0M1130 536h0M1072 538h0M1105 429h0M1204 470h0M1195 523h0M1096 589h0M1024 640h0M1125 545h0M1214 514h0M1215 465h0M1268 448h0M1066 619h0M1138 457h0M1044 617h0M1012 604h0M974 650h0M1341 334h0M1104 561h0M967 653h0M1039 531h0M922 664h0M1338 339h0M1142 515h0M1020 620h0M1184 465h0M1106 541h0M893 697h0M1209 430h0M1183 441h0M1097 579h0M1042 552h0M940 688h0M962 678h0M776 462h0M1322 386h0M969 646h0M1166 489h0M1068 559h0M1051 586h0M1110 574h0M1127 484h0M887 702h0M967 673h0M1126 501h0M944 657h0M977 662h0M1148 492h0M1084 597h0M1154 411h0M1171 462h0M1049 542h0M1058 534h0M806 760h0M1060 596h0M1111 425h0M1108 452h0M989 635h0M1205 475h0M1064 624h0M1117 533h0M960 689h0M1112 499h0M1058 517h0M1105 520h0M1078 624h0M1112 557h0M1144 547h0M1110 539h0M996 640h0M1231 428h0M836 739h0M1369 304h0M982 609h0M1094 513h0M933 672h0M1216 353h0M1075 577h0" stroke="#2a2a55" stroke-width="3.4" stroke-linecap="round" stroke-opacity="0.22" fill="none"/><path d="M904 697h0M1196 386h0M778 711h0M1084 596h0M1316 457h0M1024 604h0M981 664h0M1151 514h0M1231 362h0M1249 331h0M816 753h0M934 666h0M1087 488h0M1079 619h0M1047 603h0M834 742h0M1180 488h0M1108 513h0M1162 510h0M1059 574h0M1008 587h0M1030 642h0M1032 561h0M778 410h0M1034 632h0M1135 513h0M1231 414h0M1194 493h0M1007 500h0M1159 479h0M980 620h0M1370 307h0M1142 557h0M1102 594h0M962 682h0M1059 576h0M1186 460h0M1052 574h0M1220 458h0M1163 465h0M1047 623h0M1292 424h0M1296 355h0M1096 518h0M1022 644h0M998 622h0M1148 468h0M1097 597h0M1054 589h0M1141 520h0M1267 476h0M1051 481h0M899 685h0M1097 505h0M1007 622h0M1147 443h0M1015 625h0M1029 631h0M1009 603h0M960 661h0M1217 484h0M1156 427h0M1067 511h0M969 659h0M1148 493h0M1204 453h0M1209 459h0M1142 448h0M1127 545h0M1037 622h0M871 717h0M1109 554h0M929 664h0M1152 457h0M1234 432h0M1205 494h0M1078 583h0M1001 652h0M1112 595h0M984 635h0M1020 594h0M1309 440h0M999 620h0M1149 548h0M999 644h0M1138 434h0M948 683h0M1039 630h0M1321 382h0M1173 502h0M1367 283h0M1081 575h0M1290 334h0M1051 621h0M1326 351h0M922 678h0M1132 576h0M1052 577h0M965 654h0M1162 459h0M1026 590h0M990 638h0M900 704h0M1136 513h0M1100 497h0M913 687h0M1077 587h0M778 475h0M1245 387h0M1240 418h0M1300 358h0M1136 522h0M1198 472h0M1121 495h0M1073 554h0M976 674h0M875 711h0M936 673h0M1191 420h0M1037 635h0M1108 545h0M856 730h0M1259 419h0M1020 590h0M1278 377h0M903 686h0M1222 493h0M1318 390h0M1114 535h0M961 628h0M1341 341h0M1189 484h0M1027 645h0M775 481h0M890 698h0M1088 606h0M994 646h0M1015 651h0M1052 620h0M1210 471h0M1281 329h0M1113 513h0M1072 600h0M1044 591h0M974 642h0M956 679h0M1097 583h0M1125 543h0M1145 552h0M1218 394h0M994 663h0M1017 598h0M1056 591h0M960 625h0M1141 522h0M932 650h0M980 663h0M1112 559h0M1253 469h0M797 762h0M1265 443h0M889 700h0M1021 621h0M1128 526h0M1231 381h0M1087 525h0M1228 378h0M1148 506h0M864 722h0M1089 554h0M1133 547h0M1001 612h0M984 657h0M927 676h0M1194 477h0M977 660h0M1022 597h0M1111 553h0M1141 548h0M1272 421h0M1135 565h0M1083 550h0M982 643h0M1288 348h0M1114 535h0M1278 395h0M1326 378h0M980 671h0M995 656h0M1138 484h0M997 645h0M1183 515h0M1217 447h0M947 675h0M1183 438h0M1103 583h0M1117 548h0M1129 505h0M1095 576h0M1183 517h0M1374 297h0M899 692h0M1048 618h0M1154 454h0M1117 534h0M898 687h0M1093 594h0M1109 525h0M931 693h0M1037 598h0M1292 371h0M868 721h0M1178 440h0M1189 499h0M778 656h0M1225 443h0M1152 412h0M1048 618h0M997 649h0M1052 577h0M1049 626h0M1069 594h0M1091 606h0M1221 459h0M1016 630h0M970 677h0M966 646h0M936 689h0M1203 403h0M997 615h0M1107 428h0M1020 568h0M1370 324h0M1091 606h0M1116 520h0M1177 586h0M1235 421h0M1067 526h0M1183 457h0M1177 451h0M1156 442h0M793 764h0M996 665h0M1040 622h0M776 714h0M935 682h0M1075 556h0M1004 613h0M1097 610h0M1110 552h0M1073 604h0M1000 617h0M1081 533h0M1240 371h0M1077 526h0M1226 420h0M778 476h0M1060 609h0M1090 593h0M1027 641h0M1259 333h0M1135 421h0M1142 439h0M1018 622h0M1084 507h0M1275 407h0M985 611h0M1002 657h0M1136 427h0M1255 459h0M975 623h0M1041 557h0M982 608h0M1126 509h0M1075 512h0M1087 535h0M1012 600h0M1009 635h0M1011 550h0M1083 534h0M1002 610h0M1241 457h0M1043 634h0M1169 392h0M1228 380h0M1126 532h0M1001 590h0M966 645h0M1178 409h0M1174 423h0M1208 494h0M1093 559h0M917 677h0M1176 466h0M1072 560h0M1120 515h0M1164 437h0M1242 496h0M778 386h0M1213 441h0M1008 652h0M1041 586h0M1041 636h0M1061 527h0M1036 584h0M1056 541h0M1249 389h0M1132 548h0M1367 307h0M983 639h0M1015 621h0M1061 625h0M1075 613h0M1059 606h0M1090 531h0M1197 468h0M994 626h0M1049 555h0M1224 509h0M1148 496h0M1247 352h0M994 637h0M1043 599h0M1034 610h0M1251 490h0M1298 329h0M1253 350h0M1023 600h0M1214 471h0M1113 576h0M1305 406h0M1081 542h0M995 645h0M1196 462h0M1000 649h0M1113 512h0M1041 483h0M1020 570h0M1153 518h0M1174 513h0M1202 403h0M1155 513h0M1144 544h0M1138 479h0M1059 542h0M1227 352h0M1107 594h0M1361 318h0M1025 586h0M1085 592h0M900 692h0M981 659h0M1107 529h0M1206 470h0" stroke="#2a2a55" stroke-width="3.4" stroke-linecap="round" stroke-opacity="0.22" fill="none"/><path d="M1021 654h0M1104 577h0M1257 329h0M1151 518h0M955 684h0M1043 539h0M1112 506h0M1078 568h0M1098 562h0M1101 591h0M994 656h0M1027 563h0M1217 385h0M1020 634h0M1101 591h0M1165 421h0M1069 624h0M1203 447h0M1005 621h0M1138 434h0M1259 454h0M1152 556h0M1092 554h0M1197 465h0M1108 634h0M1236 416h0M1189 455h0M839 738h0M990 667h0M1161 436h0M1239 425h0M1029 571h0M949 682h0M950 637h0M908 471h0M1006 654h0M1055 617h0M1005 667h0M1110 554h0M1078 571h0M1036 633h0M1183 409h0M1120 575h0M1132 546h0M935 672h0M844 734h0M994 647h0M1247 447h0M1277 377h0M1042 450h0M1141 514h0M954 652h0M1018 653h0M1196 472h0M1267 395h0M911 659h0M996 624h0M1049 593h0M1062 601h0M1175 513h0M1062 593h0M944 662h0M952 663h0M1140 506h0M1156 531h0M1048 622h0M887 700h0M1066 532h0M1224 378h0M927 701h0M1116 569h0M1063 581h0M1228 375h0M1016 594h0M852 731h0M993 661h0M1075 510h0M888 708h0M1105 484h0M1199 409h0M957 662h0M1213 494h0M1073 567h0M1196 470h0M1179 521h0M1051 572h0M1017 649h0M1317 359h0M1185 482h0M1213 438h0M1184 534h0M941 694h0M982 666h0M1078 538h0M1039 450h0M1208 475h0M992 631h0M941 658h0M1237 477h0M1040 607h0M1266 458h0M1079 540h0M1063 597h0M1188 481h0M1363 279h0M1118 487h0M969 671h0M1123 503h0M1025 562h0M855 729h0M777 660h0M965 666h0M1133 500h0M1189 492h0M1023 652h0M1144 493h0M1010 623h0M1128 527h0M1004 648h0M1101 556h0M1061 618h0M1105 563h0M1105 529h0M1048 622h0M1237 476h0M1123 543h0M1064 616h0M1137 508h0M1073 581h0M1129 544h0M959 638h0M1138 534h0M1114 552h0M1215 432h0M1196 461h0M1229 442h0M884 693h0M1364 327h0M1045 615h0M961 668h0M1185 378h0M1233 368h0M1113 566h0M777 368h0M1133 443h0M1177 385h0M1154 470h0M1126 559h0M1101 582h0M972 659h0M995 657h0M1202 492h0M1089 570h0M1069 533h0M1143 492h0M1226 480h0M1078 610h0M1158 470h0M997 596h0M1129 524h0M926 674h0M977 641h0M1182 540h0M1167 547h0M1261 355h0M1107 493h0M1000 634h0M918 500h0M1189 414h0M1011 609h0M981 669h0M1102 586h0M1086 531h0M998 647h0M1238 499h0M1172 587h0M1029 640h0M1091 580h0M1012 559h0M985 655h0M1219 346h0M1166 398h0M1013 600h0M1068 624h0M1244 400h0M1081 573h0M777 599h0M1330 360h0M1106 476h0M1055 583h0M1150 544h0M1066 585h0M990 612h0M1221 410h0M1269 446h0M1184 427h0M1019 576h0M985 646h0M976 666h0M1131 557h0M1103 546h0M1054 613h0M1089 572h0M1194 437h0M1002 625h0M814 756h0M981 594h0M1272 408h0M1140 567h0M1112 569h0M1075 583h0M1004 653h0M1054 586h0M1105 570h0M961 668h0M1077 571h0M1174 467h0M1045 634h0M1034 618h0M1029 580h0M1210 405h0M1266 475h0M1022 643h0M1218 363h0M996 614h0M811 756h0M817 754h0M1262 360h0M961 654h0M1030 645h0M969 654h0M1082 461h0M1112 635h0M1352 327h0M1176 473h0M1088 524h0M1178 488h0M1212 474h0M1232 394h0M1149 452h0M1180 482h0M965 643h0M1051 598h0M1068 568h0M1012 645h0M1116 583h0M928 698h0M1211 452h0M985 509h0M795 770h0M1282 436h0M1231 425h0M824 747h0M943 687h0M1168 504h0M887 706h0M1248 377h0M1111 555h0M1208 523h0M1038 558h0M1012 653h0M976 637h0M1127 520h0M957 643h0M1064 582h0M1154 561h0M1074 580h0M1139 442h0M876 715h0M1281 462h0M1172 528h0M1181 525h0M1168 432h0M976 633h0M1235 346h0M1035 613h0M1094 489h0M1182 463h0M1163 494h0M1098 581h0M776 480h0M1161 464h0M1143 500h0M1021 622h0M1126 562h0M955 615h0M1348 288h0M1008 617h0M967 656h0M1151 515h0M930 648h0M1201 527h0M1072 545h0M950 666h0M1038 447h0M1040 641h0M1083 600h0M1062 562h0M1161 478h0M1286 338h0M1227 463h0M1183 500h0M974 621h0M1173 529h0M962 673h0M1088 614h0M1078 576h0M1345 331h0M1243 443h0M1085 512h0M985 601h0M1217 458h0M1007 585h0M1084 587h0M1225 454h0M945 664h0M1160 476h0M1050 575h0M1243 459h0M1147 531h0M1095 592h0M892 699h0M1191 442h0M897 696h0M1217 430h0M1127 554h0M1162 479h0M1240 400h0M1124 462h0M1183 506h0M1181 529h0M1239 495h0M1321 459h0M1047 616h0M1082 601h0M1216 452h0M1033 579h0M1044 631h0M1161 503h0M1179 486h0M1063 615h0M1235 406h0M1224 430h0M1089 578h0M1197 416h0M1018 647h0M1103 540h0M1260 409h0M1078 599h0M1125 543h0M1016 567h0M1122 559h0M1156 511h0M900 696h0" stroke="#2a2a55" stroke-width="3.4" stroke-linecap="round" stroke-opacity="0.22" fill="none"/><path d="M1097 580h0M1173 492h0M1034 542h0M1200 530h0M1011 640h0M1102 634h0M960 650h0M1016 580h0M1023 619h0M1273 414h0M1138 534h0M1227 450h0M1077 605h0M1054 605h0M1110 536h0M1084 613h0M1046 625h0M945 670h0M1140 542h0M1146 460h0M1005 648h0M1137 446h0M1017 632h0M1044 641h0M970 664h0M1200 438h0M1148 525h0M1040 643h0M1042 640h0M1059 632h0M1049 640h0M1028 587h0M1089 573h0M918 696h0M1061 609h0M921 672h0M1160 501h0M1146 495h0M1317 388h0M916 695h0M775 561h0M1165 495h0M962 674h0M1184 515h0M1046 550h0M1167 475h0M1082 568h0M1052 531h0M1013 631h0M1007 624h0M1042 386h0M1001 636h0M994 596h0M1005 643h0M1038 613h0M1103 542h0M1072 614h0M994 598h0M940 674h0M988 662h0M908 697h0M1114 516h0M1167 537h0M1062 614h0M1040 591h0M1296 410h0M1129 481h0M1108 567h0M1003 573h0M1062 606h0M949 646h0M1230 385h0M1090 514h0M1093 512h0M1121 544h0M1045 538h0M1137 552h0M1039 563h0M1096 610h0M916 692h0M1126 501h0M1088 593h0M1142 468h0M1353 339h0M1151 526h0M1256 415h0M1117 548h0M1048 533h0M1284 337h0M1347 346h0M1200 453h0M1009 605h0M1292 380h0M875 712h0M1205 419h0M1072 597h0M969 627h0M1331 374h0M1196 438h0M1311 399h0M1101 571h0M1098 594h0M912 517h0M1124 575h0M1151 456h0M1186 441h0M998 629h0M926 666h0M1120 575h0M1038 377h0M1091 543h0M1082 576h0M947 676h0M1124 489h0M1033 582h0M1003 642h0M1078 573h0M1181 487h0M1166 538h0M1154 567h0M923 689h0M1110 592h0M1222 410h0M1198 482h0M1037 572h0M985 612h0M1319 386h0M1231 413h0M1088 508h0M1069 552h0M1098 491h0M947 658h0M1262 388h0M1272 352h0M1182 491h0M1138 522h0M1120 578h0M1080 610h0M1113 528h0M1273 441h0M1005 644h0M1258 351h0M1060 538h0M1024 632h0M1067 600h0M1016 576h0M1161 440h0M1074 501h0M1095 564h0M1148 546h0M992 586h0M1226 412h0M1025 654h0M1248 429h0M1217 439h0M990 644h0M1080 593h0M936 670h0M1206 467h0M1133 574h0M1185 537h0M1069 588h0M957 647h0M1051 555h0M1130 503h0M1089 550h0M1071 616h0M977 658h0M942 685h0M1186 508h0M1264 419h0M1041 628h0M1143 508h0M1043 623h0M1052 612h0M1026 608h0M1122 540h0M1204 405h0M1015 654h0M1190 444h0M1081 573h0M1077 605h0M1131 579h0M1027 652h0M1231 421h0M1116 559h0M1261 478h0M1075 590h0M979 657h0M981 655h0M1116 592h0M984 607h0M1147 528h0M1083 615h0M1039 629h0M1041 627h0M1072 595h0M976 666h0M983 637h0M1271 385h0M1201 475h0M1287 354h0M1027 594h0M777 575h0M1234 434h0M1024 603h0M975 665h0M1201 491h0M863 723h0M1095 591h0M1262 442h0M1088 523h0M1132 515h0M1061 582h0M1074 592h0M1360 322h0M777 422h0M989 590h0M977 653h0M1239 394h0M1309 400h0M1108 517h0M1168 490h0M1063 565h0M1055 549h0M1016 600h0M1110 551h0M788 774h0M1021 642h0M1036 552h0M868 719h0M1079 505h0M1118 532h0M1125 527h0M1153 490h0M1053 562h0M1030 592h0M999 593h0M779 622h0M1136 545h0M1018 610h0M1184 516h0M1093 603h0M1073 538h0M973 481h0M1243 420h0M1138 552h0M1225 390h0M998 636h0M1050 627h0M965 604h0M1004 642h0M1006 605h0M979 616h0M1088 495h0M1262 395h0M935 672h0M1008 610h0M1096 591h0M1032 536h0M1209 443h0M1116 556h0M1086 507h0M1364 300h0M1049 633h0M1131 520h0M1069 519h0M1352 334h0M1190 400h0M1132 480h0M1106 490h0M1062 560h0M950 673h0M1034 609h0M1014 618h0M1155 530h0M1027 539h0M1022 656h0M1293 375h0M1311 444h0M1194 479h0M1086 590h0M1032 630h0M1125 579h0M857 728h0M1136 486h0M1146 513h0M1036 575h0M905 671h0M1076 526h0M877 701h0M1110 530h0M1295 376h0M1015 625h0M1202 439h0M776 515h0M1083 598h0M1188 451h0M1255 485h0M1097 523h0M1085 597h0M1050 599h0M1073 517h0M776 408h0M1171 585h0M1159 547h0M1255 362h0M1042 582h0M1195 491h0M1189 539h0M1058 623h0M1155 540h0M1028 611h0M1366 328h0M1134 559h0M1106 524h0M1037 618h0M935 692h0M1058 549h0M1208 518h0M1259 426h0M1103 433h0M803 772h0M1055 604h0M972 660h0M1028 640h0M1181 467h0M1256 335h0M1198 497h0M938 651h0M1141 504h0M1184 509h0M1232 482h0M1071 579h0M873 715h0M1254 463h0M1056 533h0M1188 452h0M1083 605h0M987 661h0M1192 512h0M1130 558h0M1044 598h0M1212 470h0M1056 539h0M1214 458h0M1183 517h0M870 717h0M1042 552h0M1075 612h0M1231 446h0M1057 571h0M1056 619h0" stroke="#2a2a55" stroke-width="3.4" stroke-linecap="round" stroke-opacity="0.22" fill="none"/><path d="M1061 615h0M1134 543h0M1047 600h0M1270 413h0M1370 305h0M1037 621h0M1125 562h0M958 667h0M1126 514h0M1215 367h0M1160 498h0M1024 581h0M1107 570h0M1048 591h0M1014 635h0M1203 455h0M1358 317h0M850 733h0M960 626h0M900 697h0M1027 569h0M1155 470h0M1005 646h0M1209 512h0M1141 557h0M1170 501h0M964 680h0M1270 403h0M1193 487h0M917 687h0M1151 553h0M1046 470h0M1167 542h0M1048 599h0M1007 569h0M1159 531h0M1210 500h0M982 639h0M914 701h0M1252 397h0M1279 374h0M1077 530h0M1295 371h0M1029 614h0M1226 365h0M1105 597h0M1175 419h0M882 708h0M976 668h0M991 630h0M1138 568h0M777 407h0M1116 555h0M1209 457h0M1098 586h0M1262 441h0M851 731h0M1140 574h0M1211 390h0M981 669h0M934 666h0M1241 336h0M1183 411h0M1008 654h0M1092 609h0M1071 571h0M913 567h0M1013 646h0M992 638h0M897 689h0M980 682h0M955 671h0M1262 359h0M1211 416h0M1075 596h0M1132 544h0M1044 605h0M1202 461h0M1072 532h0M1261 390h0M1151 552h0M1166 530h0M1233 470h0M1267 449h0M1169 584h0M799 770h0M1115 548h0M929 685h0M778 348h0M1078 617h0M1249 432h0M1041 402h0M1191 403h0M1021 637h0M1023 603h0M790 773h0M1077 617h0M1217 448h0M929 660h0M1016 652h0M1104 498h0M1256 405h0M876 712h0M990 510h0M1118 508h0M983 646h0M1071 576h0M1048 637h0M1182 526h0M1005 651h0M1282 347h0M1008 662h0M1184 523h0M1092 554h0M1223 482h0M1131 519h0M1044 552h0M1010 631h0M1136 527h0M1277 403h0M983 670h0M1322 462h0M1010 648h0M1275 366h0M1142 428h0M1032 631h0M1132 572h0M1113 477h0M1189 477h0M978 665h0M1215 445h0M809 756h0M777 508h0M1110 551h0M1272 361h0M989 664h0M1099 494h0M1128 461h0M1069 554h0M1121 528h0M1090 546h0M955 670h0M1034 641h0M1195 401h0M1014 597h0M1111 518h0M1351 318h0M1082 526h0M1081 513h0M1220 438h0M1140 506h0M1095 585h0M1260 389h0M1114 638h0M998 569h0M1154 509h0M1157 513h0M950 620h0M1188 374h0M1003 657h0M1118 415h0M1243 369h0M1139 535h0M1096 502h0M1122 549h0M860 725h0M1043 367h0M1120 560h0M1047 590h0M918 691h0M1097 586h0M1250 416h0M1193 369h0M1193 463h0M1177 399h0M1072 619h0M1302 433h0M1074 526h0M1266 373h0M975 610h0M1005 655h0M1194 527h0M1110 525h0M1044 632h0M1082 548h0M778 545h0M1087 605h0M1191 413h0M1047 622h0M1096 562h0M1078 534h0M1157 396h0M1045 647h0M1206 375h0M1062 613h0M1175 487h0M1089 576h0M946 673h0M1064 593h0M1110 527h0M1240 378h0M1270 345h0M987 641h0M983 672h0M1187 386h0M1216 418h0M1059 536h0M1045 573h0M1024 645h0M1085 595h0M1189 542h0M1136 492h0M1059 558h0M1015 606h0M1356 311h0M1067 588h0M974 662h0M1283 386h0M1108 571h0M1143 516h0M994 666h0M1047 617h0M1024 630h0M1072 538h0M1196 415h0M1104 576h0M1141 524h0M1196 480h0M1226 387h0M1037 578h0M1080 584h0M1231 437h0M1118 575h0M1068 604h0M1128 580h0M936 673h0M1118 545h0M1107 596h0M967 653h0M1086 500h0M1242 356h0M999 629h0M1104 495h0M1115 508h0M1344 351h0M1087 554h0M1152 546h0M1257 457h0M1167 409h0M947 679h0M1133 535h0M1149 541h0M1128 482h0M953 687h0M911 694h0M979 609h0M956 651h0M1135 540h0M1108 584h0M1101 551h0M1090 609h0M1186 507h0M1128 582h0M1128 526h0M891 699h0M1316 454h0M996 567h0M1101 581h0M1102 580h0M1087 564h0M1190 440h0M1089 563h0M1051 618h0M1097 594h0M1066 611h0M1250 372h0M1163 527h0M1068 575h0M904 679h0M1150 490h0M1082 534h0M1074 536h0M1050 601h0M1200 461h0M1172 512h0M1063 608h0M1064 608h0M1035 626h0M1142 466h0M985 617h0M1094 598h0M1033 642h0M1131 474h0M885 693h0M1143 561h0M1088 581h0M1153 490h0M1125 580h0M1141 556h0M1088 588h0M1269 435h0M882 709h0M1220 406h0M1131 570h0M988 675h0M989 649h0M1100 598h0M1002 622h0M1109 550h0M1199 521h0M1233 363h0M1066 550h0M1129 552h0M1191 486h0M1243 468h0M1177 515h0M1210 456h0M1099 588h0M1038 444h0M1276 375h0M1038 562h0M1169 539h0M1043 600h0M1165 536h0M777 641h0M1136 450h0M1077 578h0M1184 505h0M986 664h0M1244 384h0M942 679h0M1149 468h0M1071 505h0M931 662h0M1218 431h0M1117 536h0M1081 590h0M1264 335h0M1065 579h0M1017 614h0M1173 459h0M1019 622h0M1037 586h0M1006 606h0M1235 460h0M964 669h0M1079 596h0M777 506h0M1230 405h0M1178 514h0M1165 542h0M1172 429h0M1108 570h0" stroke="#2a2a55" stroke-width="3.4" stroke-linecap="round" stroke-opacity="0.22" fill="none"/><path d="M1155 544h0M1228 433h0M1241 390h0M1280 379h0M1136 571h0M1369 304h0M1181 426h0M1133 553h0M973 644h0M953 639h0M1110 569h0M1189 439h0M1005 602h0M776 490h0M953 664h0M1090 536h0M900 675h0M1297 399h0M1173 522h0M990 666h0M1095 476h0M980 661h0M1102 530h0M906 685h0M1146 440h0M1164 498h0M956 689h0M1072 565h0M1128 500h0M1233 485h0M1121 479h0M1139 538h0M1248 462h0M1145 556h0M1043 568h0M1172 456h0M1272 342h0M1142 552h0M1040 601h0M1108 549h0M1104 635h0M1258 446h0M1272 428h0M1073 552h0M1098 573h0M1028 617h0M1009 648h0M1137 484h0M1252 384h0M1010 629h0M1005 633h0M1131 454h0M1128 451h0M1156 443h0M1273 432h0M1130 551h0M1008 651h0M914 691h0M1113 586h0M1299 411h0M1000 621h0M1238 386h0M966 665h0M987 650h0M1065 589h0M1271 349h0M1056 639h0M1114 576h0M1136 520h0M1087 576h0M1249 421h0M1125 573h0M1134 537h0M984 671h0M1102 562h0M1047 623h0M878 712h0M1073 601h0M1036 597h0M1166 529h0M961 666h0M1092 591h0M1154 522h0M1230 361h0M1189 489h0M1061 566h0M1184 506h0M1176 470h0M1111 570h0M1115 546h0M1097 592h0M961 649h0M1179 497h0M1059 541h0M1154 532h0M778 429h0M1246 340h0M1153 565h0M1024 642h0M1008 650h0M1008 596h0M996 663h0M1089 532h0M1136 548h0M1088 606h0M1175 507h0M1179 483h0M1034 634h0M1097 570h0M1090 503h0M1085 529h0M1155 494h0M1251 374h0M1048 621h0M951 640h0M1134 550h0M1119 501h0M1054 629h0M1078 567h0M1049 557h0M1177 408h0M1092 537h0M1129 439h0M1274 404h0M1027 579h0M1195 453h0M1210 355h0M1299 358h0M1151 473h0M1101 587h0M897 698h0M1069 525h0M1217 471h0M1138 541h0M812 756h0M776 721h0M954 656h0M1154 498h0M971 652h0M1050 604h0M1217 371h0M937 668h0M1178 408h0M1180 489h0M1084 550h0M1101 526h0M1040 558h0M1053 639h0M1064 586h0M1147 415h0M1139 556h0M890 681h0M1072 602h0M1068 625h0M1013 557h0M957 626h0M1122 508h0M1088 594h0M1287 328h0M1102 601h0M1016 646h0M1050 569h0M1153 475h0M1040 550h0M1004 598h0M1129 453h0M1037 623h0M1281 342h0M1193 407h0M1102 544h0M1046 615h0M796 766h0M1022 580h0M1162 536h0M996 640h0M918 679h0M1109 478h0M1179 530h0M1094 559h0M840 738h0M1194 516h0M1088 584h0M1212 450h0M1250 439h0M1093 589h0M1161 539h0M1083 565h0M1073 566h0M1114 580h0M1017 631h0M1002 629h0M1167 409h0M1261 436h0M1141 535h0M1121 528h0M1003 619h0M1061 633h0M1048 548h0M1015 589h0M1186 539h0M1166 478h0M1142 501h0M906 681h0M1208 446h0M1278 429h0M1230 477h0M950 676h0M1288 342h0M1274 394h0M778 587h0M1202 519h0M1004 628h0M1069 520h0M1064 588h0M1079 599h0M777 627h0M1120 572h0M1082 555h0M888 682h0M1303 413h0M1128 448h0M1092 522h0M1002 639h0M1053 589h0M1077 610h0M1158 450h0M1172 463h0M1067 476h0M943 687h0M1006 643h0M1112 503h0M1183 499h0M1091 442h0M1146 568h0M1139 551h0M1086 525h0M1028 603h0M1100 580h0M1068 525h0M923 687h0M1038 463h0M967 655h0M1122 513h0M1108 580h0M953 682h0M1150 508h0M887 705h0M939 670h0M1018 636h0M1271 358h0M1031 615h0M1229 413h0M1158 552h0M1273 359h0M1262 408h0M1242 404h0M995 642h0M1148 556h0M1160 511h0M1136 429h0M1016 564h0M1124 464h0M1120 487h0M1174 486h0M1023 633h0M853 730h0M1101 606h0M1090 607h0M1027 574h0M1050 605h0M1182 513h0M1032 608h0M1096 572h0M1051 628h0M898 703h0M1046 588h0M1235 407h0M1204 438h0M1217 479h0M1129 492h0M1373 317h0M1269 364h0M1171 496h0M1039 556h0M1160 451h0M1270 389h0M1032 482h0M1276 385h0M1129 452h0M1058 558h0M1294 427h0M1151 514h0M1210 409h0M1220 481h0M1107 593h0M995 633h0M1060 523h0M1174 385h0M1060 610h0M932 638h0M1071 553h0M1084 506h0M1049 595h0M1043 354h0M1105 599h0M1070 605h0M1120 473h0M1184 484h0M957 640h0M1014 620h0M1166 399h0M1143 464h0M1235 397h0M1205 456h0M1224 431h0M1017 618h0M1044 572h0M1289 339h0M992 636h0M1182 524h0M1053 610h0M1157 523h0M1005 625h0M1066 613h0M1086 479h0M1100 571h0M1098 502h0M1286 371h0M999 654h0M1098 571h0M1061 597h0M1208 434h0M939 648h0M937 656h0M1029 628h0M1006 656h0M1060 618h0M1013 656h0M1148 442h0M1023 630h0M1114 581h0M1009 619h0M1156 499h0M1268 378h0M1264 443h0M1206 422h0M1112 567h0M976 594h0M1180 433h0M1265 400h0M1048 632h0M1065 584h0M940 679h0" stroke="#2a2a55" stroke-width="3.4" stroke-linecap="round" stroke-opacity="0.22" fill="none"/><path d="M984 647h0M1262 346h0M1176 424h0M1244 476h0M1115 580h0M1026 630h0M1005 647h0M1070 611h0M1004 599h0M997 649h0M1052 565h0M1056 587h0M1224 390h0M1032 549h0M1106 558h0M1218 452h0M1056 607h0M1273 332h0M1190 421h0M1171 490h0M1059 577h0M879 713h0M1096 602h0M1151 409h0M848 762h0M987 616h0M1023 598h0M1019 649h0M1178 525h0M1118 474h0M1044 628h0M1125 482h0M1061 548h0M1201 391h0M999 603h0M975 650h0M1008 589h0M962 655h0M1074 533h0M1185 387h0M1168 585h0M995 664h0M1147 443h0M1067 619h0M1124 585h0M871 718h0M951 658h0M1002 621h0M1063 580h0M1074 622h0M1248 374h0M972 655h0M816 753h0M1080 505h0M1040 594h0M1262 397h0M1051 626h0M932 678h0M1139 571h0M1129 555h0M1105 548h0M1148 453h0M844 735h0M1220 506h0M1048 636h0M1295 419h0M949 683h0M1051 600h0M1009 588h0M1248 386h0M982 636h0M1066 562h0M1035 574h0M1257 355h0M979 670h0M839 738h0M1013 636h0M1084 587h0M987 624h0M1351 334h0M960 655h0M1257 368h0M1092 536h0M1023 563h0M1097 565h0M1108 540h0M1006 649h0M1127 585h0M1024 642h0M923 692h0M922 561h0M1151 454h0M1003 653h0M1156 477h0M1044 635h0M1134 544h0M1225 375h0M1209 501h0M1026 639h0M1103 578h0M930 666h0M1008 642h0M1156 483h0M877 712h0M1077 549h0M1176 444h0M1157 455h0M1154 489h0M1078 520h0M1102 530h0M1072 472h0M777 417h0M1213 505h0M978 662h0M1122 561h0M1260 439h0M1034 580h0M913 661h0M1086 577h0M992 657h0M1269 457h0M1052 630h0M1129 492h0M1355 315h0M977 671h0M955 675h0M1123 577h0M1072 520h0M1197 505h0M1161 483h0M781 774h0M1290 427h0M1102 534h0M1028 612h0M1035 605h0M1002 659h0M1100 635h0M1053 559h0M909 699h0M1274 367h0M1140 430h0M1046 560h0M1222 392h0M892 701h0M1129 532h0M1035 594h0M1354 322h0M1282 394h0M1159 546h0M1224 340h0M1217 388h0M1005 641h0M1050 606h0M1278 380h0M1094 517h0M1079 611h0M1198 367h0M1038 577h0M997 594h0M1028 626h0M1256 396h0M1140 519h0M1068 596h0M1013 586h0M1173 482h0M988 659h0M1031 644h0M1360 305h0M1027 649h0M966 642h0M983 650h0M1098 604h0M1053 618h0M1082 553h0M1235 487h0M1228 384h0M1021 656h0M1154 510h0M1040 634h0M1375 300h0M972 649h0M1162 479h0M1122 464h0M927 568h0M1043 589h0M1243 397h0M1086 580h0M1201 388h0M956 662h0M1080 506h0M1112 497h0M1008 649h0M1281 393h0M1121 501h0M1026 598h0M1130 527h0M1136 572h0M1140 567h0M997 635h0M1082 579h0M1081 594h0M970 637h0M1054 618h0M1040 603h0M909 684h0M1221 407h0M1146 536h0M1163 552h0M1081 554h0M1196 458h0M1177 490h0M777 597h0M1151 477h0M1034 631h0M995 657h0M1188 509h0M1214 455h0M1019 577h0M1276 420h0M1190 478h0M1040 607h0M927 685h0M961 633h0M1068 578h0M1229 421h0M1241 431h0M1054 604h0M858 724h0M1136 509h0M1122 589h0M1153 532h0M1138 485h0M1113 636h0M1018 641h0M777 364h0M1000 620h0M948 629h0M1005 625h0M1094 499h0M1042 608h0M1117 440h0M977 663h0M1273 411h0M1102 552h0M1274 330h0M1277 342h0M1086 610h0M1190 470h0M1042 620h0M1034 578h0M1008 619h0M1238 478h0M1123 543h0M1116 456h0M1027 645h0M1020 626h0M1088 590h0M1068 548h0M1045 599h0M934 658h0M1040 632h0M1159 513h0M925 666h0M1242 459h0M1159 538h0M1042 578h0M1103 596h0M1026 567h0M1199 455h0M1049 559h0M861 724h0M1027 635h0M1000 657h0M1229 446h0M1200 391h0M1009 562h0M928 679h0M1163 505h0M1101 513h0M1102 556h0M1053 597h0M1086 593h0M1064 532h0M987 665h0M931 672h0M1050 598h0M1284 435h0M1071 627h0M1271 392h0M1065 569h0M1185 515h0M1249 387h0M1037 605h0M1177 462h0M1049 612h0M1075 602h0M1277 331h0M990 664h0M1159 499h0M1019 579h0M1099 545h0M1152 491h0M1211 441h0M972 656h0M1014 645h0M1083 496h0M1018 559h0M944 672h0M1149 530h0M936 672h0M1109 593h0M1148 475h0M1147 490h0M1093 605h0M1117 549h0M1070 608h0M1330 348h0M954 681h0M1164 539h0M1092 562h0M1063 546h0M1158 510h0M1016 614h0M982 651h0M1118 636h0M1143 483h0M934 672h0M964 635h0M1120 556h0M1079 555h0M1267 385h0M1291 383h0M1230 468h0M1200 462h0M1070 595h0M1043 623h0M1207 473h0M979 625h0M1110 557h0M1127 560h0M1081 536h0M1132 521h0M1140 545h0M1096 591h0M1187 410h0M1352 287h0M1147 515h0M1376 302h0M1183 457h0M985 646h0M953 660h0M1137 564h0M955 655h0" stroke="#2a2a55" stroke-width="3.4" stroke-linecap="round" stroke-opacity="0.22" fill="none"/><path d="M1080 562h0M1092 531h0M1276 404h0M1114 633h0M776 406h0M1099 537h0M1144 454h0M903 670h0M1101 545h0M1162 541h0M1027 576h0M825 746h0M928 681h0M980 591h0M1107 575h0M1299 419h0M1143 503h0M881 708h0M1023 614h0M933 681h0M948 671h0M997 666h0M1025 633h0M1057 561h0M1148 541h0M1148 467h0M1027 643h0M1132 449h0M1011 623h0M1096 506h0M1061 556h0M1219 359h0M1235 475h0M1167 546h0M1253 337h0M1106 527h0M942 649h0M1076 618h0M1066 591h0M985 613h0M1231 470h0M1170 453h0M1228 486h0M1129 427h0M1135 577h0M1115 499h0M1122 591h0M1230 350h0M1000 616h0M990 651h0M987 653h0M1003 580h0M1120 436h0M1065 549h0M923 696h0M1196 380h0M1298 365h0M1018 589h0M1072 587h0M1199 509h0M1051 634h0M777 555h0M1154 503h0M1226 507h0M1130 564h0M1040 604h0M1099 513h0M1093 613h0M1005 621h0M1027 599h0M994 632h0M1181 500h0M1053 601h0M1209 429h0M1201 500h0M1005 632h0M1181 467h0M1068 625h0M1086 597h0M1275 347h0M1048 628h0M1132 451h0M1250 394h0M1127 520h0M1272 394h0M1243 437h0M1204 448h0M1088 517h0M946 661h0M1024 639h0M1042 612h0M1252 421h0M1223 478h0M1021 597h0M1192 482h0M1007 582h0M1193 442h0M1272 474h0M1075 602h0M991 664h0M1153 526h0M943 683h0M1334 339h0M1066 539h0M941 675h0M1122 552h0M1016 622h0M1092 537h0M1114 576h0M991 641h0M1219 424h0M1178 438h0M1213 502h0M1137 476h0M1336 350h0M1119 528h0M1068 600h0M941 693h0M1106 553h0M1095 527h0M997 645h0M1005 646h0M1017 619h0M1170 424h0M1074 582h0M1070 601h0M1048 590h0M1218 505h0M777 629h0M1134 531h0M913 692h0M1110 476h0M1188 538h0M937 697h0M1082 563h0M1016 622h0M1160 528h0M1149 503h0M1042 597h0M1235 402h0M1158 523h0M1226 355h0M1179 462h0M1247 428h0M1043 563h0M1115 516h0M1005 650h0M1045 597h0M1095 574h0M1144 503h0M984 675h0M1126 557h0M1144 453h0M1155 465h0M1200 422h0M1249 421h0M1123 562h0M998 626h0M1145 506h0M1115 539h0M1049 593h0M1112 474h0M1089 482h0M1078 545h0M1072 625h0M1157 543h0M1157 448h0M1101 577h0M1025 644h0M1120 529h0M1100 534h0M991 646h0M1097 439h0M1058 623h0M1213 400h0M1166 467h0M1091 568h0M1226 431h0M1112 635h0M1117 569h0M884 714h0M1096 547h0M1147 523h0M929 695h0M1184 444h0M1240 444h0M1287 369h0M1157 551h0M1175 488h0M1249 431h0M1127 532h0M1253 441h0M1123 563h0M997 620h0M1261 409h0M1077 581h0M1011 647h0M923 692h0M1195 507h0M987 651h0M1251 366h0M909 702h0M1115 587h0M1275 471h0M1124 519h0M995 617h0M1267 417h0M1080 620h0M1061 581h0M1154 490h0M1008 615h0M1253 376h0M1182 474h0M1055 515h0M1148 544h0M1222 479h0M1032 574h0M1110 497h0M1071 619h0M1207 436h0M1194 497h0M1189 481h0M965 652h0M983 512h0M1062 519h0M1292 357h0M1170 501h0M1163 527h0M1022 606h0M977 651h0M1071 486h0M1101 493h0M877 713h0M776 515h0M1145 564h0M1147 546h0M1108 557h0M1139 565h0M1007 628h0M1279 441h0M983 669h0M1014 625h0M1105 535h0M1033 624h0M778 377h0M1146 540h0M1261 428h0M1093 525h0M1157 515h0M1129 526h0M1232 368h0M1192 417h0M990 637h0M1055 627h0M1216 517h0M1106 540h0M1177 544h0M1285 420h0M1077 583h0M1040 591h0M996 622h0M1184 521h0M969 670h0M1168 525h0M1022 627h0M973 649h0M1054 608h0M1119 518h0M964 653h0M1244 411h0M1035 635h0M1153 518h0M1166 501h0M1175 528h0M1201 497h0M1176 483h0M922 689h0M1183 440h0M994 666h0M1051 535h0M1050 579h0M1073 558h0M1111 574h0M1128 578h0M1096 588h0M1189 476h0M1073 542h0M979 662h0M1195 413h0M1061 625h0M1039 637h0M1000 628h0M1365 315h0M1148 480h0M1148 503h0M1283 326h0M1072 570h0M1202 385h0M1074 629h0M1233 471h0M1009 614h0M1238 372h0M1241 402h0M1135 559h0M1064 617h0M1025 546h0M1096 584h0M1160 537h0M1081 555h0M1371 305h0M979 657h0M963 639h0M961 675h0M1120 501h0M1091 590h0M1178 474h0M777 371h0M1105 566h0M1007 634h0M1047 629h0M1134 455h0M1052 635h0M1043 631h0M1293 375h0M1108 504h0M948 667h0M1204 442h0M868 720h0M1203 380h0M1078 550h0M932 685h0M1258 395h0M1227 443h0M1111 577h0M1000 597h0M1053 578h0M1179 486h0M1090 588h0M921 687h0M1221 468h0M817 760h0M903 671h0M1144 555h0M1139 518h0M1073 545h0M1109 635h0M1060 631h0M968 679h0M1028 636h0M1082 504h0M1094 603h0M976 635h0M1008 619h0" stroke="#2a2a55" stroke-width="3.4" stroke-linecap="round" stroke-opacity="0.22" fill="none"/><path d="M1168 532h0M916 695h0M1032 563h0M1206 489h0M1061 526h0M983 653h0M1147 446h0M989 666h0M1015 633h0M1327 471h0M1119 507h0M936 662h0M1125 480h0M1199 474h0M968 653h0M1111 579h0M1051 615h0M1163 505h0M984 655h0M1030 579h0M1220 449h0M1016 545h0M1139 511h0M1069 629h0M1068 621h0M1166 483h0M1139 483h0M988 665h0M928 686h0M1095 546h0M1058 634h0M1063 624h0M941 650h0M1331 347h0M1036 641h0M1136 522h0M1203 380h0M1129 450h0M1286 360h0M982 663h0M997 662h0M1097 506h0M1137 456h0M970 641h0M1209 491h0M1068 561h0M1022 606h0M1052 622h0M869 718h0M905 691h0M1105 529h0M1066 609h0M1059 626h0M848 735h0M1045 589h0M1061 586h0M1235 338h0M1077 574h0M1143 512h0M1101 558h0M952 667h0M1254 445h0M1281 397h0M1088 614h0M1166 519h0M1116 515h0M943 646h0M996 670h0M1072 533h0M1144 444h0M1179 436h0M1246 428h0M1219 353h0M1279 392h0M1012 618h0M1083 599h0M1107 486h0M1238 464h0M1066 608h0M1118 549h0M1008 602h0M1062 531h0M1082 606h0M1072 613h0M1058 626h0M1193 525h0M1104 579h0M1049 641h0M871 718h0M1272 333h0M1366 303h0M1201 478h0M1045 599h0M977 649h0M1177 584h0M948 653h0M1235 424h0M1122 463h0M1211 474h0M1167 429h0M1096 568h0M1261 401h0M1150 447h0M1224 480h0M1103 560h0M1129 451h0M993 582h0M971 664h0M1086 514h0M1014 621h0M954 532h0M976 661h0M1143 533h0M1149 481h0M1154 555h0M1136 543h0M1068 628h0M1088 601h0M1339 333h0M1074 599h0M1182 544h0M1034 648h0M947 694h0M932 669h0M1082 606h0M1037 569h0M1093 584h0M1076 565h0M1116 636h0M975 503h0M1081 569h0M1139 539h0M1030 543h0M883 703h0M1187 410h0M1182 400h0M1014 626h0M1177 408h0M1208 368h0M1032 614h0M1059 600h0M1127 491h0M975 666h0M1161 514h0M1143 538h0M1083 585h0M982 583h0M1047 634h0M1233 504h0M1267 368h0M933 685h0M1143 483h0M992 647h0M1200 488h0M1115 546h0M1202 500h0M1031 475h0M925 689h0M994 665h0M850 730h0M1271 395h0M1144 420h0M1098 533h0M937 655h0M1275 342h0M1192 414h0M974 606h0M1044 637h0M1146 481h0M1131 446h0M1198 393h0M1003 577h0M1129 450h0M1097 544h0M1102 532h0M1047 574h0M1059 588h0M1119 541h0M1094 567h0M1023 637h0M1156 471h0M1104 573h0M1032 650h0M1007 633h0M914 702h0M1078 544h0M1091 514h0M1361 312h0M946 676h0M1195 511h0M1157 446h0M999 664h0M1157 559h0M1083 571h0M910 697h0M1128 552h0M994 624h0M892 712h0M1148 506h0M1028 607h0M1160 442h0M1330 356h0M987 628h0M1170 465h0M1108 489h0M1033 643h0M1023 646h0M1260 329h0M1148 515h0M1071 559h0M892 684h0M1034 590h0M1052 553h0M1067 542h0M1032 619h0M1076 519h0M930 644h0M1098 552h0M1042 630h0M1102 588h0M1042 587h0M1042 634h0M1028 574h0M1170 540h0M1026 591h0M952 681h0M1070 589h0M1060 520h0M1253 423h0M981 635h0M1049 590h0M1018 617h0M1022 624h0M909 702h0M934 690h0M1190 409h0M1110 535h0M1295 357h0M1122 492h0M1105 563h0M1069 580h0M1264 356h0M947 688h0M925 680h0M983 634h0M892 710h0M1163 401h0M1019 598h0M933 675h0M1171 492h0M799 772h0M1036 608h0M1006 656h0M1118 574h0M1096 535h0M1371 312h0M1239 450h0M807 758h0M1002 614h0M1221 404h0M1195 490h0M1033 539h0M1082 581h0M1125 557h0M1109 567h0M1248 389h0M1219 371h0M1003 598h0M1012 603h0M988 639h0M1088 543h0M1134 572h0M1081 583h0M1027 613h0M1149 544h0M1037 602h0M891 702h0M1045 600h0M1051 574h0M1224 485h0M999 652h0M1096 467h0M1171 506h0M1043 603h0M1179 518h0M1262 433h0M835 743h0M972 650h0M1208 514h0M1156 550h0M1067 599h0M1190 462h0M1062 528h0M1250 387h0M1029 517h0M1125 530h0M1102 568h0M1112 568h0M1217 346h0M1188 495h0M1129 442h0M1282 379h0M1184 538h0M965 632h0M1004 598h0M1269 449h0M1199 507h0M885 702h0M1039 606h0M957 647h0M1063 544h0M1245 339h0M1102 536h0M1270 341h0M1132 467h0M1151 501h0M1348 348h0M1032 526h0M1250 363h0M1337 352h0M826 748h0M1104 585h0M1279 387h0M1096 608h0M1022 637h0M1247 368h0M1132 499h0M1249 421h0M1088 573h0M978 676h0M1090 554h0M1164 488h0M1020 606h0M998 613h0M1088 525h0M1235 408h0M977 605h0M1189 397h0M1214 369h0M918 511h0M807 773h0M1119 562h0M1223 450h0M1262 350h0M1039 634h0M1173 497h0M1171 507h0M1124 548h0M1014 616h0M1096 581h0M1175 444h0M964 680h0M1049 590h0" stroke="#2a2a55" stroke-width="3.4" stroke-linecap="round" stroke-opacity="0.22" fill="none"/><path d="M803 797 L1402 316" stroke="#10103a" stroke-width="2"/><path d="M907 710 L1228 452" stroke="#fff" stroke-width="1" stroke-dasharray="4 3" transform="translate(-2,-1)" opacity="0.75"/><path d="M907 710 L1228 452" stroke="#fff" stroke-width="1" stroke-dasharray="4 3" transform="translate(2,1)" opacity="0.75"/></svg><div class="t" style="top:793.0px;height:34px;line-height:34px;font-size:17px;color:#111;left:-223.0px;width:2000px;text-align:center;">0</div>
<div class="t" style="top:793.0px;height:34px;line-height:34px;font-size:17px;color:#111;left:-126.4px;width:2000px;text-align:center;">5</div>
<div class="t" style="top:793.0px;height:34px;line-height:34px;font-size:17px;color:#111;left:-29.7px;width:2000px;text-align:center;">10</div>
<div class="t" style="top:793.0px;height:34px;line-height:34px;font-size:17px;color:#111;left:67.0px;width:2000px;text-align:center;">15</div>
<div class="t" style="top:793.0px;height:34px;line-height:34px;font-size:17px;color:#111;left:163.6px;width:2000px;text-align:center;">20</div>
<div class="t" style="top:793.0px;height:34px;line-height:34px;font-size:17px;color:#111;left:260.2px;width:2000px;text-align:center;">25</div>
<div class="t" style="top:793.0px;height:34px;line-height:34px;font-size:17px;color:#111;left:356.9px;width:2000px;text-align:center;">30</div>
<div class="t" style="top:742.0px;height:34px;line-height:34px;font-size:17px;color:#111;left:-1224.0px;width:2000px;text-align:right;">10</div>
<div class="t" style="top:681.0px;height:34px;line-height:34px;font-size:17px;color:#111;left:-1224.0px;width:2000px;text-align:right;">15</div>
<div class="t" style="top:619.9px;height:34px;line-height:34px;font-size:17px;color:#111;left:-1224.0px;width:2000px;text-align:right;">20</div>
<div class="t" style="top:558.9px;height:34px;line-height:34px;font-size:17px;color:#111;left:-1224.0px;width:2000px;text-align:right;">25</div>
<div class="t" style="top:497.8px;height:34px;line-height:34px;font-size:17px;color:#111;left:-1224.0px;width:2000px;text-align:right;">30</div>
<div class="t" style="top:436.8px;height:34px;line-height:34px;font-size:17px;color:#111;left:-1224.0px;width:2000px;text-align:right;">35</div>
<div class="t" style="top:375.7px;height:34px;line-height:34px;font-size:17px;color:#111;left:-1224.0px;width:2000px;text-align:right;">40</div>
<div class="t" style="top:314.6px;height:34px;line-height:34px;font-size:17px;color:#111;left:-1224.0px;width:2000px;text-align:right;">45</div>
<div class="t" style="top:822.5px;height:33.0px;line-height:33.0px;font-size:16.5px;color:#111;left:63.0px;width:2000px;text-align:center;transform:scaleX(1.03);transform-origin:50% 50%;">Temperature_Outdoor_BrightCounty_Weather</div>
<div class="t" style="left:533px;top:528px;width:400px;height:30px;line-height:30px;text-align:center;font-size:16.5px;color:#111;transform:rotate(-90deg) scaleX(1.03)">Temperature_Indoor_BrightCounty_Weather</div><div class="r" style="left:1406px;top:183px;width:666px;height:683px;background:#fff;border-radius:0 26px 26px 0;"></div>
<div class="r" style="left:1406px;top:183px;width:12px;height:683px;background:linear-gradient(90deg,#bdbdbd,#f4f4f4);"></div>
<div class="r" style="left:1418px;top:184px;width:650px;height:31px;background:linear-gradient(#8f8f8f,#a9a9a9 55%);"></div>
<div class="t" style="top:174.0px;height:46px;line-height:46px;font-size:23px;color:#111;font-weight:bold;left:728.0px;width:2000px;text-align:center;transform:scaleX(1.02);transform-origin:50% 50%;">Drill Down</div>
<div class="r" style="left:2044px;top:205px;width:17px;height:2.6px;background:#333;"></div>
<div class="r" style="left:1418px;top:215px;width:650px;height:39px;background:#eeeeee;"></div>
<div class="r" style="left:1419px;top:215px;width:106px;height:39px;background:#c9c9c9;"></div>
<div class="t" style="top:212.0px;height:44px;line-height:44px;font-size:22px;color:#222;left:472.0px;width:2000px;text-align:center;transform:scaleX(0.976);transform-origin:50% 50%;">Calendar</div>
<div class="r" style="left:1528px;top:215px;width:99px;height:39px;background:#c9c9c9;"></div>
<div class="t" style="top:212.0px;height:44px;line-height:44px;font-size:22px;color:#222;left:577.5px;width:2000px;text-align:center;transform:scaleX(0.976);transform-origin:50% 50%;">Pivot ...</div>
<div class="r" style="left:1629px;top:215px;width:151px;height:39px;background:#ffffff;"></div>
<div class="t" style="top:211.0px;height:46px;line-height:46px;font-size:23px;color:#111;font-weight:bold;left:693.0px;width:2000px;text-align:center;transform:scaleX(1.0);transform-origin:50% 50%;">Bar Chart</div>
<div class="r" style="left:1782px;top:215px;width:108px;height:39px;background:#c9c9c9;"></div>
<div class="t" style="top:212.0px;height:44px;line-height:44px;font-size:22px;color:#222;left:836.0px;width:2000px;text-align:center;transform:scaleX(0.976);transform-origin:50% 50%;">Heatmap</div>
<div class="r" style="left:1893px;top:215px;width:122px;height:39px;background:#c9c9c9;"></div>
<div class="t" style="top:212.0px;height:44px;line-height:44px;font-size:22px;color:#222;left:954.0px;width:2000px;text-align:center;transform:scaleX(0.976);transform-origin:50% 50%;">Categories</div>
<div class="r" style="left:1418px;top:253px;width:650px;height:1px;background:#dddddd;"></div>
<svg class="r" style="left:1420px;top:287px" width="650" height="24" viewBox="1420 287 650 24"><defs><linearGradient id="cb2"><stop offset="0" stop-color="#2a64ab"/><stop offset="1" stop-color="#4b8cc2"/></linearGradient></defs>
<path d="M1423 298.5 L1440 290.5 V306.5 Z" fill="#3470b5"/><rect x="1443" y="291" width="40" height="15" fill="url(#cb2)"/>
<rect x="2000" y="291" width="45" height="15" fill="#cc0f28"/><path d="M2064 298.5 L2048 290.5 V306.5 Z" fill="#cc0f28"/>
<rect x="1442.5" y="306" width="1.2" height="4" fill="#2a64ab"/><rect x="2044.5" y="306" width="1.2" height="4" fill="#c6001f"/>
</svg><div class="t" style="top:306.0px;height:34px;line-height:34px;font-size:17px;color:#111;left:443.0px;width:2000px;text-align:center;">-1</div>
<div class="t" style="top:306.0px;height:34px;line-height:34px;font-size:17px;color:#111;left:1045.0px;width:2000px;text-align:center;">1</div>
<svg class="r" style="left:1418px;top:380px" width="650" height="430" viewBox="1418 380 650 430"><path d="M1466 791.0 H1995" stroke="#dedede" stroke-width="1.2"/><path d="M1466 748.0 H1995" stroke="#dedede" stroke-width="1.2"/><path d="M1466 705.0 H1995" stroke="#dedede" stroke-width="1.2"/><path d="M1466 662.0 H1995" stroke="#dedede" stroke-width="1.2"/><path d="M1466 619.0 H1995" stroke="#dedede" stroke-width="1.2"/><path d="M1466 576.0 H1995" stroke="#dedede" stroke-width="1.2"/><path d="M1466 533.0 H1995" stroke="#dedede" stroke-width="1.2"/><path d="M1466 490.0 H1995" stroke="#dedede" stroke-width="1.2"/><path d="M1466 447.0 H1995" stroke="#dedede" stroke-width="1.2"/><path d="M1466 404.0 H1995" stroke="#dedede" stroke-width="1.2"/><rect x="1477.4" y="532.6" width="67.6" height="258.4" fill="#cc1a2e" stroke="#3a3a3a" stroke-width="1"/><rect x="1564.7" y="407.1" width="68.3" height="383.9" fill="#cc1a2e" stroke="#3a3a3a" stroke-width="1"/><rect x="1652.7" y="407.1" width="67.9" height="383.9" fill="#cc1a2e" stroke="#3a3a3a" stroke-width="1"/><rect x="1741.7" y="419.5" width="67.9" height="371.5" fill="#d0253a" stroke="#3a3a3a" stroke-width="1"/><rect x="1829.0" y="407.1" width="68.5" height="383.9" fill="#d22a3c" stroke="#3a3a3a" stroke-width="1"/><rect x="1917.0" y="558.4" width="68.0" height="232.6" fill="#d84a4c" stroke="#3a3a3a" stroke-width="1"/><path d="M1476 791.0 H1987" stroke="#222" stroke-width="0"/><rect x="1476.4" y="789.8" width="69.6" height="2.4" fill="#222"/><rect x="1563.7" y="789.8" width="70.3" height="2.4" fill="#222"/><rect x="1651.7" y="789.8" width="69.9" height="2.4" fill="#222"/><rect x="1740.7" y="789.8" width="69.9" height="2.4" fill="#222"/><rect x="1828.0" y="789.8" width="70.5" height="2.4" fill="#222"/><rect x="1916.0" y="789.8" width="70.0" height="2.4" fill="#222"/></svg><div class="t" style="top:645.0px;height:34px;line-height:34px;font-size:17px;color:#fff;left:511.2px;width:2000px;text-align:center;">0.903</div>
<div class="t" style="top:501.0px;height:34px;line-height:34px;font-size:17px;color:#111;left:511.2px;width:2000px;text-align:center;">3005</div>
<div class="t" style="top:798.0px;height:34px;line-height:34px;font-size:17px;color:#111;left:509.0px;width:2000px;text-align:center;">6</div>
<div class="t" style="top:582.0px;height:34px;line-height:34px;font-size:17px;color:#fff;left:598.8px;width:2000px;text-align:center;">0.916</div>
<div class="t" style="top:375.0px;height:34px;line-height:34px;font-size:17px;color:#111;left:598.8px;width:2000px;text-align:center;">4464</div>
<div class="t" style="top:798.0px;height:34px;line-height:34px;font-size:17px;color:#111;left:597.0px;width:2000px;text-align:center;">7</div>
<div class="t" style="top:582.0px;height:34px;line-height:34px;font-size:17px;color:#fff;left:686.7px;width:2000px;text-align:center;">0.902</div>
<div class="t" style="top:375.0px;height:34px;line-height:34px;font-size:17px;color:#111;left:686.7px;width:2000px;text-align:center;">4464</div>
<div class="t" style="top:798.0px;height:34px;line-height:34px;font-size:17px;color:#111;left:686.0px;width:2000px;text-align:center;">8</div>
<div class="t" style="top:589.0px;height:34px;line-height:34px;font-size:17px;color:#fff;left:775.7px;width:2000px;text-align:center;">0.879</div>
<div class="t" style="top:387.0px;height:34px;line-height:34px;font-size:17px;color:#111;left:775.7px;width:2000px;text-align:center;">4320</div>
<div class="t" style="top:798.0px;height:34px;line-height:34px;font-size:17px;color:#111;left:773.0px;width:2000px;text-align:center;">9</div>
<div class="t" style="top:582.0px;height:34px;line-height:34px;font-size:17px;color:#fff;left:863.2px;width:2000px;text-align:center;">0.857</div>
<div class="t" style="top:375.0px;height:34px;line-height:34px;font-size:17px;color:#111;left:863.2px;width:2000px;text-align:center;">4464</div>
<div class="t" style="top:798.0px;height:34px;line-height:34px;font-size:17px;color:#111;left:862.0px;width:2000px;text-align:center;">10</div>
<div class="t" style="top:658.0px;height:34px;line-height:34px;font-size:17px;color:#fff;left:951.0px;width:2000px;text-align:center;">0.765</div>
<div class="t" style="top:526.0px;height:34px;line-height:34px;font-size:17px;color:#111;left:951.0px;width:2000px;text-align:center;">2705</div>
<div class="t" style="top:798.0px;height:34px;line-height:34px;font-size:17px;color:#111;left:950.0px;width:2000px;text-align:center;">11</div>
<div class="t" style="top:777.0px;height:34px;line-height:34px;font-size:17px;color:#111;left:32.0px;width:2000px;text-align:right;">0</div>
<div class="t" style="top:734.0px;height:34px;line-height:34px;font-size:17px;color:#111;left:32.0px;width:2000px;text-align:right;">500</div>
<div class="t" style="top:691.0px;height:34px;line-height:34px;font-size:17px;color:#111;left:32.0px;width:2000px;text-align:right;">1000</div>
<div class="t" style="top:648.0px;height:34px;line-height:34px;font-size:17px;color:#111;left:32.0px;width:2000px;text-align:right;">1500</div>
<div class="t" style="top:605.0px;height:34px;line-height:34px;font-size:17px;color:#111;left:32.0px;width:2000px;text-align:right;">2000</div>
<div class="t" style="top:562.0px;height:34px;line-height:34px;font-size:17px;color:#111;left:32.0px;width:2000px;text-align:right;">2500</div>
<div class="t" style="top:519.0px;height:34px;line-height:34px;font-size:17px;color:#111;left:32.0px;width:2000px;text-align:right;">3000</div>
<div class="t" style="top:476.0px;height:34px;line-height:34px;font-size:17px;color:#111;left:32.0px;width:2000px;text-align:right;">3500</div>
<div class="t" style="top:433.0px;height:34px;line-height:34px;font-size:17px;color:#111;left:32.0px;width:2000px;text-align:right;">4000</div>
<div class="t" style="top:390.0px;height:34px;line-height:34px;font-size:17px;color:#111;left:32.0px;width:2000px;text-align:right;">4500</div>
<div class="t" style="top:831.5px;height:33.0px;line-height:33.0px;font-size:16.5px;color:#111;left:736.0px;width:2000px;text-align:center;transform:scaleX(1.03);transform-origin:50% 50%;">DateTime [Month]</div>
<div class="t" style="left:1852px;top:570px;width:400px;height:30px;line-height:30px;text-align:center;font-size:16.5px;color:#111;transform:rotate(-90deg) scaleX(1.03)">Number of data records</div><div class="r" style="left:31px;top:870px;width:1217px;height:442px;background:#fff;border-radius:26px;"></div>
<div class="r" style="left:31px;top:873px;width:1217px;height:38px;background:#eeeeee;border-radius:26px 26px 0 0;"></div>
<div class="r" style="left:31px;top:873px;width:181px;height:38px;background:#fff;border-radius:26px 0 0 0;"></div>
<div class="r" style="left:212px;top:873px;width:225px;height:38px;background:#c9c9c9;"></div>
<div class="t" style="top:869.0px;height:46px;line-height:46px;font-size:23px;color:#111;font-weight:bold;left:49.0px;transform:scaleX(1.0);transform-origin:0 50%;">Time Series</div>
<div class="t" style="top:870.0px;height:44px;line-height:44px;font-size:22px;color:#222;left:-676.0px;width:2000px;text-align:center;transform:scaleX(0.976);transform-origin:50% 50%;">Time Series (stacked)</div>
<div class="r" style="left:31px;top:911px;width:1217px;height:1px;background:#dcdcdc;"></div>
<div class="r" style="left:77px;top:919px;width:15px;height:15px;background:#1f77b4;"></div>
<div class="t" style="top:910.5px;height:33.0px;line-height:33.0px;font-size:16.5px;color:#111;left:100.0px;transform:scaleX(1.03);transform-origin:0 50%;">Temperature_Indoor_BrightCounty_Weather</div>
<div class="r" style="left:446px;top:919px;width:15px;height:15px;background:#ff7f0e;"></div>
<div class="t" style="top:910.5px;height:33.0px;line-height:33.0px;font-size:16.5px;color:#111;left:467.0px;transform:scaleX(1.03);transform-origin:0 50%;">Temperature_Outdoor_BrightCounty_Weather</div>
<div class="r" style="left:43px;top:940px;width:1195px;height:6px;background:#d6d6d6;border-radius:3px;"></div>
<svg class="r" style="left:31px;top:946px" width="1217" height="366" viewBox="31 946 1217 366"><path d="M264 950 V1258" stroke="#e0e0e0" stroke-width="1.2"/><path d="M466 950 V1258" stroke="#e0e0e0" stroke-width="1.2"/><path d="M667 950 V1258" stroke="#e0e0e0" stroke-width="1.2"/><path d="M862 950 V1258" stroke="#e0e0e0" stroke-width="1.2"/><path d="M1063 950 V1258" stroke="#e0e0e0" stroke-width="1.2"/><path d="M76 1215.0 H83 M107 1215.0 H152 M180 1215.0 H1238" stroke="#dedede" stroke-width="1.2"/><path d="M76 1170.8 H83 M107 1170.8 H1238" stroke="#dedede" stroke-width="1.2"/><path d="M76 1126.6 H83 M107 1126.6 H1238" stroke="#dedede" stroke-width="1.2"/><path d="M76 1082.4 H83 M107 1082.4 H1238" stroke="#dedede" stroke-width="1.2"/><path d="M76 1038.2 H83 M107 1038.2 H1238" stroke="#dedede" stroke-width="1.2"/><path d="M76 994.0 H83 M107 994.0 H152 M180 994.0 H1238" stroke="#dedede" stroke-width="1.2"/><path d="M76 1258.5 H1238" stroke="#d0d0d0" stroke-width="1.5"/><path d="M128.0 1159.8H128.7V1158.1H129.3V1134.3H130.0V1121.4H130.7V1132.6H131.4V1137.1H132.0V1134.4H132.7V1150.7H133.4V1158.2H134.0V1161.5H134.7V1145.9H135.4V1150.2H136.1V1114.7H136.7V1115.6H137.4V1121.1H138.1V1124.9H138.7V1130.0H139.4V1136.0H140.1V1149.0H140.7V1151.3H141.4V1160.7H142.1V1162.8H142.8V1133.6H143.4V1119.9H144.1V1132.3H144.8V1131.0H145.4V1136.9H146.1V1215.0H146.8V1154.4H147.5V1161.4H148.1V1146.6H148.8V1150.7H149.5V1129.1H150.1V1130.1H150.8V1132.3H151.5V1136.0H152.2V1148.5H152.8V1141.7H153.5V1146.6H154.2V1146.8H154.8V1160.7H155.5V1160.9H156.2V1155.5H156.8V1146.1H157.5V1144.9H158.2V1145.1H158.9V1148.5H159.5V1155.7H160.2V1160.0H160.9V1161.0H161.5V1155.8H162.2V1151.9H162.9V1133.6H163.6V1132.5H164.2V1129.3H164.9V1142.4H165.6V1145.0H166.2V1142.6H166.9V1148.4H167.6V1159.4H168.3V1136.8H168.9V1138.3H169.6V1133.2H170.3V1119.8H170.9V1133.7H171.6V1125.8H172.3V1135.9H172.9V1215.0H173.6V1140.1H174.3V1136.3H175.0V1162.9H175.6V1157.9H176.3V1135.8H177.0V1124.3H177.6V1129.8H178.3V1134.3H179.0V1135.1H179.7V1215.0H180.3V1154.7H181.0V1158.4H181.7V1155.7H182.3V1143.3H183.0V1131.4H183.7V1119.1H184.4V1126.1H185.0V1133.9H185.7V1138.5H186.4V1215.0H187.0V1153.8H187.7V1156.0H188.4V1167.4H189.1V1163.6H189.7V1141.1H190.4V1128.2H191.1V1140.4H191.7V1149.2H192.4V1145.6H193.1V1215.0H193.7V1162.3H194.4V1166.9H195.1V1160.5H195.8V1153.8H196.4V1136.6H197.1V1129.8H197.8V1143.8H198.4V1142.2H199.1V1138.3H199.8V1215.0H200.5V1155.4H201.1V1160.3H201.8V1163.8H202.5V1158.0H203.1V1130.5H203.8V1121.9H204.5V1136.3H205.2V1137.5H205.8V1140.0H206.5V1215.0H207.2V1156.9H207.8V1159.5H208.5V1166.0H209.2V1155.9H209.8V1142.0H210.5V1138.9H211.2V1137.7H211.9V1148.1H212.5V1149.5H213.2V1215.0H213.9V1158.1H214.5V1165.4H215.2V1145.1H215.9V1142.7H216.6V1132.6H217.2V1131.3H217.9V1131.4H218.6V1125.9H219.2V1131.0H219.9V1137.1H220.6V1142.4H221.3V1141.7H221.9V1152.0H222.6V1151.0H223.3V1124.5H223.9V1108.9H224.6V1117.7H225.3V1127.8H225.9V1133.3H226.6V1215.0H227.3V1143.7H228.0V1153.3H228.6V1144.8H229.3V1142.5H230.0V1122.0H230.6V1111.8H231.3V1113.9H232.0V1123.6H232.7V1127.7H233.3V1137.2H234.0V1141.9H234.7V1148.0H235.3V1157.1H236.0V1151.7H236.7V1142.1H237.4V1134.0H238.0V1140.0H238.7V1142.9H239.4V1146.2H240.0V1215.0H240.7V1152.0H241.4V1157.5H242.1V1151.1H242.7V1146.4H243.4V1124.6H244.1V1117.5H244.7V1122.6H245.4V1128.2H246.1V1130.3H246.7V1215.0H247.4V1142.6H248.1V1155.7H248.8V1149.5H249.4V1144.5H250.1V1128.3H250.8V1116.9H251.4V1126.3H252.1V1131.7H252.8V1139.6H253.5V1138.0H254.1V1151.6H254.8V1150.3H255.5V1152.3H256.1V1146.9H256.8V1128.4H257.5V1122.4H258.2V1128.0H258.8V1131.0H259.5V1134.2H260.2V1215.0H260.8V1145.7H261.5V1147.6H262.2V1139.7H262.8V1142.1H263.5V1129.9H264.2V1121.8H264.9V1126.8H265.5V1127.1H266.2V1138.9H266.9V1215.0H267.5V1142.1H268.2V1140.4H268.9V1142.4H269.6V1139.9H270.2V1128.1H270.9V1123.9H271.6V1125.8H272.2V1130.3H272.9V1132.1H273.6V1215.0H274.3V1144.4H274.9V1147.7H275.6V1140.0H276.3V1140.9H276.9V1119.6H277.6V1104.9H278.3V1117.5H278.9V1127.9H279.6V1127.4H280.3V1132.7H281.0V1147.9H281.6V1147.1H282.3V1149.0H283.0V1144.8H283.6V1128.9H284.3V1118.3H285.0V1122.2H285.7V1130.5H286.3V1130.6H287.0V1145.4H287.7V1146.1H288.3V1148.4H289.0V1155.8H289.7V1153.5H290.4V1142.9H291.0V1141.0H291.7V1146.4H292.4V1144.7H293.0V1148.9H293.7V1215.0H294.4V1153.9H295.1V1159.7H295.7V1152.8H296.4V1152.1H297.1V1127.9H297.7V1112.4H298.4V1122.4H299.1V1124.9H299.7V1130.8H300.4V1215.0H301.1V1145.7H301.8V1145.0H302.4V1161.2H303.1V1165.0H303.8V1143.8H304.4V1135.2H305.1V1146.2H305.8V1150.4H306.5V1151.6H307.1V1157.2H307.8V1166.2H308.5V1166.1H309.1V1164.3H309.8V1161.6H310.5V1149.2H311.2V1142.4H311.8V1153.9H312.5V1153.6H313.2V1152.3H313.8V1215.0H314.5V1163.9H315.2V1164.3H315.8V1150.0H316.5V1144.5H317.2V1141.0H317.9V1133.3H318.5V1132.8H319.2V1138.6H319.9V1134.8H320.5V1142.9H321.2V1145.7H321.9V1149.4H322.6V1147.8H323.2V1153.0H323.9V1123.8H324.6V1126.3H325.2V1123.1H325.9V1135.0H326.6V1133.7H327.3V1139.5H327.9V1142.8H328.6V1146.0H329.3V1168.6H329.9V1158.6H330.6V1138.1H331.3V1126.2H331.9V1141.8H332.6V1140.8H333.3V1146.6H334.0V1149.8H334.6V1156.2H335.3V1162.7H336.0V1148.1H336.6V1153.1H337.3V1130.9H338.0V1125.8H338.7V1135.4H339.3V1132.2H340.0V1140.2H340.7V1215.0H341.3V1141.6H342.0V1147.3H342.7V1138.1H343.4V1137.2H344.0V1123.5H344.7V1112.2H345.4V1118.5H346.0V1123.5H346.7V1117.9H347.4V1130.3H348.1V1135.7H348.7V1141.0H349.4V1142.4H350.1V1137.3H350.7V1117.3H351.4V1105.5H352.1V1122.7H352.7V1113.2H353.4V1130.8H354.1V1215.0H354.8V1132.8H355.4V1139.9H356.1V1130.4H356.8V1128.0H357.4V1108.7H358.1V1092.0H358.8V1109.7H359.5V1109.9H360.1V1106.1H360.8V1215.0H361.5V1126.3H362.1V1128.3H362.8V1125.6H363.5V1123.7H364.2V1088.4H364.8V1079.8H365.5V1084.5H366.2V1092.2H366.8V1102.8H367.5V1110.7H368.2V1121.1H368.8V1124.6H369.5V1139.1H370.2V1134.3H370.9V1130.9H371.5V1116.0H372.2V1131.1H372.9V1130.0H373.5V1127.4H374.2V1215.0H374.9V1135.9H375.6V1140.2H376.2V1133.4H376.9V1127.8H377.6V1116.4H378.2V1108.3H378.9V1116.1H379.6V1113.9H380.3V1124.0H380.9V1215.0H381.6V1128.3H382.3V1131.1H382.9V1138.2H383.6V1131.9H384.3V1121.0H384.9V1111.3H385.6V1117.4H386.3V1124.3H387.0V1123.9H387.6V1215.0H388.3V1130.1H389.0V1133.7H389.6V1127.2H390.3V1126.2H391.0V1110.8H391.7V1108.3H392.3V1111.9H393.0V1111.3H393.7V1107.8H394.3V1118.3H395.0V1122.8H395.7V1124.0H396.4V1132.8H397.0V1123.8H397.7V1101.6H398.4V1092.1H399.0V1102.5H399.7V1111.5H400.4V1108.3H401.1V1215.0H401.7V1127.3H402.4V1133.0H403.1V1131.7H403.7V1123.5H404.4V1109.9H405.1V1108.6H405.7V1110.3H406.4V1114.4H407.1V1120.4H407.8V1122.5H408.4V1124.2H409.1V1130.2H409.8V1133.8H410.4V1127.9H411.1V1118.0H411.8V1106.9H412.5V1115.1H413.1V1117.8H413.8V1120.3H414.5V1215.0H415.1V1132.9H415.8V1131.9H416.5V1134.1H417.2V1125.1H417.8V1099.6H418.5V1082.1H419.2V1097.6H419.8V1097.9H420.5V1104.0H421.2V1215.0H421.8V1124.4H422.5V1135.2H423.2V1121.4H423.9V1111.1H424.5V1100.0H425.2V1093.2H425.9V1099.8H426.5V1100.9H427.2V1103.2H427.9V1215.0H428.6V1120.1H429.2V1114.5H429.9V1137.7H430.6V1128.8H431.2V1101.4H431.9V1089.9H432.6V1095.3H433.3V1107.7H433.9V1113.5H434.6V1215.0H435.3V1130.4H435.9V1133.4H436.6V1140.8H437.3V1139.8H437.9V1112.8H438.6V1110.9H439.3V1118.6H440.0V1121.5H440.6V1128.7H441.3V1215.0H442.0V1137.8H442.6V1145.2H443.3V1140.3H444.0V1136.6H444.7V1126.4H445.3V1118.1H446.0V1127.2H446.7V1127.0H447.3V1133.9H448.0V1215.0H448.7V1140.0H449.4V1142.3H450.0V1130.4H450.7V1129.0H451.4V1118.2H452.0V1107.5H452.7V1116.0H453.4V1122.1H454.1V1124.2H454.7V1215.0H455.4V1129.7H456.1V1130.7H456.7V1149.3H457.4V1145.7H458.1V1119.6H458.7V1102.9H459.4V1112.1H460.1V1125.4H460.8V1121.3H461.4V1135.9H462.1V1139.5H462.8V1144.8H463.4V1137.2H464.1V1135.1H464.8V1120.9H465.5V1113.9H466.1V1117.8H466.8V1125.9H467.5V1127.7H468.1V1215.0H468.8V1133.2H469.5V1133.3H470.2V1135.7H470.8V1139.0H471.5V1129.5H472.2V1115.0H472.8V1128.0H473.5V1129.8H474.2V1130.5H474.8V1215.0H475.5V1138.9H476.2V1140.4H476.9V1133.0H477.5V1132.1H478.2V1122.8H478.9V1114.2H479.5V1121.2H480.2V1121.9H480.9V1128.8H481.6V1126.1H482.2V1129.4H482.9V1133.7H483.6V1132.8H484.2V1135.0H484.9V1105.8H485.6V1097.0H486.3V1104.4H486.9V1108.9H487.6V1112.6H488.3V1215.0H488.9V1128.7H489.6V1136.7H490.3V1127.1H490.9V1128.8H491.6V1115.1H492.3V1115.0H493.0V1121.2H493.6V1123.6H494.3V1118.3H495.0V1121.6H495.6V1125.3H496.3V1127.5H497.0V1148.8H497.7V1138.6H498.3V1108.9H499.0V1099.3H499.7V1105.1H500.3V1114.7H501.0V1120.2H501.7V1215.0H502.4V1141.2H503.0V1143.8H503.7V1133.5H504.4V1135.8H505.0V1116.8H505.7V1111.7H506.4V1119.5H507.1V1119.9H507.7V1125.6H508.4V1123.1H509.1V1134.7H509.7V1139.0H510.4V1138.1H511.1V1135.5H511.7V1115.9H512.4V1100.2H513.1V1115.3H513.8V1121.3H514.4V1122.4H515.1V1215.0H515.8V1135.4H516.4V1136.8H517.1V1143.2H517.8V1135.8H518.5V1105.8H519.1V1098.6H519.8V1107.8H520.5V1111.6H521.1V1117.6H521.8V1215.0H522.5V1132.3H523.2V1142.3H523.8V1136.2H524.5V1128.8H525.2V1120.1H525.8V1109.4H526.5V1114.8H527.2V1115.9H527.8V1118.0H528.5V1215.0H529.2V1125.5H529.9V1134.1H530.5V1135.9H531.2V1132.3H531.9V1112.3H532.5V1101.3H533.2V1109.8H533.9V1113.0H534.6V1119.9H535.2V1215.0H535.9V1134.1H536.6V1134.7H537.2V1150.8H537.9V1142.9H538.6V1132.2H539.3V1115.8H539.9V1123.1H540.6V1123.6H541.3V1127.7H541.9V1215.0H542.6V1145.6H543.3V1151.2H543.9V1134.4H544.6V1135.9H545.3V1105.8H546.0V1094.2H546.6V1105.5H547.3V1118.7H548.0V1112.4H548.6V1215.0H549.3V1136.7H550.0V1131.8H550.7V1147.0H551.3V1147.7H552.0V1116.7H552.7V1109.9H553.3V1124.0H554.0V1133.4H554.7V1129.4H555.4V1215.0H556.0V1143.6H556.7V1146.8H557.4V1138.7H558.0V1143.4H558.7V1124.6H559.4V1114.2H560.1V1123.7H560.7V1125.4H561.4V1137.5H562.1V1133.6H562.7V1136.4H563.4V1143.0H564.1V1149.2H564.7V1145.2H565.4V1131.2H566.1V1126.6H566.8V1129.8H567.4V1133.3H568.1V1140.6H568.8V1215.0H569.4V1141.8H570.1V1146.3H570.8V1144.7H571.5V1143.6H572.1V1119.6H572.8V1112.5H573.5V1121.8H574.1V1127.7H574.8V1131.3H575.5V1215.0H576.2V1141.2H576.8V1145.2H577.5V1144.5H578.2V1145.1H578.8V1127.1H579.5V1122.9H580.2V1121.7H580.8V1128.2H581.5V1134.3H582.2V1215.0H582.9V1145.8H583.5V1142.5H584.2V1142.2H584.9V1132.6H585.5V1115.0H586.2V1101.2H586.9V1110.6H587.6V1119.4H588.2V1123.0H588.9V1128.5H589.6V1143.8H590.2V1143.3H590.9V1137.9H591.6V1139.2H592.3V1125.6H592.9V1107.5H593.6V1115.7H594.3V1126.8H594.9V1127.2H595.6V1215.0H596.3V1135.8H596.9V1140.5H597.6V1150.4H598.3V1152.7H599.0V1131.6H599.6V1120.6H600.3V1129.3H601.0V1131.1H601.6V1137.8H602.3V1146.0H603.0V1149.0H603.7V1157.4H604.3V1151.4H605.0V1152.2H605.7V1135.0H606.3V1128.2H607.0V1132.0H607.7V1144.1H608.4V1142.5H609.0V1215.0H609.7V1151.8H610.4V1145.7H611.0V1155.5H611.7V1147.4H612.4V1135.3H613.1V1126.2H613.7V1135.4H614.4V1136.6H615.1V1141.9H615.7V1145.6H616.4V1157.4H617.1V1152.7H617.7V1146.6H618.4V1144.8H619.1V1131.6H619.8V1120.9H620.4V1128.6H621.1V1137.7H621.8V1138.2H622.4V1135.5H623.1V1139.1H623.8V1148.1H624.5V1150.3H625.1V1143.7H625.8V1111.2H626.5V1105.7H627.1V1115.0H627.8V1123.2H628.5V1122.9H629.2V1215.0H629.8V1142.0H630.5V1143.3H631.2V1156.3H631.8V1151.0H632.5V1135.4H633.2V1127.1H633.8V1136.2H634.5V1137.9H635.2V1143.3H635.9V1145.2H636.5V1149.5H637.2V1154.4H637.9V1148.6H638.5V1140.8H639.2V1121.9H639.9V1121.8H640.6V1121.6H641.2V1133.7H641.9V1130.4H642.6V1142.0H643.2V1145.6H643.9V1151.2H644.6V1150.3H645.3V1147.7H645.9V1138.0H646.6V1131.1H647.3V1134.3H647.9V1131.9H648.6V1138.3H649.3V1215.0H649.9V1149.7H650.6V1146.8H651.3V1157.4H652.0V1155.8H652.6V1136.5H653.3V1132.9H654.0V1136.1H654.6V1137.0H655.3V1141.8H656.0V1150.4H656.7V1156.1H657.3V1159.1H658.0V1146.7H658.7V1140.2H659.3V1124.4H660.0V1116.5H660.7V1128.5H661.4V1127.0H662.0V1130.9H662.7V1137.2H663.4V1143.6H664.0V1148.4H664.7V1162.7H665.4V1156.6H666.1V1132.6H666.7V1119.7H667.4V1127.1H668.1V1130.8H668.7V1135.4H669.4V1215.0H670.1V1160.8H670.7V1164.7H671.4V1163.7H672.1V1155.0H672.8V1139.8H673.4V1130.9H674.1V1139.1H674.8V1142.3H675.4V1150.1H676.1V1151.5H676.8V1157.6H677.5V1158.4H678.1V1147.8H678.8V1142.7H679.5V1114.4H680.1V1099.3H680.8V1111.6H681.5V1120.8H682.2V1120.0H682.8V1134.3H683.5V1137.2H684.2V1143.5H684.8V1150.6H685.5V1153.3H686.2V1131.8H686.8V1117.2H687.5V1128.4H688.2V1133.3H688.9V1132.4H689.5V1215.0H690.2V1146.1H690.9V1154.1H691.5V1141.3H692.2V1138.2H692.9V1104.4H693.6V1095.2H694.2V1105.7H694.9V1114.8H695.6V1112.7H696.2V1215.0H696.9V1139.2H697.6V1135.3H698.3V1149.9H698.9V1140.2H699.6V1117.7H700.3V1097.7H700.9V1115.9H701.6V1118.6H702.3V1125.3H702.9V1215.0H703.6V1147.9H704.3V1147.1H705.0V1137.1H705.6V1131.5H706.3V1124.8H707.0V1116.3H707.6V1118.2H708.3V1120.9H709.0V1122.1H709.7V1215.0H710.3V1137.0H711.0V1128.8H711.7V1150.0H712.3V1145.2H713.0V1129.0H713.7V1112.1H714.4V1125.6H715.0V1131.2H715.7V1139.9H716.4V1215.0H717.0V1144.4H717.7V1148.4H718.4V1146.2H719.1V1143.6H719.7V1129.5H720.4V1121.9H721.1V1137.2H721.7V1132.8H722.4V1140.7H723.1V1139.3H723.7V1147.3H724.4V1147.0H725.1V1144.8H725.8V1141.3H726.4V1116.3H727.1V1106.4H727.8V1116.8H728.4V1116.5H729.1V1116.4H729.8V1129.7H730.5V1135.4H731.1V1144.0H731.8V1144.1H732.5V1140.5H733.1V1125.4H733.8V1114.1H734.5V1126.1H735.2V1131.9H735.8V1125.0H736.5V1133.7H737.2V1146.7H737.8V1141.0H738.5V1156.6H739.2V1145.8H739.8V1135.2H740.5V1131.8H741.2V1138.0H741.9V1137.9H742.5V1138.3H743.2V1147.1H743.9V1157.7H744.5V1154.0H745.2V1152.9H745.9V1149.9H746.6V1125.3H747.2V1116.5H747.9V1123.0H748.6V1133.0H749.2V1138.4H749.9V1215.0H750.6V1147.7H751.3V1154.5H751.9V1161.2H752.6V1157.4H753.3V1148.4H753.9V1141.5H754.6V1142.9H755.3V1142.8H755.9V1147.5H756.6V1153.4H757.3V1158.1H758.0V1161.6H758.6V1148.6H759.3V1146.7H760.0V1136.4H760.6V1126.9H761.3V1135.8H762.0V1137.0H762.7V1137.9H763.3V1141.2H764.0V1143.9H764.7V1145.0H765.3V1144.6H766.0V1144.4H766.7V1133.6H767.4V1128.9H768.0V1134.3H768.7V1142.7H769.4V1135.7H770.0V1142.7H770.7V1143.6H771.4V1148.9H772.1V1164.1H772.7V1162.6H773.4V1145.3H774.1V1136.7H774.7V1145.8H775.4V1144.8H776.1V1150.6H776.7V1215.0H777.4V1162.1H778.1V1163.4H778.8V1156.4H779.4V1152.0H780.1V1130.3H780.8V1120.6H781.4V1127.7H782.1V1139.4H782.8V1144.8H783.5V1215.0H784.1V1146.2H784.8V1151.2H785.5V1143.7H786.1V1142.4H786.8V1123.9H787.5V1119.7H788.2V1121.0H788.8V1126.3H789.5V1132.1H790.2V1141.4H790.8V1146.4H791.5V1140.4H792.2V1163.0H792.8V1163.0H793.5V1140.3H794.2V1130.6H794.9V1145.0H795.5V1142.5H796.2V1145.3H796.9V1215.0H797.5V1151.7H798.2V1163.3H798.9V1149.4H799.6V1150.3H800.2V1138.8H800.9V1124.6H801.6V1137.0H802.2V1135.4H802.9V1141.7H803.6V1215.0H804.3V1153.5H804.9V1153.6H805.6V1155.6H806.3V1152.2H806.9V1127.1H807.6V1119.2H808.3V1125.9H808.9V1133.1H809.6V1134.9H810.3V1215.0H811.0V1153.2H811.6V1151.9H812.3V1149.5H813.0V1151.4H813.6V1123.1H814.3V1114.2H815.0V1127.0H815.7V1129.3H816.3V1136.4H817.0V1215.0H817.7V1146.4H818.3V1155.1H819.0V1153.3H819.7V1157.3H820.4V1141.9H821.0V1133.2H821.7V1139.3H822.4V1140.2H823.0V1146.8H823.7V1215.0H824.4V1152.7H825.1V1155.2H825.7V1164.8H826.4V1158.6H827.1V1137.7H827.7V1132.1H828.4V1134.1H829.1V1139.0H829.7V1146.2H830.4V1215.0H831.1V1152.7H831.8V1159.2H832.4V1150.5H833.1V1150.0H833.8V1140.9H834.4V1130.5H835.1V1137.5H835.8V1138.6H836.5V1150.6H837.1V1148.3H837.8V1151.1H838.5V1158.3H839.1V1160.3H839.8V1164.8H840.5V1154.1H841.2V1142.4H841.8V1155.9H842.5V1157.4H843.2V1153.4H843.8V1215.0H844.5V1164.3H845.2V1165.2H845.8V1164.8H846.5V1166.4H847.2V1154.2H847.9V1143.3H848.5V1156.5H849.2V1150.4H849.9V1154.4H850.5V1165.6H851.2V1163.8H851.9V1169.3H852.6V1146.5H853.2V1144.7H853.9V1136.1H854.6V1131.0H855.2V1135.5H855.9V1138.6H856.6V1135.2H857.3V1215.0H857.9V1149.4H858.6V1152.0H859.3V1160.9H859.9V1164.4H860.6V1149.0H861.3V1141.9H861.9V1150.4H862.6V1152.1H863.3V1149.6H864.0V1215.0H864.6V1160.6H865.3V1165.9H866.0V1156.0H866.6V1155.5H867.3V1143.9H868.0V1143.9H868.7V1144.0H869.3V1153.4H870.0V1148.8H870.7V1154.4H871.3V1153.2H872.0V1161.2H872.7V1175.4H873.4V1164.0H874.0V1155.2H874.7V1148.0H875.4V1156.3H876.0V1154.2H876.7V1157.6H877.4V1166.0H878.1V1173.8H878.7V1172.6H879.4V1169.1H880.1V1156.7H880.7V1143.9H881.4V1130.8H882.1V1143.6H882.7V1149.8H883.4V1147.2H884.1V1159.4H884.8V1160.7H885.4V1163.5H886.1V1154.7H886.8V1153.2H887.4V1139.3H888.1V1134.8H888.8V1135.4H889.5V1138.7H890.1V1139.0H890.8V1142.3H891.5V1150.8H892.1V1153.5H892.8V1158.7H893.5V1160.9H894.2V1144.4H894.8V1144.2H895.5V1154.2H896.2V1149.9H896.8V1154.7H897.5V1158.2H898.2V1156.3H898.8V1158.9H899.5V1163.1H900.2V1156.4H900.9V1156.2H901.5V1152.5H902.2V1157.6H902.9V1153.4H903.5V1156.7H904.2V1161.3H904.9V1163.7H905.6V1168.9H906.2V1167.1H906.9V1159.7H907.6V1145.1H908.2V1135.4H908.9V1148.9H909.6V1150.3H910.3V1146.9H910.9V1215.0H911.6V1160.1H912.3V1166.8H912.9V1165.8H913.6V1170.2H914.3V1145.6H914.9V1146.2H915.6V1143.9H916.3V1152.0H917.0V1148.9H917.6V1157.1H918.3V1165.5H919.0V1161.5H919.6V1166.2H920.3V1166.3H921.0V1164.9H921.7V1160.5H922.3V1165.7H923.0V1164.3H923.7V1164.0H924.3V1169.8H925.0V1167.4H925.7V1167.1H926.4V1171.9H927.0V1165.6H927.7V1162.4H928.4V1155.7H929.0V1159.1H929.7V1154.9H930.4V1164.4H931.1V1163.0H931.7V1169.5H932.4V1175.5H933.1V1164.5H933.7V1166.7H934.4V1152.5H935.1V1153.4H935.7V1158.1H936.4V1153.3H937.1V1158.9H937.8V1160.5H938.4V1166.7H939.1V1162.7H939.8V1152.4H940.4V1150.5H941.1V1142.7H941.8V1139.7H942.5V1146.0H943.1V1145.0H943.8V1147.0H944.5V1150.4H945.1V1153.0H945.8V1153.7H946.5V1162.8H947.2V1164.8H947.8V1149.2H948.5V1135.6H949.2V1150.3H949.8V1148.8H950.5V1155.1H951.2V1155.5H951.8V1162.4H952.5V1165.1H953.2V1154.8H953.9V1157.2H954.5V1152.1H955.2V1144.8H955.9V1147.0H956.5V1149.1H957.2V1150.0H957.9V1152.1H958.6V1150.9H959.2V1157.7H959.9V1152.3H960.6V1151.6H961.2V1137.1H961.9V1129.6H962.6V1130.5H963.3V1143.2H963.9V1140.0H964.6V1146.6H965.3V1150.3H965.9V1156.2H966.6V1161.9H967.3V1161.0H967.9V1159.3H968.6V1154.5H969.3V1156.4H970.0V1159.5H970.6V1151.5H971.3V1156.5H972.0V1161.6H972.6V1170.7H973.3V1166.5H974.0V1159.6H974.7V1145.3H975.3V1136.8H976.0V1146.7H976.7V1146.8H977.3V1156.1H978.0V1156.5H978.7V1166.0H979.4V1165.1H980.0V1152.5H980.7V1154.3H981.4V1143.4H982.0V1133.2H982.7V1146.2H983.4V1145.1H984.1V1145.4H984.7V1215.0H985.4V1152.7H986.1V1146.8H986.7V1160.2H987.4V1157.4H988.1V1146.5H988.7V1136.7H989.4V1142.3H990.1V1151.1H990.8V1144.1H991.4V1150.5H992.1V1159.7H992.8V1162.2H993.4V1165.2H994.1V1157.4H994.8V1150.4H995.5V1149.2H996.1V1153.8H996.8V1153.5H997.5V1153.2H998.1V1158.8H998.8V1165.4H999.5V1160.5H1000.2V1154.4H1000.8V1149.5H1001.5V1142.8H1002.2V1140.6H1002.8V1140.7H1003.5V1139.9H1004.2V1149.2H1004.8V1147.5H1005.5V1151.4H1006.2V1145.4H1006.9V1151.8H1007.5V1147.5H1008.2V1137.8H1008.9V1139.1H1009.5V1136.8H1010.2V1144.4H1010.9V1143.6H1011.6V1144.0H1012.2V1152.6H1012.9V1153.8H1013.6V1162.6H1014.2V1160.3H1014.9V1151.9H1015.6V1145.9H1016.3V1146.0H1016.9V1149.7H1017.6V1147.6H1018.3V1157.9H1018.9V1160.6H1019.6V1156.3H1020.3V1146.5H1020.9V1152.4H1021.6V1140.7H1022.3V1137.5H1023.0V1134.5H1023.6V1140.4H1024.3V1143.0H1025.0V1146.2H1025.6V1146.8H1026.3V1154.3H1027.0V1151.1H1027.7V1146.3H1028.3V1139.9H1029.0V1129.7H1029.7V1131.1H1030.3V1136.3H1031.0V1139.5H1031.7V1145.8H1032.4V1144.5H1033.0V1149.7H1033.7V1161.4H1034.4V1162.4H1035.0V1148.1H1035.7V1140.2H1036.4V1148.8H1037.1V1157.0H1037.7V1153.9H1038.4V1156.9H1039.1V1164.5H1039.7V1165.1H1040.4V1155.7H1041.1V1150.4H1041.7V1143.3H1042.4V1130.9H1043.1V1138.0H1043.8V1144.0H1044.4V1142.7H1045.1V1150.3H1045.8V1154.1H1046.4V1157.3H1047.1V1157.1H1047.8V1150.1H1048.5V1149.0H1049.1V1140.7H1049.8V1146.8H1050.5V1141.9H1051.1V1151.9H1051.8V1160.8H1052.5V1159.5H1053.2V1162.0H1053.8V1156.1H1054.5V1157.0H1055.2V1156.8H1055.8V1143.5H1056.5V1149.8H1057.2V1149.5H1057.8V1150.0H1058.5V1156.2H1059.2V1151.9H1059.9V1153.6H1060.5V1166.8H1061.2V1156.5H1061.9V1149.2H1062.5V1140.0H1063.2V1141.0H1063.9V1151.1H1064.6V1152.6H1065.2V1154.3H1065.9V1163.5H1066.6V1163.0H1067.2V1176.1H1067.9V1173.9H1068.6V1164.2H1069.3V1158.8H1069.9V1159.7H1070.6V1164.4H1071.3V1163.2H1071.9V1215.0H1072.6V1170.5H1073.3V1174.9H1073.9V1168.6H1074.6V1168.6H1075.3V1164.3H1076.0V1161.1H1076.6V1164.1H1077.3V1154.9H1078.0V1164.8H1078.6V1166.9H1079.3V1160.3H1080.0V1165.5H1080.7V1178.3H1081.3V1172.2H1082.0V1161.1H1082.7V1154.7H1083.3V1161.9H1084.0V1165.9H1084.7V1167.1H1085.4V1215.0H1086.0V1174.3H1086.7V1184.7H1087.4V1172.6H1088.0V1173.4H1088.7V1153.7H1089.4V1149.8H1090.1V1155.7H1090.7V1159.1H1091.4V1162.4H1092.1V1215.0H1092.7V1166.7H1093.4V1175.9H1094.1V1171.5H1094.7V1169.7H1095.4V1155.9H1096.1V1151.4H1096.8V1153.3H1097.4V1161.0H1098.1V1163.2H1098.8V1215.0H1099.4V1175.9H1100.1V1174.7H1100.8V1151.4H1101.5V1152.6H1102.1V1136.5H1102.8V1130.3H1103.5V1143.4H1104.1V1146.7H1104.8V1150.2H1105.5V1153.5H1106.2V1151.2H1106.8V1145.1H1107.5V1160.4H1108.2V1164.8H1108.8V1150.4H1109.5V1135.0H1110.2V1147.5H1110.8V1148.7H1111.5V1151.9H1112.2V1157.6H1112.9V1159.6H1113.5V1161.3H1114.2V1169.0H1114.9V1165.1H1115.5V1164.0H1116.2V1154.9H1116.9V1152.9H1117.6V1160.7H1118.2V1163.3H1118.9V1169.0H1119.6V1168.5H1120.2V1179.3H1120.9V1166.0H1121.6V1169.1H1122.3V1163.2H1122.9V1160.9H1123.6V1162.5H1124.3V1161.6H1124.9V1169.4H1125.6V1166.7H1126.3V1173.0H1126.9V1169.2H1127.6V1173.7H1128.3V1178.8H1129.0V1164.6H1129.6V1164.0H1130.3V1165.4H1131.0V1168.4H1131.6V1173.4H1132.3V1172.5H1133.0V1167.1H1133.7V1167.8H1134.3V1182.9H1135.0V1175.7H1135.7V1172.8H1136.3V1160.2H1137.0V1168.3H1137.7V1168.4H1138.4V1171.9H1139.0V1179.2H1139.7V1174.7H1140.4V1180.8H1141.0V1172.0H1141.7V1179.9H1142.4V1164.6H1143.1V1159.1H1143.7V1168.4H1144.4V1170.6H1145.1V1164.4H1145.7V1175.9H1146.4V1172.8H1147.1V1174.2H1147.7V1176.1H1148.4V1172.3H1149.1V1165.8H1149.8V1163.2H1150.4V1164.6H1151.1V1168.5H1151.8V1167.4H1152.4V1172.3H1153.1V1177.9H1153.8V1177.2H1154.5V1165.3H1155.1V1165.3H1155.8V1147.1H1156.5V1149.8H1157.1V1154.6H1157.8V1156.7H1158.5V1158.9H1159.2V1160.5H1159.8V1164.5H1160.5V1163.1H1161.2V1181.4H1161.8V1182.1H1162.5V1178.8H1163.2V1175.0H1163.8V1179.6H1164.5V1179.5H1165.2V1185.5H1165.9V1183.0H1166.5V1184.4H1167.2V1188.7H1167.9V1169.1H1168.5V1170.0H1169.2V1161.1H1169.9V1151.1H1170.6V1156.4H1171.2V1164.1H1171.9V1162.5H1172.6V1163.9H1173.2V1167.7H1173.9V1166.2H1174.6V1176.5H1175.3V1180.1H1175.9V1167.0H1176.6V1159.9H1177.3V1171.2H1177.9V1165.1H1178.6V1171.5H1179.3V1170.5H1179.9V1178.6H1180.6V1177.0H1181.3V1184.9H1182.0V1183.2H1182.6V1179.5H1183.3V1172.6H1184.0V1177.1H1184.6V1177.4H1185.3V1179.8H1186.0V1182.3H1186.7V1184.0H1187.3V1185.8" fill="none" stroke="#ff7f0e" stroke-width="1.6"/><path d="M128.0 1125.7H128.7V1117.0H129.3V1079.7H130.0V1050.7H130.7V1088.0H131.4V1074.9H132.0V1085.8H132.7V1104.5H133.4V1120.2H134.0V1129.6H134.7V1113.6H135.4V1111.2H136.1V1082.4H136.7V1068.2H137.4V1084.7H138.1V1082.9H138.7V1085.9H139.4V1099.2H140.1V1103.3H140.7V1113.1H141.4V1119.9H142.1V1115.3H142.8V1085.0H143.4V1071.3H144.1V1091.3H144.8V1084.2H145.4V1090.7H146.1V1099.3H146.8V1116.7H147.5V1125.0H148.1V1114.4H148.8V1113.3H149.5V1073.7H150.1V1042.0H150.8V1075.0H151.5V1065.3H152.2V1077.6H152.8V1093.0H153.5V1105.5H154.2V1118.1H154.8V1128.8H155.5V1125.4H156.2V1098.2H156.8V1077.6H157.5V1098.1H158.2V1091.5H158.9V1101.1H159.5V1109.5H160.2V1123.3H160.9V1136.2H161.5V1124.7H162.2V1125.3H162.9V1094.2H163.6V1073.4H164.2V1101.7H164.9V1092.7H165.6V1101.0H166.2V1114.9H166.9V1123.5H167.6V1127.8H168.3V1127.8H168.9V1125.9H169.6V1091.1H170.3V1064.2H170.9V1092.0H171.6V1088.0H172.3V1088.8H172.9V1101.5H173.6V1124.4H174.3V1125.2H175.0V1118.4H175.6V1113.7H176.3V1082.1H177.0V1054.9H177.6V1080.7H178.3V1079.1H179.0V1081.4H179.7V1099.5H180.3V1114.2H181.0V1117.7H181.7V1129.0H182.3V1119.7H183.0V1086.7H183.7V1065.3H184.4V1088.7H185.0V1086.9H185.7V1093.4H186.4V1110.2H187.0V1126.0H187.7V1125.1H188.4V1115.6H189.1V1119.5H189.7V1093.8H190.4V1072.2H191.1V1097.3H191.7V1095.3H192.4V1098.2H193.1V1107.8H193.7V1115.0H194.4V1116.6H195.1V1125.9H195.8V1123.1H196.4V1087.2H197.1V1065.9H197.8V1092.2H198.4V1083.4H199.1V1094.1H199.8V1109.0H200.5V1122.6H201.1V1126.8H201.8V1130.4H202.5V1128.7H203.1V1106.0H203.8V1090.6H204.5V1107.3H205.2V1101.0H205.8V1112.9H206.5V1115.3H207.2V1121.7H207.8V1133.7H208.5V1127.1H209.2V1126.4H209.8V1104.6H210.5V1097.6H211.2V1111.9H211.9V1106.4H212.5V1114.2H213.2V1121.1H213.9V1123.0H214.5V1127.8H215.2V1115.9H215.9V1121.4H216.6V1099.6H217.2V1088.1H217.9V1103.0H218.6V1100.1H219.2V1100.5H219.9V1114.3H220.6V1121.8H221.3V1123.3H221.9V1127.6H222.6V1124.4H223.3V1101.8H223.9V1086.1H224.6V1103.7H225.3V1108.2H225.9V1109.4H226.6V1115.1H227.3V1122.0H228.0V1126.9H228.6V1123.9H229.3V1122.0H230.0V1104.2H230.6V1084.0H231.3V1106.8H232.0V1096.4H232.7V1103.2H233.3V1111.1H234.0V1123.0H234.7V1123.4H235.3V1129.1H236.0V1124.5H236.7V1102.2H237.4V1087.8H238.0V1104.1H238.7V1105.1H239.4V1106.2H240.0V1115.1H240.7V1123.2H241.4V1124.9H242.1V1130.3H242.7V1124.8H243.4V1110.3H244.1V1093.6H244.7V1110.3H245.4V1105.6H246.1V1109.9H246.7V1112.9H247.4V1130.0H248.1V1130.7H248.8V1142.6H249.4V1139.6H250.1V1126.7H250.8V1122.2H251.4V1129.6H252.1V1127.6H252.8V1128.6H253.5V1133.6H254.1V1142.8H254.8V1144.1H255.5V1137.6H256.1V1129.3H256.8V1110.5H257.5V1096.4H258.2V1112.1H258.8V1109.7H259.5V1113.6H260.2V1120.7H260.8V1127.1H261.5V1123.0H262.2V1125.4H262.8V1119.4H263.5V1094.1H264.2V1070.1H264.9V1101.4H265.5V1095.1H266.2V1098.8H266.9V1112.6H267.5V1121.7H268.2V1126.3H268.9V1121.6H269.6V1116.9H270.2V1074.9H270.9V1044.1H271.6V1078.1H272.2V1071.9H272.9V1080.8H273.6V1098.2H274.3V1110.7H274.9V1121.4H275.6V1137.7H276.3V1131.2H276.9V1093.8H277.6V1067.7H278.3V1099.0H278.9V1091.5H279.6V1097.9H280.3V1114.5H281.0V1126.1H281.6V1138.6H282.3V1131.4H283.0V1124.9H283.6V1084.5H284.3V1047.8H285.0V1086.0H285.7V1077.3H286.3V1090.3H287.0V1106.8H287.7V1130.2H288.3V1132.2H289.0V1128.6H289.7V1120.8H290.4V1100.8H291.0V1087.6H291.7V1102.3H292.4V1099.8H293.0V1097.3H293.7V1109.6H294.4V1120.6H295.1V1121.6H295.7V1120.1H296.4V1118.9H297.1V1099.7H297.7V1080.2H298.4V1101.9H299.1V1093.2H299.7V1098.6H300.4V1109.6H301.1V1120.8H301.8V1126.9H302.4V1120.1H303.1V1112.0H303.8V1074.8H304.4V1043.6H305.1V1082.1H305.8V1071.4H306.5V1076.2H307.1V1096.4H307.8V1110.5H308.5V1112.4H309.1V1123.6H309.8V1114.7H310.5V1082.3H311.2V1054.8H311.8V1089.0H312.5V1075.5H313.2V1086.7H313.8V1104.9H314.5V1118.5H315.2V1123.8H315.8V1121.2H316.5V1111.9H317.2V1081.0H317.9V1058.9H318.5V1089.7H319.2V1078.6H319.9V1087.5H320.5V1100.8H321.2V1113.8H321.9V1124.7H322.6V1114.4H323.2V1109.5H323.9V1093.2H324.6V1077.4H325.2V1092.7H325.9V1087.3H326.6V1091.9H327.3V1103.5H327.9V1110.7H328.6V1113.7H329.3V1123.1H329.9V1115.2H330.6V1104.3H331.3V1099.9H331.9V1108.9H332.6V1102.7H333.3V1109.5H334.0V1109.5H334.6V1119.0H335.3V1125.0H336.0V1116.9H336.6V1112.8H337.3V1103.2H338.0V1097.2H338.7V1101.9H339.3V1101.2H340.0V1100.8H340.7V1105.4H341.3V1112.0H342.0V1112.6H342.7V1108.3H343.4V1107.6H344.0V1094.1H344.7V1081.7H345.4V1098.2H346.0V1093.9H346.7V1094.3H347.4V1105.2H348.1V1105.9H348.7V1106.5H349.4V1113.0H350.1V1114.4H350.7V1098.4H351.4V1098.7H352.1V1101.3H352.7V1109.0H353.4V1103.8H354.1V1106.8H354.8V1120.2H355.4V1114.3H356.1V1115.7H356.8V1108.5H357.4V1075.1H358.1V1054.3H358.8V1079.5H359.5V1077.6H360.1V1082.2H360.8V1097.7H361.5V1109.7H362.1V1117.6H362.8V1118.0H363.5V1116.0H364.2V1092.9H364.8V1078.1H365.5V1093.0H366.2V1088.8H366.8V1093.4H367.5V1109.1H368.2V1109.8H368.8V1121.8H369.5V1119.5H370.2V1115.9H370.9V1097.7H371.5V1079.9H372.2V1097.8H372.9V1084.7H373.5V1096.9H374.2V1105.7H374.9V1119.1H375.6V1121.7H376.2V1110.6H376.9V1099.2H377.6V1062.9H378.2V1035.9H378.9V1065.5H379.6V1061.1H380.3V1067.7H380.9V1083.8H381.6V1102.8H382.3V1107.1H382.9V1106.6H383.6V1096.2H384.3V1048.7H384.9V1012.0H385.6V1055.9H386.3V1046.0H387.0V1056.2H387.6V1077.0H388.3V1093.3H389.0V1105.5H389.6V1116.4H390.3V1107.7H391.0V1060.7H391.7V1022.8H392.3V1062.9H393.0V1054.9H393.7V1065.9H394.3V1088.6H395.0V1108.4H395.7V1120.4H396.4V1116.1H397.0V1104.8H397.7V1085.5H398.4V1060.4H399.0V1086.1H399.7V1078.8H400.4V1085.0H401.1V1096.7H401.7V1104.5H402.4V1113.5H403.1V1104.9H403.7V1091.3H404.4V1057.0H405.1V1019.5H405.7V1060.6H406.4V1049.0H407.1V1059.2H407.8V1079.9H408.4V1098.6H409.1V1102.4H409.8V1106.8H410.4V1097.7H411.1V1071.3H411.8V1059.9H412.5V1079.3H413.1V1075.9H413.8V1076.1H414.5V1092.9H415.1V1106.9H415.8V1106.4H416.5V1120.9H417.2V1115.1H417.8V1080.9H418.5V1063.6H419.2V1089.6H419.8V1081.4H420.5V1086.9H421.2V1102.7H421.8V1114.5H422.5V1123.5H423.2V1099.8H423.9V1089.2H424.5V1065.0H425.2V1048.9H425.9V1066.1H426.5V1062.1H427.2V1071.9H427.9V1083.9H428.6V1087.1H429.2V1096.5H429.9V1111.6H430.6V1102.8H431.2V1069.0H431.9V1043.4H432.6V1078.7H433.3V1069.0H433.9V1074.7H434.6V1091.0H435.3V1102.3H435.9V1109.3H436.6V1108.0H437.3V1091.2H437.9V1031.2H438.6V1000.6H439.3V1039.2H440.0V1025.2H440.6V1040.0H441.3V1070.6H442.0V1098.4H442.6V1109.5H443.3V1118.6H444.0V1112.8H444.7V1082.4H445.3V1060.6H446.0V1084.6H446.7V1080.0H447.3V1084.3H448.0V1104.5H448.7V1116.4H449.4V1117.2H450.0V1099.5H450.7V1090.9H451.4V1044.6H452.0V1012.6H452.7V1053.1H453.4V1037.5H454.1V1052.6H454.7V1076.8H455.4V1093.0H456.1V1105.9H456.7V1115.9H457.4V1111.6H458.1V1070.8H458.7V1047.1H459.4V1078.4H460.1V1072.2H460.8V1076.3H461.4V1093.9H462.1V1106.5H462.8V1117.6H463.4V1119.9H464.1V1108.2H464.8V1087.9H465.5V1072.3H466.1V1087.6H466.8V1086.7H467.5V1090.0H468.1V1098.1H468.8V1111.0H469.5V1116.1H470.2V1111.3H470.8V1108.1H471.5V1083.2H472.2V1065.7H472.8V1084.9H473.5V1081.1H474.2V1086.4H474.8V1101.2H475.5V1107.6H476.2V1115.0H476.9V1116.8H477.5V1110.2H478.2V1086.4H478.9V1067.4H479.5V1089.7H480.2V1087.0H480.9V1092.0H481.6V1098.3H482.2V1114.0H482.9V1122.0H483.6V1112.6H484.2V1104.1H484.9V1085.9H485.6V1065.2H486.3V1085.8H486.9V1084.9H487.6V1085.5H488.3V1099.3H488.9V1104.7H489.6V1110.8H490.3V1108.6H490.9V1096.9H491.6V1058.7H492.3V1029.3H493.0V1060.9H493.6V1059.8H494.3V1062.6H495.0V1085.4H495.6V1095.6H496.3V1110.9H497.0V1103.2H497.7V1100.0H498.3V1070.4H499.0V1048.2H499.7V1074.4H500.3V1072.4H501.0V1076.4H501.7V1082.6H502.4V1099.0H503.0V1106.7H503.7V1123.4H504.4V1116.5H505.0V1083.8H505.7V1052.6H506.4V1082.3H507.1V1079.2H507.7V1085.6H508.4V1102.3H509.1V1120.2H509.7V1125.5H510.4V1105.9H511.1V1097.5H511.7V1059.9H512.4V1025.4H513.1V1060.3H513.8V1056.0H514.4V1060.4H515.1V1085.7H515.8V1099.1H516.4V1107.1H517.1V1112.0H517.8V1111.8H518.5V1089.4H519.1V1073.3H519.8V1089.3H520.5V1085.2H521.1V1091.5H521.8V1098.7H522.5V1109.6H523.2V1116.1H523.8V1119.1H524.5V1119.1H525.2V1095.4H525.8V1074.2H526.5V1098.0H527.2V1086.9H527.8V1096.4H528.5V1110.3H529.2V1114.8H529.9V1121.0H530.5V1121.4H531.2V1112.2H531.9V1084.5H532.5V1065.1H533.2V1085.7H533.9V1080.8H534.6V1086.8H535.2V1104.0H535.9V1113.0H536.6V1117.9H537.2V1114.4H537.9V1111.1H538.6V1084.9H539.3V1068.6H539.9V1091.8H540.6V1085.5H541.3V1090.4H541.9V1102.0H542.6V1104.2H543.3V1113.4H543.9V1119.5H544.6V1110.8H545.3V1085.1H546.0V1057.2H546.6V1079.7H547.3V1077.3H548.0V1078.1H548.6V1099.5H549.3V1108.8H550.0V1114.4H550.7V1128.9H551.3V1111.6H552.0V1078.7H552.7V1048.7H553.3V1083.8H554.0V1074.0H554.7V1083.4H555.4V1101.9H556.0V1109.4H556.7V1124.9H557.4V1114.3H558.0V1111.9H558.7V1070.7H559.4V1037.8H560.1V1070.9H560.7V1063.1H561.4V1071.5H562.1V1092.6H562.7V1107.8H563.4V1115.8H564.1V1121.9H564.7V1116.8H565.4V1098.9H566.1V1082.3H566.8V1099.4H567.4V1093.5H568.1V1101.9H568.8V1108.6H569.4V1124.1H570.1V1121.0H570.8V1113.8H571.5V1104.3H572.1V1086.2H572.8V1066.4H573.5V1085.2H574.1V1078.6H574.8V1090.7H575.5V1099.6H576.2V1108.1H576.8V1110.3H577.5V1121.1H578.2V1111.2H578.8V1080.7H579.5V1054.0H580.2V1085.9H580.8V1073.3H581.5V1081.2H582.2V1097.8H582.9V1111.1H583.5V1118.8H584.2V1117.6H584.9V1104.8H585.5V1087.9H586.2V1072.8H586.9V1089.5H587.6V1083.5H588.2V1087.9H588.9V1099.5H589.6V1112.4H590.2V1113.3H590.9V1122.3H591.6V1114.8H592.3V1099.3H592.9V1079.0H593.6V1099.8H594.3V1097.8H594.9V1103.6H595.6V1111.2H596.3V1117.6H596.9V1121.4H597.6V1108.7H598.3V1097.9H599.0V1076.9H599.6V1060.8H600.3V1083.4H601.0V1078.6H601.6V1085.1H602.3V1094.7H603.0V1099.8H603.7V1105.5H604.3V1124.5H605.0V1119.2H605.7V1085.5H606.3V1055.3H607.0V1090.5H607.7V1084.8H608.4V1089.3H609.0V1103.5H609.7V1121.6H610.4V1126.1H611.0V1126.6H611.7V1123.2H612.4V1101.6H613.1V1094.7H613.7V1108.3H614.4V1102.5H615.1V1110.3H615.7V1112.3H616.4V1118.2H617.1V1129.2H617.7V1129.7H618.4V1122.4H619.1V1088.7H619.8V1059.4H620.4V1091.5H621.1V1082.6H621.8V1090.4H622.4V1103.4H623.1V1118.2H623.8V1126.0H624.5V1113.8H625.1V1109.1H625.8V1074.8H626.5V1054.3H627.1V1080.9H627.8V1074.2H628.5V1080.2H629.2V1095.4H629.8V1105.5H630.5V1116.0H631.2V1125.5H631.8V1117.4H632.5V1090.8H633.2V1058.7H633.8V1087.8H634.5V1080.3H635.2V1090.9H635.9V1102.6H636.5V1118.9H637.2V1124.7H637.9V1120.5H638.5V1120.9H639.2V1095.7H639.9V1080.4H640.6V1100.0H641.2V1093.0H641.9V1098.9H642.6V1105.2H643.2V1114.7H643.9V1119.9H644.6V1117.3H645.3V1115.2H645.9V1092.3H646.6V1079.9H647.3V1094.5H647.9V1087.2H648.6V1094.9H649.3V1101.8H649.9V1109.9H650.6V1117.2H651.3V1122.7H652.0V1108.8H652.6V1091.7H653.3V1073.9H654.0V1098.8H654.6V1090.6H655.3V1094.3H656.0V1109.4H656.7V1115.0H657.3V1119.1H658.0V1119.3H658.7V1118.2H659.3V1098.2H660.0V1083.9H660.7V1102.6H661.4V1097.7H662.0V1100.4H662.7V1112.2H663.4V1121.3H664.0V1123.0H664.7V1112.1H665.4V1109.7H666.1V1074.6H666.7V1045.3H667.4V1078.6H668.1V1071.8H668.7V1080.4H669.4V1091.6H670.1V1102.6H670.7V1115.8H671.4V1142.0H672.1V1134.0H672.8V1108.9H673.4V1069.8H674.1V1104.9H674.8V1097.4H675.4V1104.0H676.1V1120.7H676.8V1132.6H677.5V1135.9H678.1V1118.7H678.8V1116.7H679.5V1092.3H680.1V1073.5H680.8V1097.1H681.5V1088.2H682.2V1091.8H682.8V1105.4H683.5V1116.5H684.2V1124.4H684.8V1117.5H685.5V1115.8H686.2V1090.8H686.8V1080.9H687.5V1097.2H688.2V1094.8H688.9V1094.7H689.5V1103.3H690.2V1113.8H690.9V1119.0H691.5V1128.6H692.2V1121.9H692.9V1098.9H693.6V1079.1H694.2V1101.4H694.9V1098.7H695.6V1098.2H696.2V1110.7H696.9V1121.1H697.6V1123.7H698.3V1117.1H698.9V1112.6H699.6V1086.7H700.3V1056.8H700.9V1085.7H701.6V1079.7H702.3V1084.5H702.9V1103.9H703.6V1118.7H704.3V1121.3H705.0V1117.3H705.6V1112.4H706.3V1081.8H707.0V1059.9H707.6V1087.6H708.3V1081.6H709.0V1091.7H709.7V1098.7H710.3V1112.8H711.0V1119.3H711.7V1120.2H712.3V1115.7H713.0V1090.0H713.7V1067.6H714.4V1095.1H715.0V1085.7H715.7V1096.9H716.4V1108.2H717.0V1119.4H717.7V1129.3H718.4V1129.4H719.1V1124.3H719.7V1093.3H720.4V1071.3H721.1V1089.4H721.7V1091.7H722.4V1091.8H723.1V1109.4H723.7V1122.0H724.4V1125.5H725.1V1124.0H725.8V1117.6H726.4V1089.7H727.1V1072.3H727.8V1095.5H728.4V1089.9H729.1V1098.8H729.8V1105.2H730.5V1118.8H731.1V1121.8H731.8V1127.1H732.5V1121.2H733.1V1095.9H733.8V1082.2H734.5V1101.5H735.2V1098.0H735.8V1099.1H736.5V1111.9H737.2V1120.6H737.8V1125.5H738.5V1119.4H739.2V1121.6H739.8V1100.4H740.5V1077.7H741.2V1099.5H741.9V1103.3H742.5V1099.9H743.2V1110.4H743.9V1119.9H744.5V1125.7H745.2V1122.3H745.9V1118.7H746.6V1107.4H747.2V1092.7H747.9V1112.0H748.6V1099.2H749.2V1107.0H749.9V1114.3H750.6V1122.6H751.3V1124.2H751.9V1123.0H752.6V1117.1H753.3V1085.6H753.9V1056.1H754.6V1086.5H755.3V1080.1H755.9V1085.4H756.6V1098.8H757.3V1119.6H758.0V1119.8H758.6V1133.0H759.3V1125.4H760.0V1091.0H760.6V1064.7H761.3V1088.9H762.0V1087.4H762.7V1094.5H763.3V1113.5H764.0V1126.8H764.7V1128.9H765.3V1121.4H766.0V1123.9H766.7V1105.6H767.4V1083.6H768.0V1102.5H768.7V1102.0H769.4V1103.5H770.0V1112.5H770.7V1121.2H771.4V1125.1H772.1V1137.2H772.7V1124.4H773.4V1107.5H774.1V1083.8H774.7V1106.2H775.4V1099.5H776.1V1105.9H776.7V1122.5H777.4V1131.0H778.1V1137.6H778.8V1133.6H779.4V1129.2H780.1V1106.5H780.8V1082.3H781.4V1110.2H782.1V1099.0H782.8V1103.5H783.5V1117.7H784.1V1125.0H784.8V1132.1H785.5V1117.0H786.1V1120.3H786.8V1104.8H787.5V1084.3H788.2V1102.2H788.8V1099.0H789.5V1103.8H790.2V1110.3H790.8V1117.4H791.5V1122.5H792.2V1129.1H792.8V1124.8H793.5V1098.2H794.2V1072.7H794.9V1095.9H795.5V1091.0H796.2V1098.7H796.9V1114.9H797.5V1124.3H798.2V1135.7H798.9V1129.2H799.6V1118.0H800.2V1094.4H800.9V1080.4H801.6V1097.5H802.2V1096.1H802.9V1099.9H803.6V1112.1H804.3V1123.2H804.9V1123.4H805.6V1138.9H806.3V1132.5H806.9V1126.0H807.6V1109.6H808.3V1124.0H808.9V1120.4H809.6V1123.4H810.3V1133.9H811.0V1135.4H811.6V1135.9H812.3V1128.4H813.0V1128.0H813.6V1109.5H814.3V1092.2H815.0V1109.6H815.7V1108.8H816.3V1111.5H817.0V1123.2H817.7V1127.3H818.3V1133.3H819.0V1125.5H819.7V1115.6H820.4V1087.5H821.0V1064.9H821.7V1093.6H822.4V1082.2H823.0V1091.9H823.7V1100.9H824.4V1117.8H825.1V1124.4H825.7V1122.5H826.4V1116.2H827.1V1089.5H827.7V1066.9H828.4V1096.5H829.1V1090.5H829.7V1096.8H830.4V1110.8H831.1V1116.7H831.8V1127.8H832.4V1133.0H833.1V1128.7H833.8V1117.3H834.4V1099.1H835.1V1117.6H835.8V1118.0H836.5V1117.1H837.1V1126.9H837.8V1131.7H838.5V1135.9H839.1V1118.3H839.8V1118.5H840.5V1089.9H841.2V1073.7H841.8V1098.5H842.5V1089.5H843.2V1096.5H843.8V1106.4H844.5V1118.6H845.2V1120.4H845.8V1142.1H846.5V1134.1H847.2V1112.4H847.9V1086.1H848.5V1110.9H849.2V1112.4H849.9V1106.9H850.5V1127.5H851.2V1139.1H851.9V1140.0H852.6V1129.1H853.2V1122.7H853.9V1096.2H854.6V1072.0H855.2V1097.1H855.9V1092.6H856.6V1094.1H857.3V1111.1H857.9V1121.7H858.6V1125.8H859.3V1124.3H859.9V1121.4H860.6V1099.3H861.3V1079.8H861.9V1094.6H862.6V1098.0H863.3V1103.5H864.0V1115.2H864.6V1123.4H865.3V1125.8H866.0V1128.3H866.6V1135.4H867.3V1113.7H868.0V1104.0H868.7V1115.8H869.3V1114.5H870.0V1115.8H870.7V1123.4H871.3V1126.5H872.0V1132.8H872.7V1134.8H873.4V1136.3H874.0V1100.2H874.7V1090.2H875.4V1105.3H876.0V1100.0H876.7V1105.9H877.4V1123.1H878.1V1133.5H878.7V1133.4H879.4V1127.5H880.1V1127.0H880.7V1108.2H881.4V1091.4H882.1V1112.9H882.7V1106.3H883.4V1108.8H884.1V1118.6H884.8V1126.0H885.4V1127.9H886.1V1137.6H886.8V1129.8H887.4V1105.6H888.1V1081.9H888.8V1103.2H889.5V1095.8H890.1V1105.3H890.8V1119.9H891.5V1131.8H892.1V1142.7H892.8V1132.1H893.5V1128.3H894.2V1114.6H894.8V1102.0H895.5V1119.3H896.2V1114.5H896.8V1118.9H897.5V1127.8H898.2V1125.8H898.8V1130.1H899.5V1142.7H900.2V1132.6H900.9V1111.4H901.5V1088.5H902.2V1107.0H902.9V1106.4H903.5V1106.8H904.2V1120.6H904.9V1131.4H905.6V1136.0H906.2V1132.6H906.9V1122.6H907.6V1095.3H908.2V1074.4H908.9V1098.8H909.6V1087.2H910.3V1098.2H910.9V1114.0H911.6V1122.2H912.3V1131.2H912.9V1127.1H913.6V1121.3H914.3V1102.0H914.9V1089.0H915.6V1100.1H916.3V1102.2H917.0V1103.1H917.6V1117.9H918.3V1121.5H919.0V1127.6H919.6V1141.4H920.3V1134.3H921.0V1114.8H921.7V1085.7H922.3V1115.1H923.0V1112.4H923.7V1112.9H924.3V1129.0H925.0V1143.5H925.7V1147.2H926.4V1128.4H927.0V1127.0H927.7V1112.4H928.4V1103.9H929.0V1116.4H929.7V1115.2H930.4V1113.3H931.1V1117.5H931.7V1130.6H932.4V1132.8H933.1V1135.0H933.7V1131.5H934.4V1100.1H935.1V1084.8H935.7V1104.6H936.4V1094.9H937.1V1103.2H937.8V1115.5H938.4V1126.8H939.1V1130.5H939.8V1132.9H940.4V1128.4H941.1V1109.7H941.8V1092.6H942.5V1111.8H943.1V1110.2H943.8V1110.2H944.5V1116.9H945.1V1128.1H945.8V1128.8H946.5V1135.7H947.2V1134.9H947.8V1113.7H948.5V1101.7H949.2V1121.2H949.8V1113.3H950.5V1117.0H951.2V1128.7H951.8V1133.8H952.5V1139.0H953.2V1133.2H953.9V1134.0H954.5V1112.6H955.2V1102.6H955.9V1114.9H956.5V1116.0H957.2V1114.7H957.9V1120.7H958.6V1129.8H959.2V1131.6H959.9V1125.2H960.6V1117.7H961.2V1109.1H961.9V1097.8H962.6V1108.0H963.3V1106.1H963.9V1113.0H964.6V1112.2H965.3V1119.0H965.9V1120.5H966.6V1140.8H967.3V1139.2H967.9V1115.6H968.6V1101.6H969.3V1115.8H970.0V1110.7H970.6V1112.7H971.3V1125.4H972.0V1134.2H972.6V1136.4H973.3V1126.0H974.0V1122.9H974.7V1104.5H975.3V1086.3H976.0V1105.3H976.7V1097.9H977.3V1105.9H978.0V1114.8H978.7V1124.1H979.4V1132.5H980.0V1135.7H980.7V1131.2H981.4V1127.5H982.0V1117.1H982.7V1125.4H983.4V1123.1H984.1V1121.0H984.7V1127.4H985.4V1136.8H986.1V1138.2H986.7V1122.8H987.4V1118.1H988.1V1103.7H988.7V1085.9H989.4V1109.4H990.1V1096.7H990.8V1104.4H991.4V1113.7H992.1V1122.1H992.8V1125.8H993.4V1128.7H994.1V1127.2H994.8V1107.6H995.5V1088.9H996.1V1107.1H996.8V1102.0H997.5V1109.5H998.1V1120.1H998.8V1125.2H999.5V1130.8H1000.2V1125.6H1000.8V1123.0H1001.5V1105.3H1002.2V1092.8H1002.8V1105.5H1003.5V1103.0H1004.2V1104.2H1004.8V1116.9H1005.5V1125.9H1006.2V1129.5H1006.9V1135.1H1007.5V1128.6H1008.2V1113.2H1008.9V1091.5H1009.5V1121.1H1010.2V1106.4H1010.9V1116.1H1011.6V1119.7H1012.2V1131.2H1012.9V1139.4H1013.6V1138.3H1014.2V1133.2H1014.9V1109.5H1015.6V1093.8H1016.3V1114.9H1016.9V1109.1H1017.6V1112.1H1018.3V1130.9H1018.9V1132.0H1019.6V1136.8H1020.3V1124.6H1020.9V1124.6H1021.6V1102.5H1022.3V1083.5H1023.0V1108.6H1023.6V1101.4H1024.3V1105.2H1025.0V1117.6H1025.6V1126.9H1026.3V1130.1H1027.0V1136.7H1027.7V1128.9H1028.3V1110.7H1029.0V1091.0H1029.7V1119.6H1030.3V1109.4H1031.0V1114.1H1031.7V1126.9H1032.4V1130.8H1033.0V1140.4H1033.7V1131.1H1034.4V1130.2H1035.0V1107.1H1035.7V1097.7H1036.4V1105.8H1037.1V1101.2H1037.7V1114.6H1038.4V1116.3H1039.1V1126.9H1039.7V1132.9H1040.4V1132.2H1041.1V1127.2H1041.7V1114.4H1042.4V1094.9H1043.1V1111.6H1043.8V1110.9H1044.4V1110.5H1045.1V1118.2H1045.8V1131.6H1046.4V1129.0H1047.1V1140.6H1047.8V1137.1H1048.5V1134.9H1049.1V1125.3H1049.8V1127.7H1050.5V1131.1H1051.1V1129.0H1051.8V1132.3H1052.5V1138.4H1053.2V1136.1H1053.8V1125.3H1054.5V1121.5H1055.2V1102.7H1055.8V1088.7H1056.5V1101.1H1057.2V1096.0H1057.8V1104.9H1058.5V1110.8H1059.2V1119.7H1059.9V1126.7H1060.5V1130.7H1061.2V1131.4H1061.9V1116.1H1062.5V1097.8H1063.2V1115.0H1063.9V1111.8H1064.6V1118.5H1065.2V1120.6H1065.9V1132.8H1066.6V1134.1H1067.2V1139.2H1067.9V1137.8H1068.6V1127.5H1069.3V1124.6H1069.9V1125.8H1070.6V1127.4H1071.3V1128.5H1071.9V1129.8H1072.6V1142.0H1073.3V1132.8H1073.9V1140.2H1074.6V1136.5H1075.3V1122.5H1076.0V1105.5H1076.6V1124.3H1077.3V1119.0H1078.0V1125.1H1078.6V1133.6H1079.3V1139.0H1080.0V1142.5H1080.7V1146.9H1081.3V1137.2H1082.0V1136.8H1082.7V1124.8H1083.3V1141.1H1084.0V1130.6H1084.7V1136.9H1085.4V1139.1H1086.0V1144.3H1086.7V1146.0H1087.4V1144.8H1088.0V1138.8H1088.7V1122.5H1089.4V1106.0H1090.1V1125.9H1090.7V1120.3H1091.4V1124.6H1092.1V1137.9H1092.7V1141.2H1093.4V1147.4H1094.1V1143.4H1094.7V1142.3H1095.4V1122.9H1096.1V1113.9H1096.8V1133.2H1097.4V1118.8H1098.1V1128.0H1098.8V1136.2H1099.4V1138.5H1100.1V1142.0H1100.8V1137.0H1101.5V1135.9H1102.1V1129.2H1102.8V1115.7H1103.5V1127.0H1104.1V1125.5H1104.8V1127.4H1105.5V1134.0H1106.2V1139.6H1106.8V1140.0H1107.5V1134.7H1108.2V1133.4H1108.8V1119.1H1109.5V1103.0H1110.2V1111.3H1110.8V1114.7H1111.5V1119.0H1112.2V1125.5H1112.9V1132.1H1113.5V1133.6H1114.2V1154.5H1114.9V1148.4H1115.5V1143.7H1116.2V1132.7H1116.9V1136.4H1117.6V1135.4H1118.2V1138.5H1118.9V1137.6H1119.6V1148.3H1120.2V1151.5H1120.9V1154.4H1121.6V1153.0H1122.3V1141.7H1122.9V1129.7H1123.6V1142.8H1124.3V1140.9H1124.9V1141.3H1125.6V1149.6H1126.3V1156.2H1126.9V1155.4H1127.6V1140.9H1128.3V1147.2H1129.0V1120.6H1129.6V1109.5H1130.3V1125.2H1131.0V1116.5H1131.6V1124.1H1132.3V1137.0H1133.0V1138.9H1133.7V1140.6H1134.3V1138.0H1135.0V1140.9H1135.7V1120.2H1136.3V1110.4H1137.0V1123.6H1137.7V1119.4H1138.4V1123.8H1139.0V1130.4H1139.7V1134.6H1140.4V1140.4H1141.0V1143.2H1141.7V1142.7H1142.4V1125.1H1143.1V1110.0H1143.7V1127.2H1144.4V1124.8H1145.1V1125.9H1145.7V1133.0H1146.4V1140.3H1147.1V1145.8H1147.7V1147.6H1148.4V1139.1H1149.1V1133.7H1149.8V1129.2H1150.4V1133.3H1151.1V1135.1H1151.8V1137.1H1152.4V1146.1H1153.1V1148.2H1153.8V1146.2H1154.5V1141.0H1155.1V1134.0H1155.8V1121.3H1156.5V1112.7H1157.1V1119.6H1157.8V1118.1H1158.5V1124.2H1159.2V1124.8H1159.8V1136.1H1160.5V1137.4H1161.2V1150.8H1161.8V1146.9H1162.5V1130.7H1163.2V1124.9H1163.8V1135.9H1164.5V1130.8H1165.2V1129.0H1165.9V1145.2H1166.5V1153.3H1167.2V1155.1H1167.9V1153.4H1168.5V1151.6H1169.2V1131.2H1169.9V1119.2H1170.6V1138.2H1171.2V1132.9H1171.9V1136.5H1172.6V1143.9H1173.2V1152.9H1173.9V1152.4H1174.6V1133.6H1175.3V1129.6H1175.9V1111.2H1176.6V1097.6H1177.3V1111.5H1177.9V1108.7H1178.6V1115.3H1179.3V1121.3H1179.9V1120.9H1180.6V1130.6H1181.3V1144.1H1182.0V1139.7H1182.6V1132.2H1183.3V1117.8H1184.0V1130.1H1184.6V1134.7H1185.3V1133.8H1186.0V1140.8H1186.7V1145.4H1187.3V1148.0" fill="none" stroke="#1f77b4" stroke-width="1.7"/></svg><div class="t" style="top:1199.5px;height:34px;line-height:34px;font-size:17px;color:#1f77b4;left:-1896.0px;width:2000px;text-align:right;">0</div>
<div class="t" style="top:1155.3px;height:34px;line-height:34px;font-size:17px;color:#1f77b4;left:-1896.0px;width:2000px;text-align:right;">10</div>
<div class="t" style="top:1111.1px;height:34px;line-height:34px;font-size:17px;color:#1f77b4;left:-1896.0px;width:2000px;text-align:right;">20</div>
<div class="t" style="top:1066.9px;height:34px;line-height:34px;font-size:17px;color:#1f77b4;left:-1896.0px;width:2000px;text-align:right;">30</div>
<div class="t" style="top:1022.7px;height:34px;line-height:34px;font-size:17px;color:#1f77b4;left:-1896.0px;width:2000px;text-align:right;">40</div>
<div class="t" style="top:978.5px;height:34px;line-height:34px;font-size:17px;color:#1f77b4;left:-1896.0px;width:2000px;text-align:right;">50</div>
<div class="t" style="top:978.5px;height:34px;line-height:34px;font-size:17px;color:#ff7f0e;left:-1824.0px;width:2000px;text-align:right;">50</div>
<div class="t" style="top:1200.0px;height:34px;line-height:34px;font-size:17px;color:#ff7f0e;left:-1830.0px;width:2000px;text-align:right;">0</div>
<div class="t" style="top:1256.0px;height:34px;line-height:34px;font-size:17px;color:#111;left:-736.0px;width:2000px;text-align:center;">07.2014</div>
<div class="t" style="top:1256.0px;height:34px;line-height:34px;font-size:17px;color:#111;left:-534.0px;width:2000px;text-align:center;">08.2014</div>
<div class="t" style="top:1256.0px;height:34px;line-height:34px;font-size:17px;color:#111;left:-333.0px;width:2000px;text-align:center;">09.2014</div>
<div class="t" style="top:1256.0px;height:34px;line-height:34px;font-size:17px;color:#111;left:-138.0px;width:2000px;text-align:center;">10.2014</div>
<div class="t" style="top:1256.0px;height:34px;line-height:34px;font-size:17px;color:#111;left:63.0px;width:2000px;text-align:center;">11.2014</div>
<div class="t" style="top:1282.5px;height:33.0px;line-height:33.0px;font-size:16.5px;color:#111;left:-342.0px;width:2000px;text-align:center;transform:scaleX(1.03);transform-origin:50% 50%;">DateTime</div>
<div class="t" style="left:-89px;top:1102px;width:300px;height:30px;line-height:30px;text-align:center;font-size:16.5px;color:#111;transform:rotate(-90deg) scaleX(1.03)">Individual Scales</div><div class="r" style="left:1252px;top:870px;width:818px;height:442px;background:#fff;border-radius:0 26px 26px 0;"></div>
<div class="r" style="left:1252px;top:871px;width:816px;height:33px;background:linear-gradient(#8f8f8f,#a9a9a9 55%);"></div>
<div class="t" style="top:863.0px;height:46px;line-height:46px;font-size:23px;color:#111;font-weight:bold;left:644.0px;width:2000px;text-align:center;transform:scaleX(1.0);transform-origin:50% 50%;">Table</div>
<div class="r" style="left:2045px;top:892px;width:17px;height:2.6px;background:#333;"></div>
<div class="t" style="top:901.0px;height:44px;line-height:44px;font-size:22px;color:#111;font-weight:bold;left:1257.0px;transform:scaleX(1.0);transform-origin:0 50%;">Focus data records</div>
<div class="r" style="left:1254px;top:946px;width:4px;height:8px;background:#9a9a9a;border-radius:2px;"></div>
<div class="t" style="top:945.5px;height:33.0px;line-height:33.0px;font-size:16.5px;color:#111;left:653.0px;width:2000px;text-align:center;transform:scaleX(1.04);transform-origin:50% 50%;">Shown: 102 of 209 data attributes</div>
<div class="r" style="left:1271px;top:983px;width:789px;height:30px;background:#e4e4e4;"></div>
<svg class="r" style="left:1260px;top:975px" width="810" height="320" viewBox="1260 975 810 320"><rect x="1271" y="983" width="789" height="30" fill="#e4e4e4"/><path d="M1271.5 983 V1282.1" stroke="#9a9a9a" stroke-width="1"/><path d="M1428.5 983 V1282.1" stroke="#9a9a9a" stroke-width="1"/><path d="M1585.5 983 V1282.1" stroke="#9a9a9a" stroke-width="1"/><path d="M1742.5 983 V1282.1" stroke="#9a9a9a" stroke-width="1"/><path d="M1899.5 983 V1282.1" stroke="#9a9a9a" stroke-width="1"/><path d="M2056.5 983 V1282.1" stroke="#9a9a9a" stroke-width="1"/><path d="M1271 983.5 H2060" stroke="#bdbdbd" stroke-width="1"/><path d="M1271 1013.0 H2060" stroke="#9a9a9a" stroke-width="1.2"/><path d="M1271 1042.9 H2060" stroke="#9a9a9a" stroke-width="1.2"/><path d="M1271 1072.8 H2060" stroke="#9a9a9a" stroke-width="1.2"/><path d="M1271 1102.7 H2060" stroke="#9a9a9a" stroke-width="1.2"/><path d="M1271 1132.6 H2060" stroke="#9a9a9a" stroke-width="1.2"/><path d="M1271 1162.5 H2060" stroke="#9a9a9a" stroke-width="1.2"/><path d="M1271 1192.4 H2060" stroke="#9a9a9a" stroke-width="1.2"/><path d="M1271 1222.3 H2060" stroke="#9a9a9a" stroke-width="1.2"/><path d="M1271 1252.2 H2060" stroke="#9a9a9a" stroke-width="1.2"/><path d="M1271 1282.1 H2060" stroke="#9a9a9a" stroke-width="1.2"/><path d="M1271 1282.1 H2060" stroke="#8a8a8a" stroke-width="2"/></svg><div class="t" style="top:981.5px;height:33.0px;line-height:33.0px;font-size:16.5px;color:#111;left:341.0px;width:2000px;text-align:center;transform:scaleX(1.03);transform-origin:50% 50%;">DateTime</div>
<div class="t" style="top:983.0px;height:30px;line-height:30px;font-size:15px;color:#111;left:1430.0px;transform:scaleX(0.76);transform-origin:0 50%;">Temperature...nty_Weather</div>
<div class="t" style="top:983.0px;height:30px;line-height:30px;font-size:15px;color:#111;left:1587.0px;transform:scaleX(0.76);transform-origin:0 50%;">Temperatur...nty_Weather</div>
<div class="t" style="top:983.0px;height:30px;line-height:30px;font-size:15px;color:#111;left:1744.0px;transform:scaleX(0.76);transform-origin:0 50%;">Power_Gene...od_PV_Model</div>
<div class="t" style="top:983.0px;height:30px;line-height:30px;font-size:15px;color:#111;left:1901.0px;transform:scaleX(0.76);transform-origin:0 50%;">Power_Gener...ty_PV_Model</div>
<div class="t" style="top:983.0px;height:30px;line-height:30px;font-size:15px;color:#111;left:2058.0px;transform:scaleX(0.76);transform-origin:0 50%;">P</div>
<div class="t" style="top:1012.5px;height:33.0px;line-height:33.0px;font-size:16.5px;color:#2a2a55;left:1274.0px;transform:scaleX(1.0);transform-origin:0 50%;">10.06.2014 03:10:00</div>
<div class="t" style="top:1012.5px;height:33.0px;line-height:33.0px;font-size:16.5px;color:#2a2a55;left:-440.4px;width:2000px;text-align:right;transform:scaleX(1.02);transform-origin:100% 50%;">15</div>
<div class="t" style="top:1012.5px;height:33.0px;line-height:33.0px;font-size:16.5px;color:#2a2a55;left:1559.6px;transform:scaleX(1.02);transform-origin:0 50%;">.1</div>
<div class="t" style="top:1012.5px;height:33.0px;line-height:33.0px;font-size:16.5px;color:#2a2a55;left:-283.8px;width:2000px;text-align:right;transform:scaleX(1.02);transform-origin:100% 50%;">23</div>
<div class="t" style="top:1012.5px;height:33.0px;line-height:33.0px;font-size:16.5px;color:#2a2a55;left:1716.2px;transform:scaleX(1.02);transform-origin:0 50%;">.23</div>
<div class="t" style="top:1012.5px;height:33.0px;line-height:33.0px;font-size:16.5px;color:#2a2a55;left:-164.8px;width:2000px;text-align:right;transform:scaleX(1.02);transform-origin:100% 50%;">-0</div>
<div class="t" style="top:1012.5px;height:33.0px;line-height:33.0px;font-size:16.5px;color:#2a2a55;left:1835.2px;transform:scaleX(1.02);transform-origin:0 50%;">.004031</div>
<div class="t" style="top:1012.5px;height:33.0px;line-height:33.0px;font-size:16.5px;color:#2a2a55;left:-7.8px;width:2000px;text-align:right;transform:scaleX(1.02);transform-origin:100% 50%;">-0</div>
<div class="t" style="top:1012.5px;height:33.0px;line-height:33.0px;font-size:16.5px;color:#2a2a55;left:1992.2px;transform:scaleX(1.02);transform-origin:0 50%;">.005003</div>
<div class="t" style="top:1042.4px;height:33.0px;line-height:33.0px;font-size:16.5px;color:#2a2a55;left:1274.0px;transform:scaleX(1.0);transform-origin:0 50%;">10.06.2014 03:20:00</div>
<div class="t" style="top:1042.4px;height:33.0px;line-height:33.0px;font-size:16.5px;color:#2a2a55;left:-440.4px;width:2000px;text-align:right;transform:scaleX(1.02);transform-origin:100% 50%;">15</div>
<div class="t" style="top:1042.4px;height:33.0px;line-height:33.0px;font-size:16.5px;color:#2a2a55;left:-283.8px;width:2000px;text-align:right;transform:scaleX(1.02);transform-origin:100% 50%;">22</div>
<div class="t" style="top:1042.4px;height:33.0px;line-height:33.0px;font-size:16.5px;color:#2a2a55;left:1716.2px;transform:scaleX(1.02);transform-origin:0 50%;">.97</div>
<div class="t" style="top:1042.4px;height:33.0px;line-height:33.0px;font-size:16.5px;color:#2a2a55;left:-164.8px;width:2000px;text-align:right;transform:scaleX(1.02);transform-origin:100% 50%;">-0</div>
<div class="t" style="top:1042.4px;height:33.0px;line-height:33.0px;font-size:16.5px;color:#2a2a55;left:1835.2px;transform:scaleX(1.02);transform-origin:0 50%;">.004031</div>
<div class="t" style="top:1042.4px;height:33.0px;line-height:33.0px;font-size:16.5px;color:#2a2a55;left:-7.8px;width:2000px;text-align:right;transform:scaleX(1.02);transform-origin:100% 50%;">-0</div>
<div class="t" style="top:1042.4px;height:33.0px;line-height:33.0px;font-size:16.5px;color:#2a2a55;left:1992.2px;transform:scaleX(1.02);transform-origin:0 50%;">.005003</div>
<div class="t" style="top:1072.2px;height:33.0px;line-height:33.0px;font-size:16.5px;color:#2a2a55;left:1274.0px;transform:scaleX(1.0);transform-origin:0 50%;">10.06.2014 03:30:00</div>
<div class="t" style="top:1072.2px;height:33.0px;line-height:33.0px;font-size:16.5px;color:#2a2a55;left:-440.4px;width:2000px;text-align:right;transform:scaleX(1.02);transform-origin:100% 50%;">14</div>
<div class="t" style="top:1072.2px;height:33.0px;line-height:33.0px;font-size:16.5px;color:#2a2a55;left:1559.6px;transform:scaleX(1.02);transform-origin:0 50%;">.9</div>
<div class="t" style="top:1072.2px;height:33.0px;line-height:33.0px;font-size:16.5px;color:#2a2a55;left:-283.8px;width:2000px;text-align:right;transform:scaleX(1.02);transform-origin:100% 50%;">22</div>
<div class="t" style="top:1072.2px;height:33.0px;line-height:33.0px;font-size:16.5px;color:#2a2a55;left:1716.2px;transform:scaleX(1.02);transform-origin:0 50%;">.9</div>
<div class="t" style="top:1072.2px;height:33.0px;line-height:33.0px;font-size:16.5px;color:#2a2a55;left:-164.8px;width:2000px;text-align:right;transform:scaleX(1.02);transform-origin:100% 50%;">-0</div>
<div class="t" style="top:1072.2px;height:33.0px;line-height:33.0px;font-size:16.5px;color:#2a2a55;left:1835.2px;transform:scaleX(1.02);transform-origin:0 50%;">.004031</div>
<div class="t" style="top:1072.2px;height:33.0px;line-height:33.0px;font-size:16.5px;color:#2a2a55;left:-7.8px;width:2000px;text-align:right;transform:scaleX(1.02);transform-origin:100% 50%;">-0</div>
<div class="t" style="top:1072.2px;height:33.0px;line-height:33.0px;font-size:16.5px;color:#2a2a55;left:1992.2px;transform:scaleX(1.02);transform-origin:0 50%;">.005003</div>
<div class="t" style="top:1102.2px;height:33.0px;line-height:33.0px;font-size:16.5px;color:#2a2a55;left:1274.0px;transform:scaleX(1.0);transform-origin:0 50%;">10.06.2014 03:40:00</div>
<div class="t" style="top:1102.2px;height:33.0px;line-height:33.0px;font-size:16.5px;color:#2a2a55;left:-440.4px;width:2000px;text-align:right;transform:scaleX(1.02);transform-origin:100% 50%;">14</div>
<div class="t" style="top:1102.2px;height:33.0px;line-height:33.0px;font-size:16.5px;color:#2a2a55;left:1559.6px;transform:scaleX(1.02);transform-origin:0 50%;">.73</div>
<div class="t" style="top:1102.2px;height:33.0px;line-height:33.0px;font-size:16.5px;color:#2a2a55;left:-283.8px;width:2000px;text-align:right;transform:scaleX(1.02);transform-origin:100% 50%;">22</div>
<div class="t" style="top:1102.2px;height:33.0px;line-height:33.0px;font-size:16.5px;color:#2a2a55;left:1716.2px;transform:scaleX(1.02);transform-origin:0 50%;">.8</div>
<div class="t" style="top:1102.2px;height:33.0px;line-height:33.0px;font-size:16.5px;color:#2a2a55;left:-164.8px;width:2000px;text-align:right;transform:scaleX(1.02);transform-origin:100% 50%;">-0</div>
<div class="t" style="top:1102.2px;height:33.0px;line-height:33.0px;font-size:16.5px;color:#2a2a55;left:1835.2px;transform:scaleX(1.02);transform-origin:0 50%;">.004031</div>
<div class="t" style="top:1102.2px;height:33.0px;line-height:33.0px;font-size:16.5px;color:#2a2a55;left:-7.8px;width:2000px;text-align:right;transform:scaleX(1.02);transform-origin:100% 50%;">-0</div>
<div class="t" style="top:1102.2px;height:33.0px;line-height:33.0px;font-size:16.5px;color:#2a2a55;left:1992.2px;transform:scaleX(1.02);transform-origin:0 50%;">.005003</div>
<div class="t" style="top:1132.0px;height:33.0px;line-height:33.0px;font-size:16.5px;color:#2a2a55;left:1274.0px;transform:scaleX(1.0);transform-origin:0 50%;">10.06.2014 03:50:00</div>
<div class="t" style="top:1132.0px;height:33.0px;line-height:33.0px;font-size:16.5px;color:#2a2a55;left:-440.4px;width:2000px;text-align:right;transform:scaleX(1.02);transform-origin:100% 50%;">14</div>
<div class="t" style="top:1132.0px;height:33.0px;line-height:33.0px;font-size:16.5px;color:#2a2a55;left:1559.6px;transform:scaleX(1.02);transform-origin:0 50%;">.57</div>
<div class="t" style="top:1132.0px;height:33.0px;line-height:33.0px;font-size:16.5px;color:#2a2a55;left:-283.8px;width:2000px;text-align:right;transform:scaleX(1.02);transform-origin:100% 50%;">22</div>
<div class="t" style="top:1132.0px;height:33.0px;line-height:33.0px;font-size:16.5px;color:#2a2a55;left:1716.2px;transform:scaleX(1.02);transform-origin:0 50%;">.7</div>
<div class="t" style="top:1132.0px;height:33.0px;line-height:33.0px;font-size:16.5px;color:#2a2a55;left:-164.8px;width:2000px;text-align:right;transform:scaleX(1.02);transform-origin:100% 50%;">-0</div>
<div class="t" style="top:1132.0px;height:33.0px;line-height:33.0px;font-size:16.5px;color:#2a2a55;left:1835.2px;transform:scaleX(1.02);transform-origin:0 50%;">.004031</div>
<div class="t" style="top:1132.0px;height:33.0px;line-height:33.0px;font-size:16.5px;color:#2a2a55;left:-7.8px;width:2000px;text-align:right;transform:scaleX(1.02);transform-origin:100% 50%;">-0</div>
<div class="t" style="top:1132.0px;height:33.0px;line-height:33.0px;font-size:16.5px;color:#2a2a55;left:1992.2px;transform:scaleX(1.02);transform-origin:0 50%;">.005003</div>
<div class="t" style="top:1162.0px;height:33.0px;line-height:33.0px;font-size:16.5px;color:#2a2a55;left:1274.0px;transform:scaleX(1.0);transform-origin:0 50%;">10.06.2014 04:00:00</div>
<div class="t" style="top:1162.0px;height:33.0px;line-height:33.0px;font-size:16.5px;color:#2a2a55;left:-440.4px;width:2000px;text-align:right;transform:scaleX(1.02);transform-origin:100% 50%;">14</div>
<div class="t" style="top:1162.0px;height:33.0px;line-height:33.0px;font-size:16.5px;color:#2a2a55;left:1559.6px;transform:scaleX(1.02);transform-origin:0 50%;">.4</div>
<div class="t" style="top:1162.0px;height:33.0px;line-height:33.0px;font-size:16.5px;color:#2a2a55;left:-283.8px;width:2000px;text-align:right;transform:scaleX(1.02);transform-origin:100% 50%;">22</div>
<div class="t" style="top:1162.0px;height:33.0px;line-height:33.0px;font-size:16.5px;color:#2a2a55;left:1716.2px;transform:scaleX(1.02);transform-origin:0 50%;">.6</div>
<div class="t" style="top:1162.0px;height:33.0px;line-height:33.0px;font-size:16.5px;color:#2a2a55;left:-164.8px;width:2000px;text-align:right;transform:scaleX(1.02);transform-origin:100% 50%;">-0</div>
<div class="t" style="top:1162.0px;height:33.0px;line-height:33.0px;font-size:16.5px;color:#2a2a55;left:1835.2px;transform:scaleX(1.02);transform-origin:0 50%;">.004035</div>
<div class="t" style="top:1162.0px;height:33.0px;line-height:33.0px;font-size:16.5px;color:#2a2a55;left:-7.8px;width:2000px;text-align:right;transform:scaleX(1.02);transform-origin:100% 50%;">-0</div>
<div class="t" style="top:1162.0px;height:33.0px;line-height:33.0px;font-size:16.5px;color:#2a2a55;left:1992.2px;transform:scaleX(1.02);transform-origin:0 50%;">.005001</div>
<div class="t" style="top:1191.9px;height:33.0px;line-height:33.0px;font-size:16.5px;color:#2a2a55;left:1274.0px;transform:scaleX(1.0);transform-origin:0 50%;">10.06.2014 04:10:00</div>
<div class="t" style="top:1191.9px;height:33.0px;line-height:33.0px;font-size:16.5px;color:#2a2a55;left:-440.4px;width:2000px;text-align:right;transform:scaleX(1.02);transform-origin:100% 50%;">14</div>
<div class="t" style="top:1191.9px;height:33.0px;line-height:33.0px;font-size:16.5px;color:#2a2a55;left:1559.6px;transform:scaleX(1.02);transform-origin:0 50%;">.33</div>
<div class="t" style="top:1191.9px;height:33.0px;line-height:33.0px;font-size:16.5px;color:#2a2a55;left:-283.8px;width:2000px;text-align:right;transform:scaleX(1.02);transform-origin:100% 50%;">22</div>
<div class="t" style="top:1191.9px;height:33.0px;line-height:33.0px;font-size:16.5px;color:#2a2a55;left:1716.2px;transform:scaleX(1.02);transform-origin:0 50%;">.47</div>
<div class="t" style="top:1191.9px;height:33.0px;line-height:33.0px;font-size:16.5px;color:#2a2a55;left:-164.8px;width:2000px;text-align:right;transform:scaleX(1.02);transform-origin:100% 50%;">-0</div>
<div class="t" style="top:1191.9px;height:33.0px;line-height:33.0px;font-size:16.5px;color:#2a2a55;left:1835.2px;transform:scaleX(1.02);transform-origin:0 50%;">.004035</div>
<div class="t" style="top:1191.9px;height:33.0px;line-height:33.0px;font-size:16.5px;color:#2a2a55;left:-7.8px;width:2000px;text-align:right;transform:scaleX(1.02);transform-origin:100% 50%;">-0</div>
<div class="t" style="top:1191.9px;height:33.0px;line-height:33.0px;font-size:16.5px;color:#2a2a55;left:1992.2px;transform:scaleX(1.02);transform-origin:0 50%;">.005001</div>
<div class="t" style="top:1221.8px;height:33.0px;line-height:33.0px;font-size:16.5px;color:#2a2a55;left:1274.0px;transform:scaleX(1.0);transform-origin:0 50%;">10.06.2014 04:20:00</div>
<div class="t" style="top:1221.8px;height:33.0px;line-height:33.0px;font-size:16.5px;color:#2a2a55;left:-440.4px;width:2000px;text-align:right;transform:scaleX(1.02);transform-origin:100% 50%;">14</div>
<div class="t" style="top:1221.8px;height:33.0px;line-height:33.0px;font-size:16.5px;color:#2a2a55;left:1559.6px;transform:scaleX(1.02);transform-origin:0 50%;">.27</div>
<div class="t" style="top:1221.8px;height:33.0px;line-height:33.0px;font-size:16.5px;color:#2a2a55;left:-283.8px;width:2000px;text-align:right;transform:scaleX(1.02);transform-origin:100% 50%;">22</div>
<div class="t" style="top:1221.8px;height:33.0px;line-height:33.0px;font-size:16.5px;color:#2a2a55;left:1716.2px;transform:scaleX(1.02);transform-origin:0 50%;">.33</div>
<div class="t" style="top:1221.8px;height:33.0px;line-height:33.0px;font-size:16.5px;color:#2a2a55;left:-164.8px;width:2000px;text-align:right;transform:scaleX(1.02);transform-origin:100% 50%;">-0</div>
<div class="t" style="top:1221.8px;height:33.0px;line-height:33.0px;font-size:16.5px;color:#2a2a55;left:1835.2px;transform:scaleX(1.02);transform-origin:0 50%;">.004035</div>
<div class="t" style="top:1221.8px;height:33.0px;line-height:33.0px;font-size:16.5px;color:#2a2a55;left:-7.8px;width:2000px;text-align:right;transform:scaleX(1.02);transform-origin:100% 50%;">-0</div>
<div class="t" style="top:1221.8px;height:33.0px;line-height:33.0px;font-size:16.5px;color:#2a2a55;left:1992.2px;transform:scaleX(1.02);transform-origin:0 50%;">.005001</div>
<div class="t" style="top:1251.7px;height:33.0px;line-height:33.0px;font-size:16.5px;color:#2a2a55;left:1274.0px;transform:scaleX(1.0);transform-origin:0 50%;">10.06.2014 04:30:00</div>
<div class="t" style="top:1251.7px;height:33.0px;line-height:33.0px;font-size:16.5px;color:#2a2a55;left:-440.4px;width:2000px;text-align:right;transform:scaleX(1.02);transform-origin:100% 50%;">14</div>
<div class="t" style="top:1251.7px;height:33.0px;line-height:33.0px;font-size:16.5px;color:#2a2a55;left:1559.6px;transform:scaleX(1.02);transform-origin:0 50%;">.2</div>
<div class="t" style="top:1251.7px;height:33.0px;line-height:33.0px;font-size:16.5px;color:#2a2a55;left:-283.8px;width:2000px;text-align:right;transform:scaleX(1.02);transform-origin:100% 50%;">22</div>
<div class="t" style="top:1251.7px;height:33.0px;line-height:33.0px;font-size:16.5px;color:#2a2a55;left:1716.2px;transform:scaleX(1.02);transform-origin:0 50%;">.2</div>
<div class="t" style="top:1251.7px;height:33.0px;line-height:33.0px;font-size:16.5px;color:#2a2a55;left:-164.8px;width:2000px;text-align:right;transform:scaleX(1.02);transform-origin:100% 50%;">-0</div>
<div class="t" style="top:1251.7px;height:33.0px;line-height:33.0px;font-size:16.5px;color:#2a2a55;left:1835.2px;transform:scaleX(1.02);transform-origin:0 50%;">.004035</div>
<div class="t" style="top:1251.7px;height:33.0px;line-height:33.0px;font-size:16.5px;color:#2a2a55;left:-7.8px;width:2000px;text-align:right;transform:scaleX(1.02);transform-origin:100% 50%;">-0</div>
<div class="t" style="top:1251.7px;height:33.0px;line-height:33.0px;font-size:16.5px;color:#2a2a55;left:1992.2px;transform:scaleX(1.02);transform-origin:0 50%;">.005001</div>
<div class="r" style="left:32px;top:178px;width:664px;height:692px;border:4.2px solid #35dd64;border-radius:30px;box-sizing:border-box;box-shadow:inset 0 0 8px 2px rgba(0,0,0,0.18), 0 2px 6px 1px rgba(0,0,0,0.22);z-index:50"></div>
<div class="r" style="left:696px;top:179px;width:710px;height:691px;border:4.2px solid #35dd64;border-radius:30px;box-sizing:border-box;box-shadow:inset 0 0 8px 2px rgba(0,0,0,0.18), 0 2px 6px 1px rgba(0,0,0,0.22);z-index:50"></div>
<div class="r" style="left:1402px;top:179px;width:673px;height:692px;border:4.2px solid #35dd64;border-radius:30px;box-sizing:border-box;box-shadow:inset 0 0 8px 2px rgba(0,0,0,0.18), 0 2px 6px 1px rgba(0,0,0,0.22);z-index:50"></div>
<div class="r" style="left:27px;top:866px;width:1225px;height:450px;border:4.2px solid #35dd64;border-radius:30px;box-sizing:border-box;box-shadow:inset 0 0 8px 2px rgba(0,0,0,0.18), 0 2px 6px 1px rgba(0,0,0,0.22);z-index:50"></div>
<div class="r" style="left:1248px;top:866px;width:827px;height:450px;border:4.2px solid #35dd64;border-radius:30px;box-sizing:border-box;box-shadow:inset 0 0 8px 2px rgba(0,0,0,0.18), 0 2px 6px 1px rgba(0,0,0,0.22);z-index:50"></div>
<div class="r" style="left:52px;top:192px;width:568px;height:60px;background:#c3f3cf;border:2.6px solid #35dd64;box-sizing:border-box;box-shadow:3px 4px 6px rgba(0,0,0,0.35);z-index:60"></div>
<div class="t" style="left:69px;top:199.1px;line-height:45.2px;font-size:36px;color:#111;-webkit-text-stroke:0.9px #c3f3cf;z-index:61;transform:scaleX(0.945);transform-origin:0 0">(a)<span style="display:inline-block;width:17px"></span>Overview of Correlations</div><div class="r" style="left:951px;top:201px;width:393px;height:108px;background:#c3f3cf;border:2.6px solid #35dd64;box-sizing:border-box;box-shadow:3px 4px 6px rgba(0,0,0,0.35);z-index:60"></div>
<div class="t" style="left:968px;top:208.6px;line-height:45.2px;font-size:36px;color:#111;-webkit-text-stroke:0.9px #c3f3cf;z-index:61;transform:scaleX(0.945);transform-origin:0 0">(b) Scatter Plot for<br>selected variable pair</div><div class="r" style="left:1472px;top:260px;width:545px;height:107px;background:#c3f3cf;border:2.6px solid #35dd64;box-sizing:border-box;box-shadow:3px 4px 6px rgba(0,0,0,0.35);z-index:60"></div>
<div class="t" style="left:1488px;top:268.2px;line-height:45.2px;font-size:36px;color:#111;-webkit-text-stroke:0.9px #c3f3cf;z-index:61;transform:scaleX(0.945);transform-origin:0 0">(c) Correlation of selected pair<br>per category</div><div class="r" style="left:639px;top:950px;width:595px;height:61px;background:#c3f3cf;border:2.6px solid #35dd64;box-sizing:border-box;box-shadow:3px 4px 6px rgba(0,0,0,0.35);z-index:60"></div>
<div class="t" style="left:655px;top:958.3px;line-height:45.2px;font-size:36px;color:#111;-webkit-text-stroke:0.9px #c3f3cf;z-index:61;transform:scaleX(0.935);transform-origin:0 0">(d) Time Series View for selected pair</div><div class="r" style="left:1610px;top:1055px;width:378px;height:61px;background:#c3f3cf;border:2.6px solid #35dd64;box-sizing:border-box;box-shadow:3px 4px 6px rgba(0,0,0,0.35);z-index:60"></div>
<div class="t" style="left:1627px;top:1062.0px;line-height:45.2px;font-size:36px;color:#111;-webkit-text-stroke:0.9px #c3f3cf;z-index:61;transform:scaleX(0.915);transform-origin:0 0">(e) Table: Single Values</div></body></html>
